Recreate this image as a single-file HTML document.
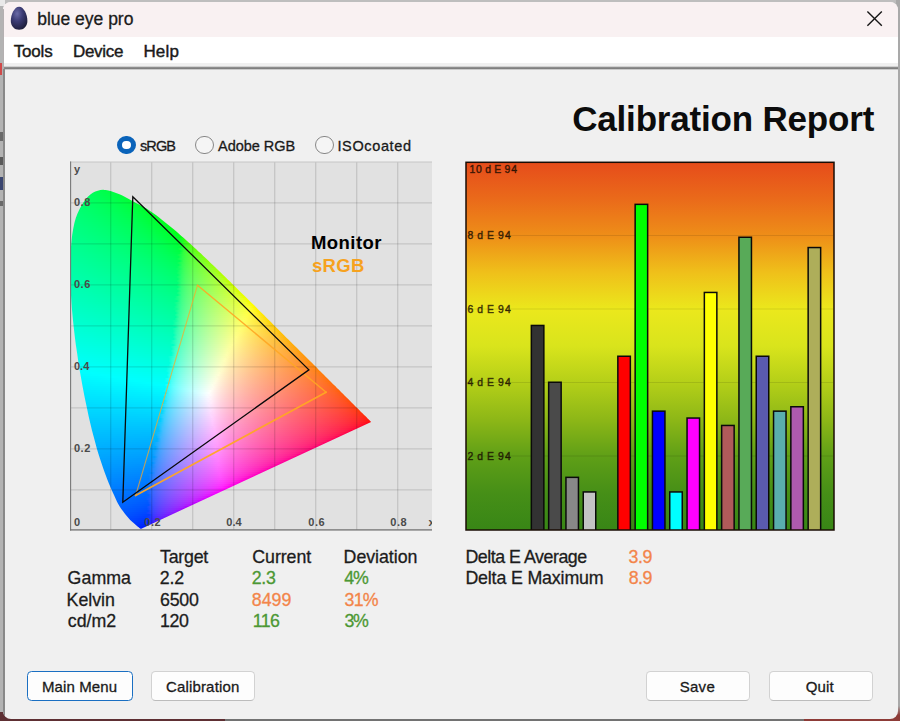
<!DOCTYPE html>
<html lang="en">
<head>
<meta charset="utf-8">
<title>blue eye pro</title>
<style>
html,body{margin:0;padding:0}
body{width:900px;height:721px;overflow:hidden;position:relative;background:#bebebe;font-family:"Liberation Sans",sans-serif}
.abs{position:absolute}
#deskl{left:0;top:0;width:4px;height:721px;background:#b3b3b3}
#deskb1{left:0;top:712px;width:225px;height:9px;background:#5e2f33}
#deskb2{left:225px;top:712px;width:579px;height:9px;background:#727272}
#deskb3{left:804px;top:706px;width:96px;height:15px;background:linear-gradient(180deg,#a8a8a8 0,#8d3b37 60%)}
#deskr{left:896px;top:0;width:4px;height:708px;background:#a9a9a9}
#win{left:2.5px;top:1.5px;width:895.5px;height:717px;border-radius:8px;background:#f0f0f0;overflow:hidden}
#titlebar{left:0;top:0;width:100%;height:35.7px;background:#f9f1f2}
#menubar{left:0;top:35.7px;width:100%;height:25.9px;background:#fff}
#sep{left:0;top:64px;width:100%;height:4.4px;background:linear-gradient(180deg,#f0f0f0 0,#c4c4c4 18%,#8c8c8c 38%,#757575 55%,#8c8c8c 72%,#d4d4d4 90%,#f2f2f2 100%)}
#lborder{left:.2px;top:66px;width:2.5px;height:660px;background:linear-gradient(90deg,#9a9a9a 0,#7e7e7e 40%,#808080 70%,#b8b8b8 100%)}
.btn{box-sizing:border-box;height:29.5px;top:671px;border:1px solid #d2d2d2;border-bottom-color:#bcbcbc;border-radius:4.5px;background:#fdfdfd}
.btn.def{border:1.6px solid #1a6fc2}
.radio{box-sizing:border-box;width:18.4px;height:18.4px;border-radius:50%;top:135.8px;border:1.5px solid #878787;background:#f5f5f5}
.radio.on{border:5.8px solid #0a63ba;background:#fff}
#cie{left:70px;top:161.5px;width:362px;height:369px;background:#e1e1e1;overflow:hidden}
#gam{left:0;top:0;width:900px;height:721px;filter:blur(.65px)}
#gamc{left:0;top:0;width:900px;height:721px;clip-path:path("M141.3 528.7 L141.2 528.7 L141.2 528.7 L141.1 528.7 L141.1 528.7 L141.0 528.7 L141.0 528.7 L140.9 528.7 L140.8 528.8 L140.7 528.8 L140.6 528.8 L140.4 528.8 L140.2 528.6 L139.8 528.3 L139.4 528.0 L138.9 527.6 L138.4 527.1 L137.8 526.7 L137.3 526.2 L136.8 525.8 L136.3 525.4 L135.8 525.0 L135.3 524.5 L134.8 524.0 L134.1 523.4 L133.4 522.8 L132.7 522.2 L131.9 521.5 L131.0 520.7 L130.0 519.7 L128.9 518.5 L127.6 517.0 L126.1 515.2 L124.5 513.2 L122.9 511.1 L121.3 509.0 L120.0 507.0 L118.8 505.1 L117.8 503.3 L116.9 501.5 L116.0 499.6 L115.1 497.5 L114.0 495.1 L112.8 492.5 L111.6 489.7 L110.3 486.7 L108.9 483.5 L107.5 480.0 L106.1 476.3 L104.6 472.3 L103.1 468.1 L101.6 463.6 L100.0 458.8 L98.4 453.8 L96.8 448.4 L95.3 442.7 L93.7 436.7 L92.0 430.4 L90.4 423.7 L88.8 416.9 L87.3 409.8 L85.7 402.3 L84.1 394.5 L82.6 386.4 L81.1 378.2 L79.6 369.8 L78.3 361.5 L77.1 353.0 L75.8 344.4 L74.7 335.7 L73.7 327.0 L72.8 318.4 L72.0 310.0 L71.4 301.7 L70.9 293.4 L70.5 285.3 L70.3 277.4 L70.2 269.6 L70.3 262.2 L70.5 255.0 L70.9 248.0 L71.5 241.2 L72.2 234.7 L73.2 228.7 L74.4 223.1 L75.8 218.1 L77.5 213.4 L79.5 209.2 L81.5 205.4 L83.7 202.0 L85.8 199.0 L88.1 196.5 L90.4 194.5 L92.8 192.8 L95.3 191.6 L97.8 190.7 L100.4 190.1 L103.0 189.8 L105.7 190.0 L108.4 190.6 L111.2 191.3 L114.0 192.2 L116.7 193.2 L119.5 194.3 L122.3 195.6 L125.1 197.0 L127.9 198.5 L130.6 200.0 L133.3 201.5 L136.0 202.9 L138.6 204.3 L141.3 205.7 L143.8 207.1 L146.4 208.6 L149.0 210.2 L151.5 212.0 L154.1 213.8 L156.6 215.6 L159.1 217.5 L161.5 219.5 L164.0 221.4 L166.5 223.4 L169.0 225.4 L171.5 227.5 L174.0 229.5 L176.4 231.6 L178.9 233.7 L181.3 235.9 L183.8 238.0 L186.2 240.2 L188.7 242.4 L191.1 244.6 L193.6 246.9 L196.0 249.1 L198.4 251.4 L200.9 253.6 L203.3 255.9 L205.8 258.2 L208.2 260.6 L210.6 262.9 L213.1 265.2 L215.5 267.6 L218.0 269.9 L220.4 272.3 L222.9 274.7 L225.3 277.0 L227.7 279.4 L230.2 281.8 L232.6 284.2 L235.0 286.6 L237.5 289.0 L239.9 291.4 L242.3 293.7 L244.7 296.1 L247.2 298.5 L249.6 300.9 L252.0 303.3 L254.4 305.6 L256.8 308.0 L259.1 310.4 L261.5 312.7 L263.9 315.1 L266.2 317.4 L268.5 319.7 L270.9 322.1 L273.2 324.4 L275.5 326.7 L277.8 328.9 L280.0 331.2 L282.3 333.4 L284.5 335.7 L286.7 337.9 L288.9 340.1 L291.1 342.2 L293.3 344.4 L295.4 346.5 L297.5 348.6 L299.6 350.7 L301.7 352.8 L303.7 354.8 L305.7 356.8 L307.7 358.7 L309.7 360.7 L311.6 362.6 L313.5 364.5 L315.3 366.3 L317.1 368.1 L318.8 369.9 L320.5 371.6 L322.2 373.2 L323.8 374.8 L325.4 376.4 L327.0 378.0 L328.5 379.5 L330.0 381.0 L331.5 382.5 L332.9 383.9 L334.3 385.3 L335.7 386.6 L336.9 387.9 L338.1 389.0 L339.2 390.1 L340.3 391.2 L341.5 392.4 L342.9 393.8 L344.5 395.4 L346.3 397.2 L348.2 399.1 L350.1 400.9 L351.8 402.7 L353.4 404.3 L354.8 405.7 L356.0 406.9 L357.2 408.0 L358.2 409.1 L359.2 410.0 L360.1 411.0 L361.0 411.9 L361.9 412.7 L362.7 413.5 L363.4 414.2 L364.1 414.9 L364.7 415.5 L365.3 416.1 L365.8 416.6 L366.3 417.1 L366.8 417.6 L367.2 418.0 L367.6 418.4 L367.9 418.7 L368.2 419.0 L368.5 419.3 L368.7 419.5 L369.0 419.8 L369.2 420.0 L369.5 420.3 L369.7 420.5 L370.0 420.8 L370.2 421.0 L370.4 421.2 L370.6 421.4 L370.7 421.5 L370.8 421.6 L370.9 421.7 L371.0 421.8 L371.0 421.8 L371.1 421.9Z")}
#gamc i{position:absolute;display:block}
svg.ov{position:absolute;left:0;top:0;width:900px;height:721px;overflow:visible}
svg.ov text{font-family:"Liberation Sans",sans-serif;white-space:pre}
</style>
</head>
<body>
<div class="abs" id="deskl"></div><div class="abs" style="left:0;top:0;width:5px;height:6px;background:#e9e9e9"></div><div class="abs" id="deskr"></div>
<div class="abs" style="left:0;top:63px;width:2px;height:12px;background:#cf4a4a"></div>
<div class="abs" style="left:0;top:132px;width:3px;height:9px;background:#6a6a6a"></div>
<div class="abs" style="left:0;top:157px;width:3px;height:8px;background:#5a5a5a"></div>
<div class="abs" style="left:0;top:177px;width:3px;height:13px;background:#3a4670"></div>
<div class="abs" style="left:0;top:201px;width:3px;height:5px;background:#6a6a6a"></div>
<div class="abs" id="deskb1"></div><div class="abs" id="deskb2"></div><div class="abs" id="deskb3"></div>
<div class="abs" id="win">
  <div class="abs" id="titlebar"></div>
  <div class="abs" id="menubar"></div>
  <div class="abs" id="sep"></div>
  <div class="abs" id="lborder"></div>
  <div class="abs" style="left:0;top:7px;width:1px;height:60px;background:#b4b0b1"></div>
</div>
<!-- radios -->
<div class="abs radio on" style="left:117.3px"></div>
<div class="abs radio" style="left:195.3px"></div>
<div class="abs radio" style="left:315.3px"></div>
<!-- buttons -->
<div class="abs btn def" style="left:27.4px;width:105.5px"></div>
<div class="abs btn" style="left:151.4px;width:104.1px"></div>
<div class="abs btn" style="left:645.9px;width:104.1px"></div>
<div class="abs btn" style="left:768.7px;width:104.1px"></div>
<!-- CIE chart background -->
<div class="abs" id="cie"></div>
<div class="abs" id="gam"><div class="abs" id="gamc"><i style="left:101px;top:188px;width:3px;height:2px;background:linear-gradient(90deg,#00ff4c 0%,#00ff49 100%)"></i><i style="left:93px;top:190px;width:21px;height:2px;background:linear-gradient(90deg,#00ff55 0%,#00ff52 20%,#00ff4e 40%,#00ff49 60%,#00ff45 80%,#00ff3f 100%)"></i><i style="left:90px;top:192px;width:30px;height:2px;background:linear-gradient(90deg,#00ff5a 0%,#00ff57 12.5%,#00ff53 25%,#00ff50 37.5%,#00ff4c 50%,#00ff48 62.5%,#00ff44 75%,#00ff3f 87.5%,#00ff3a 100%)"></i><i style="left:87px;top:194px;width:37px;height:2px;background:linear-gradient(90deg,#00ff5e 0%,#00ff5b 11.11%,#00ff58 22.22%,#00ff54 33.33%,#00ff50 44.44%,#00ff4c 55.56%,#00ff48 66.67%,#00ff43 77.78%,#00ff3e 88.89%,#00ff38 100%)"></i><i style="left:86px;top:196px;width:42px;height:2px;background:linear-gradient(90deg,#00ff61 0%,#00ff5e 10%,#00ff5a 20%,#00ff57 30%,#00ff53 40%,#00ff4f 50%,#00ff4b 60%,#00ff46 70%,#00ff41 80%,#00ff3b 90%,#00ff35 100%)"></i><i style="left:84px;top:198px;width:48px;height:2px;background:linear-gradient(90deg,#00ff64 0%,#00ff61 8.333%,#00ff5e 16.67%,#00ff5b 25%,#00ff58 33.33%,#00ff54 41.67%,#00ff50 50%,#00ff4c 58.33%,#00ff48 66.67%,#00ff43 75%,#00ff3e 83.33%,#00ff38 91.67%,#00ff31 100%)"></i><i style="left:82px;top:200px;width:53px;height:2px;background:linear-gradient(90deg,#00ff67 0%,#00ff64 7.692%,#00ff61 15.38%,#00ff5e 23.08%,#00ff5b 30.77%,#00ff58 38.46%,#00ff54 46.15%,#00ff50 53.85%,#00ff4c 61.54%,#00ff47 69.23%,#00ff43 76.92%,#00ff3d 84.62%,#00ff37 92.31%,#00ff30 100%)"></i><i style="left:81px;top:202px;width:58px;height:2px;background:linear-gradient(90deg,#00ff6a 0%,#00ff67 7.143%,#00ff64 14.29%,#00ff61 21.43%,#00ff5e 28.57%,#00ff5a 35.71%,#00ff57 42.86%,#00ff53 50%,#00ff4f 57.14%,#00ff4b 64.29%,#00ff46 71.43%,#00ff41 78.57%,#00ff3b 85.71%,#00ff34 92.86%,#00ff2c 100%)"></i><i style="left:80px;top:204px;width:63px;height:2px;background:linear-gradient(90deg,#00ff6c 0%,#00ff69 6.25%,#00ff67 12.5%,#00ff64 18.75%,#00ff61 25%,#00ff5e 31.25%,#00ff5b 37.5%,#00ff57 43.75%,#00ff54 50%,#00ff50 56.25%,#00ff4c 62.5%,#00ff47 68.75%,#00ff43 75%,#00ff3d 81.25%,#00ff37 87.5%,#00ff30 93.75%,#00ff27 100%)"></i><i style="left:79px;top:206px;width:68px;height:2px;background:linear-gradient(90deg,#00ff6e 0%,#00ff6c 5.882%,#00ff69 11.76%,#00ff66 17.65%,#00ff63 23.53%,#00ff60 29.41%,#00ff5d 35.29%,#00ff5a 41.18%,#00ff56 47.06%,#00ff53 52.94%,#00ff4f 58.82%,#00ff4a 64.71%,#00ff46 70.59%,#00ff41 76.47%,#00ff3b 82.35%,#00ff34 88.24%,#00ff2c 94.12%,#00ff22 100%)"></i><i style="left:78px;top:208px;width:72px;height:2px;background:linear-gradient(90deg,#00ff71 0%,#00ff6e 5.556%,#00ff6b 11.11%,#00ff69 16.67%,#00ff66 22.22%,#00ff63 27.78%,#00ff60 33.33%,#00ff5d 38.89%,#00ff5a 44.44%,#00ff56 50%,#00ff52 55.56%,#00ff4e 61.11%,#00ff4a 66.67%,#00ff45 72.22%,#00ff40 77.78%,#00ff3a 83.33%,#00ff33 88.89%,#00ff2a 94.44%,#00ff1f 100%)"></i><i style="left:77px;top:210px;width:76px;height:2px;background:linear-gradient(90deg,#00ff73 0%,#00ff70 5.263%,#00ff6e 10.53%,#00ff6b 15.79%,#00ff69 21.05%,#00ff66 26.32%,#00ff63 31.58%,#00ff60 36.84%,#00ff5c 42.11%,#00ff59 47.37%,#00ff55 52.63%,#00ff52 57.89%,#00ff4d 63.16%,#00ff49 68.42%,#00ff44 73.68%,#00ff3e 78.95%,#00ff38 84.21%,#00ff31 89.47%,#00ff28 94.74%,#00ff1c 100%)"></i><i style="left:76px;top:212px;width:80px;height:2px;background:linear-gradient(90deg,#00ff75 0%,#00ff73 5%,#00ff70 10%,#00ff6e 15%,#00ff6b 20%,#00ff68 25%,#00ff65 30%,#00ff62 35%,#00ff5f 40%,#00ff5c 45%,#00ff59 50%,#00ff55 55%,#00ff51 60%,#00ff4d 65%,#00ff48 70%,#00ff43 75%,#00ff3d 80%,#00ff37 85%,#00ff2f 90%,#00ff26 95%,#00ff17 100%)"></i><i style="left:75px;top:214px;width:83px;height:2px;background:linear-gradient(90deg,#00ff77 0%,#00ff75 4.762%,#00ff73 9.524%,#00ff70 14.29%,#00ff6e 19.05%,#00ff6b 23.81%,#00ff68 28.57%,#00ff65 33.33%,#00ff62 38.1%,#00ff5f 42.86%,#00ff5c 47.62%,#00ff59 52.38%,#00ff55 57.14%,#00ff51 61.9%,#00ff4d 66.67%,#00ff48 71.43%,#00ff43 76.19%,#00ff3d 80.95%,#00ff37 85.71%,#00ff2f 90.48%,#00ff26 95.24%,#00ff18 100%)"></i><i style="left:74px;top:216px;width:87px;height:2px;background:linear-gradient(90deg,#00ff79 0%,#00ff77 4.545%,#00ff75 9.091%,#00ff72 13.64%,#00ff70 18.18%,#00ff6d 22.73%,#00ff6b 27.27%,#00ff68 31.82%,#00ff65 36.36%,#00ff62 40.91%,#00ff5f 45.45%,#00ff5c 50%,#00ff58 54.55%,#00ff54 59.09%,#00ff50 63.64%,#00ff4c 68.18%,#00ff47 72.73%,#00ff42 77.27%,#00ff3c 81.82%,#00ff35 86.36%,#00ff2d 90.91%,#00ff23 95.45%,#00ff12 100%)"></i><i style="left:74px;top:218px;width:90px;height:2px;background:linear-gradient(90deg,#00ff7b 0%,#00ff79 4.545%,#00ff76 9.091%,#00ff74 13.64%,#00ff71 18.18%,#00ff6f 22.73%,#00ff6c 27.27%,#00ff69 31.82%,#00ff66 36.36%,#00ff63 40.91%,#00ff60 45.45%,#00ff5c 50%,#00ff59 54.55%,#00ff55 59.09%,#00ff51 63.64%,#00ff4c 68.18%,#00ff47 72.73%,#00ff42 77.27%,#00ff3c 81.82%,#00ff35 86.36%,#00ff2c 90.91%,#00ff21 95.45%,#00ff09 100%)"></i><i style="left:73px;top:220px;width:93px;height:2px;background:linear-gradient(90deg,#00ff7d 0%,#00ff7b 4.348%,#00ff79 8.696%,#00ff76 13.04%,#00ff74 17.39%,#00ff71 21.74%,#00ff6f 26.09%,#00ff6c 30.43%,#00ff69 34.78%,#00ff66 39.13%,#00ff63 43.48%,#00ff60 47.83%,#00ff5c 52.17%,#00ff59 56.52%,#00ff55 60.87%,#00ff51 65.22%,#00ff4c 69.57%,#00ff47 73.91%,#00ff42 78.26%,#00ff3c 82.61%,#00ff35 86.96%,#00ff2c 91.3%,#00ff21 95.65%,#00ff09 100%)"></i><i style="left:73px;top:222px;width:96px;height:2px;background:linear-gradient(90deg,#00ff7f 0%,#00ff7d 4.167%,#00ff7a 8.333%,#00ff78 12.5%,#00ff76 16.67%,#00ff73 20.83%,#00ff71 25%,#00ff6e 29.17%,#00ff6b 33.33%,#00ff68 37.5%,#00ff65 41.67%,#00ff62 45.83%,#00ff5f 50%,#00ff5b 54.17%,#00ff58 58.33%,#00ff54 62.5%,#00ff50 66.67%,#00ff4b 70.83%,#00ff46 75%,#00ff40 79.17%,#00ff3a 83.33%,#00ff33 87.5%,#00ff2a 91.67%,#00ff1d 95.83%,#00ff00 100%)"></i><i style="left:72px;top:224px;width:99px;height:2px;background:linear-gradient(90deg,#00ff81 0%,#00ff7f 4%,#00ff7d 8%,#00ff7a 12%,#00ff78 16%,#00ff76 20%,#00ff73 24%,#00ff71 28%,#00ff6e 32%,#00ff6b 36%,#00ff68 40%,#00ff65 44%,#00ff62 48%,#00ff5f 52%,#00ff5c 56%,#00ff58 60%,#00ff54 64%,#00ff50 68%,#00ff4b 72%,#00ff46 76%,#00ff40 80%,#00ff3a 84%,#00ff33 88%,#00ff2a 92%,#00ff1d 96%,#00ff00 100%)"></i><i style="left:72px;top:226px;width:101px;height:2px;background:linear-gradient(90deg,#00ff82 0%,#00ff80 4%,#00ff7e 8%,#00ff7c 12%,#00ff7a 16%,#00ff77 20%,#00ff75 24%,#00ff72 28%,#00ff70 32%,#00ff6d 36%,#00ff6a 40%,#00ff67 44%,#00ff64 48%,#00ff60 52%,#00ff5d 56%,#00ff59 60%,#00ff55 64%,#00ff51 68%,#00ff4c 72%,#00ff47 76%,#00ff41 80%,#00ff3b 84%,#00ff34 88%,#00ff2b 92%,#00ff1e 96%,#00ff00 100%)"></i><i style="left:71px;top:228px;width:105px;height:2px;background:linear-gradient(90deg,#00ff84 0%,#00ff82 3.846%,#00ff80 7.692%,#00ff7e 11.54%,#00ff7c 15.38%,#00ff79 19.23%,#00ff77 23.08%,#00ff75 26.92%,#00ff72 30.77%,#00ff6f 34.62%,#00ff6c 38.46%,#00ff6a 42.31%,#00ff66 46.15%,#00ff63 50%,#00ff60 53.85%,#00ff5c 57.69%,#00ff58 61.54%,#00ff54 65.38%,#00ff50 69.23%,#00ff4b 73.08%,#00ff46 76.92%,#00ff40 80.77%,#00ff3a 84.62%,#00ff32 88.46%,#00ff28 92.31%,#00ff1a 96.15%,#00ff00 100%)"></i><i style="left:71px;top:230px;width:107px;height:2px;background:linear-gradient(90deg,#00ff86 0%,#00ff84 3.704%,#00ff82 7.407%,#00ff80 11.11%,#00ff7e 14.81%,#00ff7b 18.52%,#00ff79 22.22%,#00ff77 25.93%,#00ff74 29.63%,#00ff72 33.33%,#00ff6f 37.04%,#00ff6c 40.74%,#00ff69 44.44%,#00ff66 48.15%,#00ff63 51.85%,#00ff60 55.56%,#00ff5c 59.26%,#00ff58 62.96%,#00ff54 66.67%,#00ff50 70.37%,#00ff4b 74.07%,#00ff46 77.78%,#00ff40 81.48%,#00ff39 85.19%,#00ff32 88.89%,#00ff28 92.59%,#00ff1a 96.3%,#00ff00 100%)"></i><i style="left:71px;top:232px;width:110px;height:2px;background:linear-gradient(90deg,#00ff87 0%,#00ff86 3.571%,#00ff84 7.143%,#00ff81 10.71%,#00ff7f 14.29%,#00ff7d 17.86%,#00ff7b 21.43%,#00ff79 25%,#00ff76 28.57%,#00ff74 32.14%,#00ff71 35.71%,#00ff6e 39.29%,#00ff6b 42.86%,#00ff69 46.43%,#00ff65 50%,#00ff62 53.57%,#00ff5f 57.14%,#00ff5b 60.71%,#00ff57 64.29%,#00ff53 67.86%,#00ff4f 71.43%,#00ff4a 75%,#00ff44 78.57%,#00ff3f 82.14%,#00ff38 85.71%,#00ff30 89.29%,#00ff25 92.86%,#00ff15 96.43%,#00ff00 100%)"></i><i style="left:70px;top:234px;width:113px;height:2px;background:linear-gradient(90deg,#00ff8a 0%,#00ff88 3.571%,#00ff86 7.143%,#00ff83 10.71%,#00ff81 14.29%,#00ff7f 17.86%,#00ff7d 21.43%,#00ff7a 25%,#00ff78 28.57%,#00ff75 32.14%,#00ff73 35.71%,#00ff70 39.29%,#00ff6d 42.86%,#00ff6a 46.43%,#00ff67 50%,#00ff64 53.57%,#00ff60 57.14%,#00ff5d 60.71%,#00ff59 64.29%,#00ff55 67.86%,#00ff50 71.43%,#00ff4b 75%,#00ff46 78.57%,#00ff40 82.14%,#00ff39 85.71%,#00ff31 89.29%,#00ff26 92.86%,#00ff16 96.43%,#17ff00 100%)"></i><i style="left:70px;top:236px;width:115px;height:2px;background:linear-gradient(90deg,#00ff8b 0%,#00ff89 3.448%,#00ff87 6.897%,#00ff85 10.34%,#00ff83 13.79%,#00ff81 17.24%,#00ff7f 20.69%,#00ff7d 24.14%,#00ff7a 27.59%,#00ff78 31.03%,#00ff75 34.48%,#00ff73 37.93%,#00ff70 41.38%,#00ff6d 44.83%,#00ff6a 48.28%,#00ff67 51.72%,#00ff64 55.17%,#00ff60 58.62%,#00ff5c 62.07%,#00ff59 65.52%,#00ff54 68.97%,#00ff50 72.41%,#00ff4b 75.86%,#00ff46 79.31%,#00ff40 82.76%,#00ff39 86.21%,#00ff31 89.66%,#00ff26 93.1%,#00ff15 96.55%,#2eff00 100%)"></i><i style="left:70px;top:238px;width:117px;height:2px;background:linear-gradient(90deg,#00ff8d 0%,#00ff8b 3.448%,#00ff89 6.897%,#00ff87 10.34%,#00ff85 13.79%,#00ff82 17.24%,#00ff80 20.69%,#00ff7e 24.14%,#00ff7c 27.59%,#00ff79 31.03%,#00ff77 34.48%,#00ff74 37.93%,#00ff71 41.38%,#00ff6e 44.83%,#00ff6b 48.28%,#00ff68 51.72%,#00ff65 55.17%,#00ff61 58.62%,#00ff5e 62.07%,#00ff5a 65.52%,#00ff55 68.97%,#00ff51 72.41%,#00ff4c 75.86%,#00ff47 79.31%,#00ff40 82.76%,#00ff3a 86.21%,#00ff31 89.66%,#00ff27 93.1%,#1fff16 96.55%,#3cff00 100%)"></i><i style="left:70px;top:240px;width:120px;height:2px;background:linear-gradient(90deg,#00ff8e 0%,#00ff8c 3.333%,#00ff8a 6.667%,#00ff88 10%,#00ff86 13.33%,#00ff84 16.67%,#00ff82 20%,#00ff80 23.33%,#00ff7d 26.67%,#00ff7b 30%,#00ff79 33.33%,#00ff76 36.67%,#00ff73 40%,#00ff71 43.33%,#00ff6e 46.67%,#00ff6b 50%,#00ff67 53.33%,#00ff64 56.67%,#00ff61 60%,#00ff5d 63.33%,#00ff59 66.67%,#00ff54 70%,#00ff50 73.33%,#00ff4b 76.67%,#00ff45 80%,#00ff3f 83.33%,#00ff38 86.67%,#00ff2f 90%,#15ff24 93.33%,#38ff0f 96.67%,#4cff00 100%)"></i><i style="left:70px;top:242px;width:122px;height:2px;background:linear-gradient(90deg,#00ff90 0%,#00ff8e 3.333%,#00ff8c 6.667%,#00ff8a 10%,#00ff88 13.33%,#00ff86 16.67%,#00ff84 20%,#00ff81 23.33%,#00ff7f 26.67%,#00ff7d 30%,#00ff7a 33.33%,#00ff77 36.67%,#00ff75 40%,#00ff72 43.33%,#00ff6f 46.67%,#00ff6c 50%,#00ff69 53.33%,#00ff65 56.67%,#00ff62 60%,#00ff5e 63.33%,#00ff5a 66.67%,#00ff56 70%,#00ff51 73.33%,#00ff4c 76.67%,#00ff46 80%,#00ff40 83.33%,#00ff39 86.67%,#00ff30 90%,#2dff24 93.33%,#44ff10 96.67%,#55ff00 100%)"></i><i style="left:70px;top:244px;width:124px;height:2px;background:linear-gradient(90deg,#00ff91 0%,#00ff8f 3.226%,#00ff8d 6.452%,#00ff8c 9.677%,#00ff8a 12.9%,#00ff88 16.13%,#00ff85 19.35%,#00ff83 22.58%,#00ff81 25.81%,#00ff7f 29.03%,#00ff7c 32.26%,#00ff7a 35.48%,#00ff77 38.71%,#00ff74 41.94%,#00ff72 45.16%,#00ff6f 48.39%,#00ff6c 51.61%,#00ff68 54.84%,#00ff65 58.06%,#00ff61 61.29%,#00ff5e 64.52%,#00ff5a 67.74%,#00ff55 70.97%,#00ff51 74.19%,#00ff4c 77.42%,#00ff46 80.65%,#00ff40 83.87%,#00ff38 87.1%,#1eff30 90.32%,#3cff24 93.55%,#4eff10 96.77%,#5dff00 100%)"></i><i style="left:69px;top:246px;width:127px;height:2px;background:linear-gradient(90deg,#00ff93 0%,#00ff91 3.125%,#00ff90 6.25%,#00ff8e 9.375%,#00ff8c 12.5%,#00ff8a 15.62%,#00ff88 18.75%,#00ff86 21.88%,#00ff83 25%,#00ff81 28.12%,#00ff7f 31.25%,#00ff7c 34.38%,#00ff7a 37.5%,#00ff77 40.62%,#00ff75 43.75%,#00ff72 46.88%,#00ff6f 50%,#00ff6c 53.12%,#00ff69 56.25%,#00ff65 59.38%,#00ff62 62.5%,#00ff5e 65.62%,#00ff5a 68.75%,#00ff55 71.88%,#00ff51 75%,#00ff4c 78.12%,#00ff46 81.25%,#00ff40 84.38%,#00ff39 87.5%,#33ff30 90.62%,#48ff24 93.75%,#57ff10 96.88%,#64ff00 100%)"></i><i style="left:69px;top:248px;width:129px;height:2px;background:linear-gradient(90deg,#00ff95 0%,#00ff93 3.125%,#00ff91 6.25%,#00ff8f 9.375%,#00ff8d 12.5%,#00ff8b 15.62%,#00ff89 18.75%,#00ff87 21.88%,#00ff85 25%,#00ff83 28.12%,#00ff80 31.25%,#00ff7e 34.38%,#00ff7b 37.5%,#00ff79 40.62%,#00ff76 43.75%,#00ff73 46.88%,#00ff70 50%,#00ff6d 53.12%,#00ff6a 56.25%,#00ff67 59.38%,#00ff63 62.5%,#00ff5f 65.62%,#00ff5b 68.75%,#00ff57 71.88%,#00ff52 75%,#00ff4d 78.12%,#00ff47 81.25%,#00ff41 84.38%,#23ff3a 87.5%,#3fff31 90.62%,#51ff25 93.75%,#5fff12 96.88%,#6bff00 100%)"></i><i style="left:69px;top:250px;width:131px;height:2px;background:linear-gradient(90deg,#00ff96 0%,#00ff95 3.03%,#00ff93 6.061%,#00ff91 9.091%,#00ff8f 12.12%,#00ff8d 15.15%,#00ff8b 18.18%,#00ff89 21.21%,#00ff87 24.24%,#00ff85 27.27%,#00ff83 30.3%,#00ff80 33.33%,#00ff7e 36.36%,#00ff7b 39.39%,#00ff79 42.42%,#00ff76 45.45%,#00ff73 48.48%,#00ff70 51.52%,#00ff6d 54.55%,#00ff6a 57.58%,#00ff67 60.61%,#00ff63 63.64%,#00ff5f 66.67%,#00ff5b 69.7%,#00ff57 72.73%,#00ff52 75.76%,#00ff4d 78.79%,#00ff47 81.82%,#00ff41 84.85%,#35ff3a 87.88%,#4aff31 90.91%,#59ff26 93.94%,#66ff13 96.97%,#72ff00 100%)"></i><i style="left:69px;top:252px;width:134px;height:2px;background:linear-gradient(90deg,#00ff98 0%,#00ff96 2.941%,#00ff95 5.882%,#00ff93 8.824%,#00ff91 11.76%,#00ff8f 14.71%,#00ff8d 17.65%,#00ff8b 20.59%,#00ff89 23.53%,#00ff87 26.47%,#00ff85 29.41%,#00ff82 32.35%,#00ff80 35.29%,#00ff7e 38.24%,#00ff7b 41.18%,#00ff78 44.12%,#00ff76 47.06%,#00ff73 50%,#00ff70 52.94%,#00ff6d 55.88%,#00ff69 58.82%,#00ff66 61.76%,#00ff62 64.71%,#00ff5f 67.65%,#00ff5a 70.59%,#00ff56 73.53%,#00ff51 76.47%,#00ff4c 79.41%,#00ff46 82.35%,#31ff40 85.29%,#47ff38 88.24%,#57ff2f 91.18%,#64ff23 94.12%,#70ff08 97.06%,#7bff00 100%)"></i><i style="left:69px;top:254px;width:136px;height:2px;background:linear-gradient(90deg,#00ff9a 0%,#00ff98 2.941%,#00ff96 5.882%,#00ff94 8.824%,#00ff92 11.76%,#00ff91 14.71%,#00ff8f 17.65%,#00ff8d 20.59%,#00ff8b 23.53%,#00ff88 26.47%,#00ff86 29.41%,#00ff84 32.35%,#00ff82 35.29%,#00ff7f 38.24%,#00ff7d 41.18%,#00ff7a 44.12%,#00ff77 47.06%,#00ff74 50%,#00ff71 52.94%,#00ff6e 55.88%,#00ff6b 58.82%,#00ff67 61.76%,#00ff64 64.71%,#00ff60 67.65%,#00ff5c 70.59%,#00ff57 73.53%,#00ff53 76.47%,#00ff4d 79.41%,#1dff48 82.35%,#3dff41 85.29%,#50ff39 88.24%,#5eff30 91.18%,#6bff24 94.12%,#76ff0c 97.06%,#80ff00 100%)"></i><i style="left:69px;top:256px;width:138px;height:2px;background:linear-gradient(90deg,#00ff9b 0%,#00ff9a 2.941%,#00ff98 5.882%,#00ff96 8.824%,#00ff94 11.76%,#00ff92 14.71%,#00ff90 17.65%,#00ff8e 20.59%,#00ff8c 23.53%,#00ff8a 26.47%,#00ff88 29.41%,#00ff85 32.35%,#00ff83 35.29%,#00ff81 38.24%,#00ff7e 41.18%,#00ff7b 44.12%,#00ff79 47.06%,#00ff76 50%,#00ff73 52.94%,#00ff70 55.88%,#00ff6c 58.82%,#00ff69 61.76%,#00ff65 64.71%,#00ff61 67.65%,#00ff5d 70.59%,#00ff59 73.53%,#00ff54 76.47%,#00ff4f 79.41%,#2eff49 82.35%,#46ff42 85.29%,#57ff3b 88.24%,#65ff31 91.18%,#71ff25 94.12%,#7cff0e 97.06%,#86ff00 100%)"></i><i style="left:69px;top:258px;width:140px;height:2px;background:linear-gradient(90deg,#00ff9d 0%,#00ff9b 2.857%,#00ff99 5.714%,#00ff98 8.571%,#00ff96 11.43%,#00ff94 14.29%,#00ff92 17.14%,#00ff90 20%,#00ff8e 22.86%,#00ff8c 25.71%,#00ff8a 28.57%,#00ff88 31.43%,#00ff85 34.29%,#00ff83 37.14%,#00ff81 40%,#00ff7e 42.86%,#00ff7b 45.71%,#00ff79 48.57%,#00ff76 51.43%,#00ff73 54.29%,#00ff70 57.14%,#00ff6c 60%,#00ff69 62.86%,#00ff65 65.71%,#00ff61 68.57%,#00ff5d 71.43%,#00ff59 74.29%,#00ff54 77.14%,#20ff4f 80%,#3eff49 82.86%,#51ff42 85.71%,#60ff3b 88.57%,#6dff32 91.43%,#78ff25 94.29%,#82ff0f 97.14%,#8cff00 100%)"></i><i style="left:69px;top:260px;width:142px;height:2px;background:linear-gradient(90deg,#00ff9e 0%,#00ff9d 2.778%,#00ff9b 5.556%,#00ff99 8.333%,#00ff98 11.11%,#00ff96 13.89%,#00ff94 16.67%,#00ff92 19.44%,#00ff90 22.22%,#00ff8e 25%,#00ff8c 27.78%,#00ff8a 30.56%,#00ff88 33.33%,#00ff85 36.11%,#00ff83 38.89%,#00ff81 41.67%,#00ff7e 44.44%,#00ff7b 47.22%,#00ff79 50%,#00ff76 52.78%,#00ff73 55.56%,#00ff70 58.33%,#00ff6c 61.11%,#00ff69 63.89%,#00ff65 66.67%,#00ff62 69.44%,#00ff5d 72.22%,#00ff59 75%,#00ff54 77.78%,#36ff4f 80.56%,#4bff49 83.33%,#5bff42 86.11%,#68ff3b 88.89%,#74ff32 91.67%,#7fff26 94.44%,#88ff0f 97.22%,#91ff00 100%)"></i><i style="left:69px;top:262px;width:144px;height:2px;background:linear-gradient(90deg,#00ffa0 0%,#00ff9e 2.778%,#00ff9d 5.556%,#00ff9b 8.333%,#00ff99 11.11%,#00ff97 13.89%,#00ff96 16.67%,#00ff94 19.44%,#00ff92 22.22%,#00ff90 25%,#00ff8e 27.78%,#00ff8b 30.56%,#00ff89 33.33%,#00ff87 36.11%,#00ff85 38.89%,#00ff82 41.67%,#00ff80 44.44%,#00ff7d 47.22%,#00ff7a 50%,#00ff77 52.78%,#00ff74 55.56%,#00ff71 58.33%,#00ff6e 61.11%,#00ff6a 63.89%,#00ff67 66.67%,#00ff63 69.44%,#00ff5f 72.22%,#00ff5a 75%,#23ff55 77.78%,#40ff50 80.56%,#53ff4a 83.33%,#62ff44 86.11%,#6fff3c 88.89%,#7aff33 91.67%,#84ff26 94.44%,#8eff11 97.22%,#97ff00 100%)"></i><i style="left:69px;top:264px;width:146px;height:2px;background:linear-gradient(90deg,#00ffa2 0%,#00ffa0 2.778%,#00ff9e 5.556%,#00ff9d 8.333%,#00ff9b 11.11%,#00ff99 13.89%,#00ff97 16.67%,#00ff95 19.44%,#00ff93 22.22%,#00ff91 25%,#00ff8f 27.78%,#00ff8d 30.56%,#00ff8b 33.33%,#00ff89 36.11%,#00ff86 38.89%,#00ff84 41.67%,#00ff81 44.44%,#00ff7e 47.22%,#00ff7c 50%,#00ff79 52.78%,#00ff76 55.56%,#00ff73 58.33%,#00ff6f 61.11%,#00ff6c 63.89%,#00ff68 66.67%,#00ff64 69.44%,#00ff60 72.22%,#00ff5c 75%,#32ff57 77.78%,#49ff51 80.56%,#5aff4b 83.33%,#68ff45 86.11%,#75ff3d 88.89%,#80ff34 91.67%,#8aff27 94.44%,#93ff12 97.22%,#9cff00 100%)"></i><i style="left:69px;top:266px;width:148px;height:2px;background:linear-gradient(90deg,#00ffa3 0%,#00ffa2 2.703%,#00ffa0 5.405%,#00ff9e 8.108%,#00ff9d 10.81%,#00ff9b 13.51%,#00ff99 16.22%,#00ff97 18.92%,#00ff95 21.62%,#00ff93 24.32%,#00ff91 27.03%,#00ff8f 29.73%,#00ff8d 32.43%,#00ff8b 35.14%,#00ff89 37.84%,#00ff86 40.54%,#00ff84 43.24%,#00ff81 45.95%,#00ff7f 48.65%,#00ff7c 51.35%,#00ff79 54.05%,#00ff76 56.76%,#00ff73 59.46%,#00ff6f 62.16%,#00ff6c 64.86%,#00ff68 67.57%,#00ff64 70.27%,#00ff60 72.97%,#26ff5c 75.68%,#42ff57 78.38%,#55ff51 81.08%,#64ff4b 83.78%,#70ff45 86.49%,#7cff3d 89.19%,#86ff34 91.89%,#90ff27 94.59%,#99ff12 97.3%,#a2ff00 100%)"></i><i style="left:69px;top:268px;width:150px;height:2px;background:linear-gradient(90deg,#00ffa5 0%,#00ffa3 2.632%,#00ffa2 5.263%,#00ffa0 7.895%,#00ff9e 10.53%,#00ff9d 13.16%,#00ff9b 15.79%,#00ff99 18.42%,#00ff97 21.05%,#00ff95 23.68%,#00ff93 26.32%,#00ff91 28.95%,#00ff8f 31.58%,#00ff8d 34.21%,#00ff8b 36.84%,#00ff89 39.47%,#00ff86 42.11%,#00ff84 44.74%,#00ff81 47.37%,#00ff7f 50%,#00ff7c 52.63%,#00ff79 55.26%,#00ff76 57.89%,#00ff73 60.53%,#00ff70 63.16%,#00ff6c 65.79%,#00ff68 68.42%,#00ff65 71.05%,#11ff60 73.68%,#3aff5c 76.32%,#4fff57 78.95%,#5fff51 81.58%,#6cff4c 84.21%,#78ff45 86.84%,#83ff3d 89.47%,#8dff34 92.11%,#96ff27 94.74%,#9fff12 97.37%,#a7ff00 100%)"></i><i style="left:69px;top:270px;width:152px;height:2px;background:linear-gradient(90deg,#00ffa7 0%,#00ffa5 2.632%,#00ffa3 5.263%,#00ffa2 7.895%,#00ffa0 10.53%,#00ff9e 13.16%,#00ff9d 15.79%,#00ff9b 18.42%,#00ff99 21.05%,#00ff97 23.68%,#00ff95 26.32%,#00ff93 28.95%,#00ff91 31.58%,#00ff8f 34.21%,#00ff8d 36.84%,#00ff8a 39.47%,#00ff88 42.11%,#00ff85 44.74%,#00ff83 47.37%,#00ff80 50%,#00ff7d 52.63%,#00ff7a 55.26%,#00ff77 57.89%,#00ff74 60.53%,#00ff71 63.16%,#00ff6e 65.79%,#00ff6a 68.42%,#00ff66 71.05%,#28ff62 73.68%,#44ff5d 76.32%,#57ff58 78.95%,#65ff53 81.58%,#72ff4d 84.21%,#7eff46 86.84%,#88ff3e 89.47%,#92ff35 92.11%,#9bff28 94.74%,#a4ff13 97.37%,#acff00 100%)"></i><i style="left:69px;top:272px;width:155px;height:2px;background:linear-gradient(90deg,#00ffa8 0%,#00ffa7 2.564%,#00ffa5 5.128%,#00ffa3 7.692%,#00ffa2 10.26%,#00ffa0 12.82%,#00ff9e 15.38%,#00ff9d 17.95%,#00ff9b 20.51%,#00ff99 23.08%,#00ff97 25.64%,#00ff95 28.21%,#00ff93 30.77%,#00ff91 33.33%,#00ff8f 35.9%,#00ff8c 38.46%,#00ff8a 41.03%,#00ff88 43.59%,#00ff85 46.15%,#00ff83 48.72%,#00ff80 51.28%,#00ff7d 53.85%,#00ff7a 56.41%,#00ff77 58.97%,#00ff74 61.54%,#00ff71 64.1%,#00ff6d 66.67%,#00ff69 69.23%,#22ff65 71.79%,#41ff61 74.36%,#54ff5c 76.92%,#64ff57 79.49%,#71ff52 82.05%,#7cff4b 84.62%,#87ff44 87.18%,#91ff3c 89.74%,#9aff32 92.31%,#a3ff24 94.87%,#abff00 97.44%,#b3ff00 100%)"></i><i style="left:69px;top:274px;width:157px;height:2px;background:linear-gradient(90deg,#00ffaa 0%,#00ffa8 2.564%,#00ffa7 5.128%,#00ffa5 7.692%,#00ffa3 10.26%,#00ffa2 12.82%,#00ffa0 15.38%,#00ff9e 17.95%,#00ff9c 20.51%,#00ff9b 23.08%,#00ff99 25.64%,#00ff97 28.21%,#00ff95 30.77%,#00ff92 33.33%,#00ff90 35.9%,#00ff8e 38.46%,#00ff8c 41.03%,#00ff89 43.59%,#00ff87 46.15%,#00ff84 48.72%,#00ff81 51.28%,#00ff7f 53.85%,#00ff7c 56.41%,#00ff79 58.97%,#00ff75 61.54%,#00ff72 64.1%,#00ff6f 66.67%,#00ff6b 69.23%,#31ff67 71.79%,#4aff62 74.36%,#5bff5d 76.92%,#6aff58 79.49%,#77ff53 82.05%,#82ff4c 84.62%,#8cff45 87.18%,#96ff3d 89.74%,#9fff33 92.31%,#a8ff25 94.87%,#b1ff00 97.44%,#b9ff00 100%)"></i><i style="left:69px;top:276px;width:159px;height:2px;background:linear-gradient(90deg,#00ffab 0%,#00ffaa 2.5%,#00ffa8 5%,#00ffa7 7.5%,#00ffa5 10%,#00ffa4 12.5%,#00ffa2 15%,#00ffa0 17.5%,#00ff9e 20%,#00ff9d 22.5%,#00ff9b 25%,#00ff99 27.5%,#00ff97 30%,#00ff95 32.5%,#00ff93 35%,#00ff90 37.5%,#00ff8e 40%,#00ff8c 42.5%,#00ff89 45%,#00ff87 47.5%,#00ff84 50%,#00ff82 52.5%,#00ff7f 55%,#00ff7c 57.5%,#00ff79 60%,#00ff76 62.5%,#00ff72 65%,#00ff6f 67.5%,#25ff6b 70%,#43ff67 72.5%,#56ff62 75%,#65ff5e 77.5%,#73ff58 80%,#7eff53 82.5%,#89ff4c 85%,#93ff45 87.5%,#9cff3d 90%,#a5ff33 92.5%,#aeff25 95%,#b6ff00 97.5%,#beff00 100%)"></i><i style="left:69px;top:278px;width:161px;height:2px;background:linear-gradient(90deg,#00ffad 0%,#00ffac 2.5%,#00ffaa 5%,#00ffa8 7.5%,#00ffa7 10%,#00ffa5 12.5%,#00ffa4 15%,#00ffa2 17.5%,#00ffa0 20%,#00ff9e 22.5%,#00ff9c 25%,#00ff9a 27.5%,#00ff98 30%,#00ff96 32.5%,#00ff94 35%,#00ff92 37.5%,#00ff90 40%,#00ff8d 42.5%,#00ff8b 45%,#00ff89 47.5%,#00ff86 50%,#00ff83 52.5%,#00ff80 55%,#00ff7d 57.5%,#00ff7a 60%,#00ff77 62.5%,#00ff74 65%,#00ff70 67.5%,#33ff6c 70%,#4cff68 72.5%,#5dff64 75%,#6cff5f 77.5%,#78ff5a 80%,#84ff54 82.5%,#8eff4d 85%,#98ff46 87.5%,#a2ff3e 90%,#aaff33 92.5%,#b3ff25 95%,#bbff00 97.5%,#c3ff00 100%)"></i><i style="left:69px;top:280px;width:163px;height:2px;background:linear-gradient(90deg,#00ffaf 0%,#00ffad 2.439%,#00ffac 4.878%,#00ffaa 7.317%,#00ffa9 9.756%,#00ffa7 12.2%,#00ffa5 14.63%,#00ffa4 17.07%,#00ffa2 19.51%,#00ffa0 21.95%,#00ff9e 24.39%,#00ff9d 26.83%,#00ff9b 29.27%,#00ff99 31.71%,#00ff97 34.15%,#00ff94 36.59%,#00ff92 39.02%,#00ff90 41.46%,#00ff8e 43.9%,#00ff8b 46.34%,#00ff89 48.78%,#00ff86 51.22%,#00ff83 53.66%,#00ff81 56.1%,#00ff7e 58.54%,#00ff7b 60.98%,#00ff77 63.41%,#00ff74 65.85%,#28ff70 68.29%,#45ff6c 70.73%,#58ff68 73.17%,#67ff64 75.61%,#75ff5f 78.05%,#80ff5a 80.49%,#8bff54 82.93%,#95ff4d 85.37%,#9fff46 87.8%,#a8ff3e 90.24%,#b0ff33 92.68%,#b8ff25 95.12%,#c0ff00 97.56%,#c8ff00 100%)"></i><i style="left:69px;top:282px;width:165px;height:2px;background:linear-gradient(90deg,#00ffb0 0%,#00ffaf 2.439%,#00ffad 4.878%,#00ffac 7.317%,#00ffaa 9.756%,#00ffa9 12.2%,#00ffa7 14.63%,#00ffa5 17.07%,#00ffa4 19.51%,#00ffa2 21.95%,#00ffa0 24.39%,#00ff9e 26.83%,#00ff9c 29.27%,#00ff9a 31.71%,#00ff98 34.15%,#00ff96 36.59%,#00ff94 39.02%,#00ff92 41.46%,#00ff8f 43.9%,#00ff8d 46.34%,#00ff8a 48.78%,#00ff88 51.22%,#00ff85 53.66%,#00ff82 56.1%,#00ff7f 58.54%,#00ff7c 60.98%,#00ff79 63.41%,#00ff76 65.85%,#35ff72 68.29%,#4dff6e 70.73%,#5fff6a 73.17%,#6eff65 75.61%,#7aff60 78.05%,#86ff5b 80.49%,#91ff55 82.93%,#9aff4e 85.37%,#a4ff47 87.8%,#adff3e 90.24%,#b5ff34 92.68%,#beff26 95.12%,#c6ff00 97.56%,#cdff00 100%)"></i><i style="left:69px;top:284px;width:167px;height:2px;background:linear-gradient(90deg,#00ffb2 0%,#00ffb1 2.381%,#00ffaf 4.762%,#00ffae 7.143%,#00ffac 9.524%,#00ffab 11.9%,#00ffa9 14.29%,#00ffa7 16.67%,#00ffa6 19.05%,#00ffa4 21.43%,#00ffa2 23.81%,#00ffa0 26.19%,#00ff9e 28.57%,#00ff9c 30.95%,#00ff9a 33.33%,#00ff98 35.71%,#00ff96 38.1%,#00ff94 40.48%,#00ff92 42.86%,#00ff8f 45.24%,#00ff8d 47.62%,#00ff8b 50%,#00ff88 52.38%,#00ff85 54.76%,#00ff82 57.14%,#00ff7f 59.52%,#00ff7c 61.9%,#00ff79 64.29%,#2bff76 66.67%,#47ff72 69.05%,#5aff6e 71.43%,#69ff6a 73.81%,#77ff65 76.19%,#82ff60 78.57%,#8dff5b 80.95%,#97ff55 83.33%,#a1ff4e 85.71%,#aaff47 88.1%,#b3ff3e 90.48%,#bbff34 92.86%,#c3ff25 95.24%,#cbff00 97.62%,#d2ff00 100%)"></i><i style="left:69px;top:286px;width:169px;height:2px;background:linear-gradient(90deg,#00ffb4 0%,#00ffb2 2.381%,#00ffb1 4.762%,#00ffaf 7.143%,#00ffae 9.524%,#00ffac 11.9%,#00ffab 14.29%,#00ffa9 16.67%,#00ffa7 19.05%,#00ffa6 21.43%,#00ffa4 23.81%,#00ffa2 26.19%,#00ffa0 28.57%,#00ff9e 30.95%,#00ff9c 33.33%,#00ff9a 35.71%,#00ff98 38.1%,#00ff96 40.48%,#00ff93 42.86%,#00ff91 45.24%,#00ff8f 47.62%,#00ff8c 50%,#00ff8a 52.38%,#00ff87 54.76%,#00ff84 57.14%,#00ff81 59.52%,#00ff7e 61.9%,#00ff7b 64.29%,#37ff77 66.67%,#4fff73 69.05%,#61ff6f 71.43%,#6fff6b 73.81%,#7cff66 76.19%,#88ff61 78.57%,#93ff5c 80.95%,#9dff56 83.33%,#a6ff4f 85.71%,#afff48 88.1%,#b8ff3f 90.48%,#c0ff34 92.86%,#c8ff25 95.24%,#d0ff00 97.62%,#d7ff00 100%)"></i><i style="left:69px;top:288px;width:171px;height:2px;background:linear-gradient(90deg,#00ffb5 0%,#00ffb4 2.326%,#00ffb2 4.651%,#00ffb1 6.977%,#00ffb0 9.302%,#00ffae 11.63%,#00ffac 13.95%,#00ffab 16.28%,#00ffa9 18.6%,#00ffa8 20.93%,#00ffa6 23.26%,#00ffa4 25.58%,#00ffa2 27.91%,#00ffa0 30.23%,#00ff9e 32.56%,#00ff9c 34.88%,#00ff9a 37.21%,#00ff98 39.53%,#00ff96 41.86%,#00ff94 44.19%,#00ff91 46.51%,#00ff8f 48.84%,#00ff8c 51.16%,#00ff8a 53.49%,#00ff87 55.81%,#00ff84 58.14%,#00ff81 60.47%,#00ff7e 62.79%,#2eff7b 65.12%,#49ff77 67.44%,#5cff73 69.77%,#6bff6f 72.09%,#79ff6b 74.42%,#85ff66 76.74%,#90ff61 79.07%,#9aff5c 81.4%,#a3ff56 83.72%,#adff4f 86.05%,#b5ff48 88.37%,#beff3f 90.7%,#c6ff34 93.02%,#ceff25 95.35%,#d5ff00 97.67%,#dcff00 100%)"></i><i style="left:69px;top:290px;width:173px;height:2px;background:linear-gradient(90deg,#00ffb7 0%,#00ffb6 2.326%,#00ffb4 4.651%,#00ffb3 6.977%,#00ffb1 9.302%,#00ffb0 11.63%,#00ffae 13.95%,#00ffad 16.28%,#00ffab 18.6%,#00ffa9 20.93%,#00ffa7 23.26%,#00ffa6 25.58%,#00ffa4 27.91%,#00ffa2 30.23%,#00ffa0 32.56%,#00ff9e 34.88%,#00ff9c 37.21%,#00ff9a 39.53%,#00ff98 41.86%,#00ff95 44.19%,#00ff93 46.51%,#00ff91 48.84%,#00ff8e 51.16%,#00ff8b 53.49%,#00ff89 55.81%,#00ff86 58.14%,#00ff83 60.47%,#00ff80 62.79%,#39ff7c 65.12%,#51ff79 67.44%,#63ff75 69.77%,#71ff71 72.09%,#7eff6c 74.42%,#8aff68 76.74%,#95ff63 79.07%,#9fff5d 81.4%,#a9ff57 83.72%,#b2ff50 86.05%,#baff49 88.37%,#c3ff40 90.7%,#cbff34 93.02%,#d3ff25 95.35%,#daff00 97.67%,#e1ff00 100%)"></i><i style="left:69px;top:292px;width:175px;height:2px;background:linear-gradient(90deg,#00ffb9 0%,#00ffb7 2.273%,#00ffb6 4.545%,#00ffb4 6.818%,#00ffb3 9.091%,#00ffb2 11.36%,#00ffb0 13.64%,#00ffae 15.91%,#00ffad 18.18%,#00ffab 20.45%,#00ffa9 22.73%,#00ffa8 25%,#00ffa6 27.27%,#00ffa4 29.55%,#00ffa2 31.82%,#00ffa0 34.09%,#00ff9e 36.36%,#00ff9c 38.64%,#00ff9a 40.91%,#00ff98 43.18%,#00ff96 45.45%,#00ff93 47.73%,#00ff91 50%,#00ff8e 52.27%,#00ff8c 54.55%,#00ff89 56.82%,#00ff86 59.09%,#00ff83 61.36%,#30ff80 63.64%,#4bff7d 65.91%,#5eff79 68.18%,#6dff75 70.45%,#7bff71 72.73%,#87ff6c 75%,#92ff68 77.27%,#9cff63 79.55%,#a6ff5d 81.82%,#afff57 84.09%,#b8ff50 86.36%,#c0ff48 88.64%,#c9ff3f 90.91%,#d1ff34 93.18%,#d8ff25 95.45%,#dfff00 97.73%,#e6ff00 100%)"></i><i style="left:69px;top:294px;width:177px;height:2px;background:linear-gradient(90deg,#00ffba 0%,#00ffb9 2.273%,#00ffb8 4.545%,#00ffb6 6.818%,#00ffb5 9.091%,#00ffb3 11.36%,#00ffb2 13.64%,#00ffb0 15.91%,#00ffaf 18.18%,#00ffad 20.45%,#00ffab 22.73%,#00ffa9 25%,#00ffa8 27.27%,#00ffa6 29.55%,#00ffa4 31.82%,#00ffa2 34.09%,#00ffa0 36.36%,#00ff9e 38.64%,#00ff9c 40.91%,#00ff9a 43.18%,#00ff97 45.45%,#00ff95 47.73%,#00ff93 50%,#00ff90 52.27%,#00ff8d 54.55%,#00ff8b 56.82%,#00ff88 59.09%,#00ff85 61.36%,#3cff81 63.64%,#53ff7e 65.91%,#65ff7a 68.18%,#73ff76 70.45%,#80ff72 72.73%,#8cff6e 75%,#97ff69 77.27%,#a1ff64 79.55%,#abff5e 81.82%,#b4ff58 84.09%,#bdff51 86.36%,#c6ff49 88.64%,#ceff40 90.91%,#d6ff35 93.18%,#ddff26 95.45%,#e4ff00 97.73%,#ecff00 100%)"></i><i style="left:70px;top:296px;width:178px;height:2px;background:linear-gradient(90deg,#00ffbc 0%,#00ffba 2.273%,#00ffb9 4.545%,#00ffb7 6.818%,#00ffb6 9.091%,#00ffb5 11.36%,#00ffb3 13.64%,#00ffb1 15.91%,#00ffb0 18.18%,#00ffae 20.45%,#00ffad 22.73%,#00ffab 25%,#00ffa9 27.27%,#00ffa7 29.55%,#00ffa5 31.82%,#00ffa3 34.09%,#00ffa1 36.36%,#00ff9f 38.64%,#00ff9d 40.91%,#00ff9b 43.18%,#00ff99 45.45%,#00ff96 47.73%,#00ff94 50%,#00ff91 52.27%,#00ff8f 54.55%,#00ff8c 56.82%,#00ff89 59.09%,#28ff86 61.36%,#47ff83 63.64%,#5cff7f 65.91%,#6cff7b 68.18%,#7aff77 70.45%,#87ff73 72.73%,#92ff6f 75%,#9dff6a 77.27%,#a7ff65 79.55%,#b0ff5f 81.82%,#baff59 84.09%,#c2ff52 86.36%,#cbff4a 88.64%,#d3ff40 90.91%,#dbff35 93.18%,#e2ff27 95.45%,#eaff00 97.73%,#f1ff00 100%)"></i><i style="left:70px;top:298px;width:180px;height:2px;background:linear-gradient(90deg,#00ffbd 0%,#00ffbc 2.222%,#00ffbb 4.444%,#00ffb9 6.667%,#00ffb8 8.889%,#00ffb6 11.11%,#00ffb5 13.33%,#00ffb3 15.56%,#00ffb2 17.78%,#00ffb0 20%,#00ffaf 22.22%,#00ffad 24.44%,#00ffab 26.67%,#00ffa9 28.89%,#00ffa8 31.11%,#00ffa6 33.33%,#00ffa4 35.56%,#00ffa2 37.78%,#00ffa0 40%,#00ff9d 42.22%,#00ff9b 44.44%,#00ff99 46.67%,#00ff97 48.89%,#00ff94 51.11%,#00ff92 53.33%,#00ff8f 55.56%,#00ff8c 57.78%,#18ff89 60%,#41ff86 62.22%,#57ff83 64.44%,#68ff7f 66.67%,#77ff7b 68.89%,#83ff77 71.11%,#8fff73 73.33%,#9aff6f 75.56%,#a4ff6a 77.78%,#aeff65 80%,#b7ff5f 82.22%,#c0ff59 84.44%,#c9ff52 86.67%,#d1ff4a 88.89%,#d9ff40 91.11%,#e1ff35 93.33%,#e8ff27 95.56%,#efff00 97.78%,#f6ff00 100%)"></i><i style="left:70px;top:300px;width:182px;height:2px;background:linear-gradient(90deg,#00ffbf 0%,#00ffbe 2.174%,#00ffbc 4.348%,#00ffbb 6.522%,#00ffba 8.696%,#00ffb8 10.87%,#00ffb7 13.04%,#00ffb5 15.22%,#00ffb4 17.39%,#00ffb2 19.57%,#00ffb1 21.74%,#00ffaf 23.91%,#00ffad 26.09%,#00ffac 28.26%,#00ffaa 30.43%,#00ffa8 32.61%,#00ffa6 34.78%,#00ffa4 36.96%,#00ffa2 39.13%,#00ffa0 41.3%,#00ff9e 43.48%,#00ff9c 45.65%,#00ff99 47.83%,#00ff97 50%,#00ff95 52.17%,#00ff92 54.35%,#00ff8f 56.52%,#00ff8d 58.7%,#3aff8a 60.87%,#52ff86 63.04%,#64ff83 65.22%,#73ff7f 67.39%,#80ff7c 69.57%,#8cff78 71.74%,#97ff73 73.91%,#a2ff6f 76.09%,#acff6a 78.26%,#b5ff65 80.43%,#beff5f 82.61%,#c7ff59 84.78%,#cfff51 86.96%,#d7ff49 89.13%,#dfff40 91.3%,#e6ff35 93.48%,#edff27 95.65%,#f4ff00 97.83%,#fbff00 100%)"></i><i style="left:70px;top:302px;width:184px;height:2px;background:linear-gradient(90deg,#00ffc1 0%,#00ffbf 2.174%,#00ffbe 4.348%,#00ffbd 6.522%,#00ffbb 8.696%,#00ffba 10.87%,#00ffb8 13.04%,#00ffb7 15.22%,#00ffb5 17.39%,#00ffb4 19.57%,#00ffb2 21.74%,#00ffb1 23.91%,#00ffaf 26.09%,#00ffad 28.26%,#00ffab 30.43%,#00ffaa 32.61%,#00ffa8 34.78%,#00ffa6 36.96%,#00ffa4 39.13%,#00ffa2 41.3%,#00ffa0 43.48%,#00ff9d 45.65%,#00ff9b 47.83%,#00ff99 50%,#00ff96 52.17%,#00ff94 54.35%,#00ff91 56.52%,#1fff8e 58.7%,#44ff8b 60.87%,#59ff88 63.04%,#6aff84 65.22%,#79ff81 67.39%,#86ff7d 69.57%,#92ff79 71.74%,#9dff75 73.91%,#a7ff70 76.09%,#b1ff6b 78.26%,#baff66 80.43%,#c3ff60 82.61%,#ccff59 84.78%,#d4ff52 86.96%,#dcff4a 89.13%,#e4ff41 91.3%,#ebff36 93.48%,#f2ff28 95.65%,#f9ff00 97.83%,#fffe00 100%)"></i><i style="left:70px;top:304px;width:186px;height:2px;background:linear-gradient(90deg,#00ffc2 0%,#00ffc1 2.174%,#00ffc0 4.348%,#00ffbe 6.522%,#00ffbd 8.696%,#00ffbc 10.87%,#00ffba 13.04%,#00ffb9 15.22%,#00ffb7 17.39%,#00ffb6 19.57%,#00ffb4 21.74%,#00ffb2 23.91%,#00ffb1 26.09%,#00ffaf 28.26%,#00ffad 30.43%,#00ffab 32.61%,#00ffa9 34.78%,#00ffa7 36.96%,#00ffa5 39.13%,#00ffa3 41.3%,#00ffa1 43.48%,#00ff9f 45.65%,#00ff9d 47.83%,#00ff9a 50%,#00ff98 52.17%,#00ff95 54.35%,#00ff93 56.52%,#2fff90 58.7%,#4cff8d 60.87%,#60ff89 63.04%,#71ff86 65.22%,#7fff82 67.39%,#8bff7e 69.57%,#97ff7a 71.74%,#a2ff76 73.91%,#acff71 76.09%,#b6ff6c 78.26%,#bfff67 80.43%,#c8ff61 82.61%,#d1ff5a 84.78%,#d9ff53 86.96%,#e1ff4b 89.13%,#e9ff42 91.3%,#f0ff37 93.48%,#f7ff28 95.65%,#feff00 97.83%,#fff900 100%)"></i><i style="left:70px;top:306px;width:188px;height:2px;background:linear-gradient(90deg,#00ffc4 0%,#00ffc3 2.128%,#00ffc2 4.255%,#00ffc0 6.383%,#00ffbf 8.511%,#00ffbd 10.64%,#00ffbc 12.77%,#00ffbb 14.89%,#00ffb9 17.02%,#00ffb8 19.15%,#00ffb6 21.28%,#00ffb4 23.4%,#00ffb3 25.53%,#00ffb1 27.66%,#00ffaf 29.79%,#00ffae 31.91%,#00ffac 34.04%,#00ffaa 36.17%,#00ffa8 38.3%,#00ffa6 40.43%,#00ffa4 42.55%,#00ffa2 44.68%,#00ff9f 46.81%,#00ff9d 48.94%,#00ff9b 51.06%,#00ff98 53.19%,#00ff96 55.32%,#24ff93 57.45%,#47ff90 59.57%,#5cff8d 61.7%,#6dff8a 63.83%,#7bff86 65.96%,#88ff82 68.09%,#94ff7f 70.21%,#9fff7a 72.34%,#aaff76 74.47%,#b3ff71 76.6%,#bdff6c 78.72%,#c6ff67 80.85%,#cfff61 82.98%,#d7ff5a 85.11%,#e0ff53 87.23%,#e7ff4b 89.36%,#eeff42 91.49%,#f6ff37 93.62%,#fdff29 95.74%,#fffa00 97.87%,#fff400 100%)"></i><i style="left:70px;top:308px;width:190px;height:2px;background:linear-gradient(90deg,#00ffc6 0%,#00ffc5 2.083%,#00ffc3 4.167%,#00ffc2 6.25%,#00ffc1 8.333%,#00ffbf 10.42%,#00ffbe 12.5%,#00ffbd 14.58%,#00ffbb 16.67%,#00ffba 18.75%,#00ffb8 20.83%,#00ffb7 22.92%,#00ffb5 25%,#00ffb3 27.08%,#00ffb2 29.17%,#00ffb0 31.25%,#00ffae 33.33%,#00ffac 35.42%,#00ffaa 37.5%,#00ffa8 39.58%,#00ffa6 41.67%,#00ffa4 43.75%,#00ffa2 45.83%,#00ffa0 47.92%,#00ff9e 50%,#00ff9b 52.08%,#00ff99 54.17%,#11ff96 56.25%,#40ff93 58.33%,#57ff90 60.42%,#69ff8d 62.5%,#78ff8a 64.58%,#85ff86 66.67%,#91ff83 68.75%,#9dff7f 70.83%,#a7ff7b 72.92%,#b1ff76 75%,#bbff72 77.08%,#c4ff6c 79.17%,#cdff67 81.25%,#d5ff61 83.33%,#deff5a 85.42%,#e5ff53 87.5%,#edff4c 89.58%,#f4ff43 91.67%,#fbff38 93.75%,#fffc28 95.83%,#fff500 97.92%,#ffef00 100%)"></i><i style="left:71px;top:310px;width:191px;height:2px;background:linear-gradient(90deg,#00ffc7 0%,#00ffc6 2.083%,#00ffc5 4.167%,#00ffc3 6.25%,#00ffc2 8.333%,#00ffc1 10.42%,#00ffbf 12.5%,#00ffbe 14.58%,#00ffbd 16.67%,#00ffbb 18.75%,#00ffba 20.83%,#00ffb8 22.92%,#00ffb6 25%,#00ffb5 27.08%,#00ffb3 29.17%,#00ffb1 31.25%,#00ffb0 33.33%,#00ffae 35.42%,#00ffac 37.5%,#00ffaa 39.58%,#00ffa8 41.67%,#00ffa6 43.75%,#00ffa4 45.83%,#00ffa1 47.92%,#00ff9f 50%,#00ff9d 52.08%,#00ff9a 54.17%,#2eff98 56.25%,#4cff95 58.33%,#60ff92 60.42%,#71ff8e 62.5%,#7fff8b 64.58%,#8cff88 66.67%,#98ff84 68.75%,#a3ff80 70.83%,#adff7c 72.92%,#b7ff77 75%,#c0ff73 77.08%,#c9ff6d 79.17%,#d2ff68 81.25%,#dbff62 83.33%,#e3ff5b 85.42%,#ebff54 87.5%,#f2ff4c 89.58%,#f9ff43 91.67%,#fffe38 93.75%,#fff728 95.83%,#fff003 97.92%,#ffea00 100%)"></i><i style="left:71px;top:312px;width:193px;height:2px;background:linear-gradient(90deg,#00ffc9 0%,#00ffc8 2.083%,#00ffc6 4.167%,#00ffc5 6.25%,#00ffc4 8.333%,#00ffc3 10.42%,#00ffc1 12.5%,#00ffc0 14.58%,#00ffbe 16.67%,#00ffbd 18.75%,#00ffbb 20.83%,#00ffba 22.92%,#00ffb8 25%,#00ffb6 27.08%,#00ffb5 29.17%,#00ffb3 31.25%,#00ffb1 33.33%,#00ffaf 35.42%,#00ffae 37.5%,#00ffac 39.58%,#00ffaa 41.67%,#00ffa7 43.75%,#00ffa5 45.83%,#00ffa3 47.92%,#00ffa1 50%,#00ff9e 52.08%,#00ff9c 54.17%,#3aff99 56.25%,#54ff96 58.33%,#67ff93 60.42%,#77ff90 62.5%,#85ff8d 64.58%,#91ff89 66.67%,#9dff85 68.75%,#a8ff81 70.83%,#b2ff7d 72.92%,#bcff79 75%,#c5ff74 77.08%,#ceff6f 79.17%,#d7ff69 81.25%,#e0ff63 83.33%,#e8ff5c 85.42%,#f0ff55 87.5%,#f7ff4e 89.58%,#feff44 91.67%,#fff838 93.75%,#fff228 95.83%,#ffec07 97.92%,#ffe600 100%)"></i><i style="left:71px;top:314px;width:195px;height:2px;background:linear-gradient(90deg,#00ffcb 0%,#00ffc9 2.041%,#00ffc8 4.082%,#00ffc7 6.122%,#00ffc6 8.163%,#00ffc4 10.2%,#00ffc3 12.24%,#00ffc2 14.29%,#00ffc0 16.33%,#00ffbf 18.37%,#00ffbd 20.41%,#00ffbc 22.45%,#00ffba 24.49%,#00ffb9 26.53%,#00ffb7 28.57%,#00ffb5 30.61%,#00ffb4 32.65%,#00ffb2 34.69%,#00ffb0 36.73%,#00ffae 38.78%,#00ffac 40.82%,#00ffaa 42.86%,#00ffa8 44.9%,#00ffa6 46.94%,#00ffa4 48.98%,#00ffa1 51.02%,#00ff9f 53.06%,#32ff9c 55.1%,#4fff9a 57.14%,#63ff97 59.18%,#73ff94 61.22%,#82ff90 63.27%,#8eff8d 65.31%,#9aff89 67.35%,#a5ff86 69.39%,#b0ff82 71.43%,#baff7d 73.47%,#c3ff79 75.51%,#cdff74 77.55%,#d5ff6f 79.59%,#deff69 81.63%,#e7ff63 83.67%,#eeff5d 85.71%,#f6ff56 87.76%,#fdff4e 89.8%,#fffa43 91.84%,#fff337 93.88%,#ffed27 95.92%,#ffe707 97.96%,#ffe100 100%)"></i><i style="left:71px;top:316px;width:197px;height:2px;background:linear-gradient(90deg,#00ffcc 0%,#00ffcb 2.041%,#00ffca 4.082%,#00ffc9 6.122%,#00ffc7 8.163%,#00ffc6 10.2%,#00ffc5 12.24%,#00ffc3 14.29%,#00ffc2 16.33%,#00ffc1 18.37%,#00ffbf 20.41%,#00ffbe 22.45%,#00ffbc 24.49%,#00ffba 26.53%,#00ffb9 28.57%,#00ffb7 30.61%,#00ffb5 32.65%,#00ffb4 34.69%,#00ffb2 36.73%,#00ffb0 38.78%,#00ffae 40.82%,#00ffac 42.86%,#00ffaa 44.9%,#00ffa8 46.94%,#00ffa5 48.98%,#00ffa3 51.02%,#00ffa1 53.06%,#3dff9e 55.1%,#56ff9b 57.14%,#69ff98 59.18%,#79ff95 61.22%,#87ff92 63.27%,#94ff8e 65.31%,#9fff8b 67.35%,#aaff87 69.39%,#b5ff83 71.43%,#bfff7f 73.47%,#c8ff7a 75.51%,#d2ff75 77.55%,#dbff70 79.59%,#e3ff6a 81.63%,#ecff64 83.67%,#f3ff5e 85.71%,#fbff57 87.76%,#fffc4e 89.8%,#fff543 91.84%,#ffee37 93.88%,#ffe827 95.92%,#ffe209 97.96%,#ffdd00 100%)"></i><i style="left:71px;top:318px;width:199px;height:2px;background:linear-gradient(90deg,#00ffce 0%,#00ffcd 2%,#00ffcc 4%,#00ffcb 6%,#00ffc9 8%,#00ffc8 10%,#00ffc7 12%,#00ffc5 14%,#00ffc4 16%,#00ffc3 18%,#00ffc1 20%,#00ffc0 22%,#00ffbe 24%,#00ffbd 26%,#00ffbb 28%,#00ffb9 30%,#00ffb8 32%,#00ffb6 34%,#00ffb4 36%,#00ffb2 38%,#00ffb1 40%,#00ffaf 42%,#00ffad 44%,#00ffaa 46%,#00ffa8 48%,#00ffa6 50%,#00ffa4 52%,#35ffa1 54%,#51ff9f 56%,#65ff9c 58%,#76ff99 60%,#84ff96 62%,#91ff92 64%,#9dff8f 66%,#a8ff8b 68%,#b3ff87 70%,#bdff83 72%,#c6ff7f 74%,#d0ff7a 76%,#d9ff75 78%,#e2ff70 80%,#eaff6a 82%,#f2ff65 84%,#f9ff5e 86%,#fffd57 88%,#fff64d 90%,#fff042 92%,#ffe936 94%,#ffe327 96%,#ffde09 98%,#ffd900 100%)"></i><i style="left:72px;top:320px;width:200px;height:2px;background:linear-gradient(90deg,#00ffd0 0%,#00ffcf 2%,#00ffcd 4%,#00ffcc 6%,#00ffcb 8%,#00ffca 10%,#00ffc8 12%,#00ffc7 14%,#00ffc6 16%,#00ffc4 18%,#00ffc3 20%,#00ffc1 22%,#00ffc0 24%,#00ffbe 26%,#00ffbd 28%,#00ffbb 30%,#00ffb9 32%,#00ffb8 34%,#00ffb6 36%,#00ffb4 38%,#00ffb2 40%,#00ffb0 42%,#00ffae 44%,#00ffac 46%,#00ffaa 48%,#00ffa8 50%,#15ffa5 52%,#43ffa3 54%,#5bffa0 56%,#6eff9d 58%,#7dff9a 60%,#8bff97 62%,#97ff94 64%,#a3ff90 66%,#aeff8c 68%,#b8ff89 70%,#c2ff84 72%,#ccff80 74%,#d5ff7b 76%,#deff76 78%,#e7ff71 80%,#f0ff6b 82%,#f7ff66 84%,#ffff5f 86%,#fff856 88%,#fff14c 90%,#ffeb41 92%,#ffe535 94%,#ffdf27 96%,#ffda0a 98%,#ffd500 100%)"></i><i style="left:72px;top:322px;width:202px;height:2px;background:linear-gradient(90deg,#00ffd1 0%,#00ffd0 2%,#00ffcf 4%,#00ffce 6%,#00ffcd 8%,#00ffcb 10%,#00ffca 12%,#00ffc9 14%,#00ffc7 16%,#00ffc6 18%,#00ffc5 20%,#00ffc3 22%,#00ffc2 24%,#00ffc0 26%,#00ffbe 28%,#00ffbd 30%,#00ffbb 32%,#00ffb9 34%,#00ffb8 36%,#00ffb6 38%,#00ffb4 40%,#00ffb2 42%,#00ffb0 44%,#00ffae 46%,#00ffac 48%,#00ffa9 50%,#2affa7 52%,#4cffa4 54%,#62ffa2 56%,#74ff9f 58%,#83ff9c 60%,#90ff99 62%,#9dff95 64%,#a8ff92 66%,#b3ff8e 68%,#beff8a 70%,#c8ff86 72%,#d1ff82 74%,#dbff7d 76%,#e4ff78 78%,#edff72 80%,#f5ff6d 82%,#fcff67 84%,#fffa5f 86%,#fff355 88%,#ffec4c 90%,#ffe641 92%,#ffe035 94%,#ffdb27 96%,#ffd60b 98%,#ffd100 100%)"></i><i style="left:72px;top:324px;width:204px;height:2px;background:linear-gradient(90deg,#00ffd3 0%,#00ffd2 1.961%,#00ffd1 3.922%,#00ffd0 5.882%,#00ffcf 7.843%,#00ffcd 9.804%,#00ffcc 11.76%,#00ffcb 13.73%,#00ffc9 15.69%,#00ffc8 17.65%,#00ffc7 19.61%,#00ffc5 21.57%,#00ffc4 23.53%,#00ffc2 25.49%,#00ffc1 27.45%,#00ffbf 29.41%,#00ffbe 31.37%,#00ffbc 33.33%,#00ffba 35.29%,#00ffb8 37.25%,#00ffb7 39.22%,#00ffb5 41.18%,#00ffb3 43.14%,#00ffb1 45.1%,#00ffaf 47.06%,#00ffac 49.02%,#1dffaa 50.98%,#47ffa8 52.94%,#5effa5 54.9%,#70ffa2 56.86%,#80ff9f 58.82%,#8dff9c 60.78%,#9aff99 62.75%,#a6ff96 64.71%,#b1ff92 66.67%,#bcff8e 68.63%,#c6ff8a 70.59%,#cfff86 72.55%,#d9ff82 74.51%,#e2ff7d 76.47%,#ebff78 78.43%,#f3ff73 80.39%,#fbff6d 82.35%,#fffb66 84.31%,#fff45d 86.27%,#ffed54 88.24%,#ffe74a 90.2%,#ffe140 92.16%,#ffdc35 94.12%,#ffd626 96.08%,#ffd10b 98.04%,#ffcd00 100%)"></i><i style="left:72px;top:326px;width:206px;height:2px;background:linear-gradient(90deg,#00ffd5 0%,#00ffd4 1.923%,#00ffd3 3.846%,#00ffd2 5.769%,#00ffd1 7.692%,#00ffcf 9.615%,#00ffce 11.54%,#00ffcd 13.46%,#00ffcc 15.38%,#00ffca 17.31%,#00ffc9 19.23%,#00ffc7 21.15%,#00ffc6 23.08%,#00ffc5 25%,#00ffc3 26.92%,#00ffc1 28.85%,#00ffc0 30.77%,#00ffbe 32.69%,#00ffbd 34.62%,#00ffbb 36.54%,#00ffb9 38.46%,#00ffb7 40.38%,#00ffb5 42.31%,#00ffb3 44.23%,#00ffb1 46.15%,#00ffaf 48.08%,#00ffad 50%,#40ffab 51.92%,#5affa8 53.85%,#6dffa5 55.77%,#7dffa3 57.69%,#8bffa0 59.62%,#98ff9d 61.54%,#a4ff99 63.46%,#afff96 65.38%,#baff93 67.31%,#c4ff8f 69.23%,#ceff8b 71.15%,#d7ff87 73.08%,#e0ff82 75%,#e9ff7d 76.92%,#f2ff78 78.85%,#faff73 80.77%,#fffc6d 82.69%,#fff564 84.62%,#ffee5b 86.54%,#ffe852 88.46%,#ffe249 90.38%,#ffdd3f 92.31%,#ffd734 94.23%,#ffd226 96.15%,#ffcd0b 98.08%,#ffc900 100%)"></i><i style="left:72px;top:328px;width:208px;height:2px;background:linear-gradient(90deg,#00ffd7 0%,#00ffd6 1.923%,#00ffd5 3.846%,#00ffd4 5.769%,#00ffd2 7.692%,#00ffd1 9.615%,#00ffd0 11.54%,#00ffcf 13.46%,#00ffcd 15.38%,#00ffcc 17.31%,#00ffcb 19.23%,#00ffc9 21.15%,#00ffc8 23.08%,#00ffc6 25%,#00ffc5 26.92%,#00ffc3 28.85%,#00ffc2 30.77%,#00ffc0 32.69%,#00ffbe 34.62%,#00ffbd 36.54%,#00ffbb 38.46%,#00ffb9 40.38%,#00ffb7 42.31%,#00ffb5 44.23%,#00ffb3 46.15%,#00ffb1 48.08%,#23ffaf 50%,#4affad 51.92%,#61ffaa 53.85%,#73ffa7 55.77%,#82ffa4 57.69%,#90ffa1 59.62%,#9dff9e 61.54%,#a9ff9b 63.46%,#b4ff98 65.38%,#bfff94 67.31%,#c9ff90 69.23%,#d3ff8c 71.15%,#dcff88 73.08%,#e6ff84 75%,#efff7f 76.92%,#f7ff7a 78.85%,#ffff75 80.77%,#fff76c 82.69%,#fff063 84.62%,#ffea5b 86.54%,#ffe452 88.46%,#ffde49 90.38%,#ffd83f 92.31%,#ffd334 94.23%,#ffce26 96.15%,#ffc90c 98.08%,#ffc500 100%)"></i><i style="left:72px;top:330px;width:210px;height:2px;background:linear-gradient(90deg,#00ffd9 0%,#00ffd8 1.923%,#00ffd7 3.846%,#00ffd5 5.769%,#00ffd4 7.692%,#00ffd3 9.615%,#00ffd2 11.54%,#00ffd1 13.46%,#00ffcf 15.38%,#00ffce 17.31%,#00ffcd 19.23%,#00ffcb 21.15%,#00ffca 23.08%,#00ffc8 25%,#00ffc7 26.92%,#00ffc5 28.85%,#00ffc4 30.77%,#00ffc2 32.69%,#00ffc0 34.62%,#00ffbf 36.54%,#00ffbd 38.46%,#00ffbb 40.38%,#00ffb9 42.31%,#00ffb7 44.23%,#00ffb5 46.15%,#00ffb3 48.08%,#32ffb1 50%,#52ffae 51.92%,#67ffac 53.85%,#79ffa9 55.77%,#88ffa6 57.69%,#95ffa3 59.62%,#a2ffa0 61.54%,#aeff9d 63.46%,#b9ff99 65.38%,#c4ff96 67.31%,#ceff92 69.23%,#d8ff8e 71.15%,#e1ff8a 73.08%,#ebff85 75%,#f4ff80 76.92%,#fcff7b 78.85%,#fffa74 80.77%,#fff36b 82.69%,#ffec63 84.62%,#ffe55a 86.54%,#ffdf52 88.46%,#ffda48 90.38%,#ffd43f 92.31%,#ffcf34 94.23%,#ffca26 96.15%,#ffc60d 98.08%,#ffc100 100%)"></i><i style="left:73px;top:332px;width:211px;height:2px;background:linear-gradient(90deg,#00ffda 0%,#00ffd9 1.887%,#00ffd8 3.774%,#00ffd7 5.66%,#00ffd6 7.547%,#00ffd5 9.434%,#00ffd4 11.32%,#00ffd2 13.21%,#00ffd1 15.09%,#00ffd0 16.98%,#00ffce 18.87%,#00ffcd 20.75%,#00ffcc 22.64%,#00ffca 24.53%,#00ffc9 26.42%,#00ffc7 28.3%,#00ffc6 30.19%,#00ffc4 32.08%,#00ffc3 33.96%,#00ffc1 35.85%,#00ffbf 37.74%,#00ffbd 39.62%,#00ffbc 41.51%,#00ffba 43.4%,#00ffb8 45.28%,#00ffb6 47.17%,#2fffb4 49.06%,#50ffb1 50.94%,#66ffaf 52.83%,#77ffac 54.72%,#87ffa9 56.6%,#94ffa6 58.49%,#a1ffa4 60.38%,#adffa0 62.26%,#b8ff9d 64.15%,#c3ff9a 66.04%,#cdff96 67.92%,#d7ff92 69.81%,#e1ff8e 71.7%,#eaff8a 73.58%,#f3ff85 75.47%,#fcff81 77.36%,#fffb7a 79.25%,#fff371 81.13%,#ffec69 83.02%,#ffe661 84.91%,#ffe058 86.79%,#ffda50 88.68%,#ffd547 90.57%,#ffd03d 92.45%,#ffcb33 94.34%,#ffc625 96.23%,#ffc20d 98.11%,#ffbd00 100%)"></i><i style="left:73px;top:334px;width:213px;height:2px;background:linear-gradient(90deg,#00ffdc 0%,#00ffdb 1.887%,#00ffda 3.774%,#00ffd9 5.66%,#00ffd8 7.547%,#00ffd7 9.434%,#00ffd5 11.32%,#00ffd4 13.21%,#00ffd3 15.09%,#00ffd2 16.98%,#00ffd0 18.87%,#00ffcf 20.75%,#00ffce 22.64%,#00ffcc 24.53%,#00ffcb 26.42%,#00ffc9 28.3%,#00ffc8 30.19%,#00ffc6 32.08%,#00ffc5 33.96%,#00ffc3 35.85%,#00ffc1 37.74%,#00ffbf 39.62%,#00ffbe 41.51%,#00ffbc 43.4%,#00ffba 45.28%,#00ffb8 47.17%,#3bffb6 49.06%,#57ffb3 50.94%,#6cffb1 52.83%,#7dffae 54.72%,#8cffab 56.6%,#9affa8 58.49%,#a6ffa5 60.38%,#b2ffa2 62.26%,#bdff9f 64.15%,#c8ff9b 66.04%,#d2ff98 67.92%,#dcff94 69.81%,#e6ff90 71.7%,#efff8b 73.58%,#f9ff87 75.47%,#fffd81 77.36%,#fff679 79.25%,#ffee71 81.13%,#ffe868 83.02%,#ffe160 84.91%,#ffdc58 86.79%,#ffd650 88.68%,#ffd147 90.57%,#ffcc3d 92.45%,#ffc733 94.34%,#ffc225 96.23%,#ffbe0e 98.11%,#ffba00 100%)"></i><i style="left:73px;top:336px;width:215px;height:2px;background:linear-gradient(90deg,#00ffde 0%,#00ffdd 1.852%,#00ffdc 3.704%,#00ffdb 5.556%,#00ffda 7.407%,#00ffd9 9.259%,#00ffd7 11.11%,#00ffd6 12.96%,#00ffd5 14.81%,#00ffd4 16.67%,#00ffd3 18.52%,#00ffd1 20.37%,#00ffd0 22.22%,#00ffcf 24.07%,#00ffcd 25.93%,#00ffcc 27.78%,#00ffca 29.63%,#00ffc9 31.48%,#00ffc7 33.33%,#00ffc5 35.19%,#00ffc4 37.04%,#00ffc2 38.89%,#00ffc0 40.74%,#00ffbf 42.59%,#00ffbd 44.44%,#00ffbb 46.3%,#34ffb9 48.15%,#53ffb6 50%,#69ffb4 51.85%,#7affb1 53.7%,#89ffaf 55.56%,#97ffac 57.41%,#a4ffa9 59.26%,#b0ffa6 61.11%,#bbffa3 62.96%,#c6ff9f 64.81%,#d0ff9c 66.67%,#dbff98 68.52%,#e4ff94 70.37%,#eeff90 72.22%,#f7ff8c 74.07%,#fffe87 75.93%,#fff67f 77.78%,#ffef76 79.63%,#ffe96e 81.48%,#ffe267 83.33%,#ffdc5f 85.19%,#ffd757 87.04%,#ffd14e 88.89%,#ffcc46 90.74%,#ffc73c 92.59%,#ffc332 94.44%,#ffbe25 96.3%,#ffba0e 98.15%,#ffb600 100%)"></i><i style="left:73px;top:338px;width:217px;height:2px;background:linear-gradient(90deg,#00ffe0 0%,#00ffdf 1.852%,#00ffde 3.704%,#00ffdd 5.556%,#00ffdc 7.407%,#00ffdb 9.259%,#00ffd9 11.11%,#00ffd8 12.96%,#00ffd7 14.81%,#00ffd6 16.67%,#00ffd4 18.52%,#00ffd3 20.37%,#00ffd2 22.22%,#00ffd0 24.07%,#00ffcf 25.93%,#00ffce 27.78%,#00ffcc 29.63%,#00ffcb 31.48%,#00ffc9 33.33%,#00ffc7 35.19%,#00ffc6 37.04%,#00ffc4 38.89%,#00ffc2 40.74%,#00ffc0 42.59%,#00ffbf 44.44%,#00ffbd 46.3%,#40ffba 48.15%,#5bffb8 50%,#6fffb6 51.85%,#80ffb3 53.7%,#8fffb0 55.56%,#9dffae 57.41%,#a9ffab 59.26%,#b5ffa8 61.11%,#c1ffa5 62.96%,#cbffa1 64.81%,#d6ff9e 66.67%,#e0ff9a 68.52%,#eaff96 70.37%,#f3ff92 72.22%,#fdff8e 74.07%,#fff986 75.93%,#fff27e 77.78%,#ffeb76 79.63%,#ffe46e 81.48%,#ffde66 83.33%,#ffd85e 85.19%,#ffd256 87.04%,#ffcd4e 88.89%,#ffc845 90.74%,#ffc43c 92.59%,#ffbf32 94.44%,#ffbb25 96.3%,#ffb70e 98.15%,#ffb300 100%)"></i><i style="left:74px;top:340px;width:218px;height:2px;background:linear-gradient(90deg,#00ffe2 0%,#00ffe0 1.852%,#00ffdf 3.704%,#00ffde 5.556%,#00ffdd 7.407%,#00ffdc 9.259%,#00ffdb 11.11%,#00ffda 12.96%,#00ffd9 14.81%,#00ffd7 16.67%,#00ffd6 18.52%,#00ffd5 20.37%,#00ffd4 22.22%,#00ffd2 24.07%,#00ffd1 25.93%,#00ffcf 27.78%,#00ffce 29.63%,#00ffcc 31.48%,#00ffcb 33.33%,#00ffc9 35.19%,#00ffc8 37.04%,#00ffc6 38.89%,#00ffc4 40.74%,#00ffc2 42.59%,#00ffc0 44.44%,#28ffbe 46.3%,#4effbc 48.15%,#65ffba 50%,#78ffb7 51.85%,#88ffb5 53.7%,#96ffb2 55.56%,#a4ffaf 57.41%,#b0ffac 59.26%,#bcffa9 61.11%,#c7ffa6 62.96%,#d2ffa3 64.81%,#dcff9f 66.67%,#e6ff9c 68.52%,#f0ff98 70.37%,#f9ff93 72.22%,#fffc8d 74.07%,#fff485 75.93%,#ffec7d 77.78%,#ffe675 79.63%,#ffdf6d 81.48%,#ffd965 83.33%,#ffd45d 85.19%,#ffce56 87.04%,#ffc94e 88.89%,#ffc445 90.74%,#ffc03c 92.59%,#ffbb32 94.44%,#ffb725 96.3%,#ffb30f 98.15%,#ffaf00 100%)"></i><i style="left:74px;top:342px;width:220px;height:2px;background:linear-gradient(90deg,#00ffe3 0%,#00ffe2 1.818%,#00ffe1 3.636%,#00ffe0 5.455%,#00ffdf 7.273%,#00ffde 9.091%,#00ffdd 10.91%,#00ffdc 12.73%,#00ffdb 14.55%,#00ffda 16.36%,#00ffd8 18.18%,#00ffd7 20%,#00ffd6 21.82%,#00ffd4 23.64%,#00ffd3 25.45%,#00ffd2 27.27%,#00ffd0 29.09%,#00ffcf 30.91%,#00ffcd 32.73%,#00ffcc 34.55%,#00ffca 36.36%,#00ffc8 38.18%,#00ffc7 40%,#00ffc5 41.82%,#00ffc3 43.64%,#1cffc1 45.45%,#49ffbf 47.27%,#62ffbd 49.09%,#75ffba 50.91%,#86ffb8 52.73%,#94ffb5 54.55%,#a2ffb3 56.36%,#aeffb0 58.18%,#baffad 60%,#c5ffaa 61.82%,#d0ffa7 63.64%,#daffa3 65.45%,#e5ffa0 67.27%,#eeff9c 69.09%,#f8ff98 70.91%,#fffc93 72.73%,#fff58a 74.55%,#ffed82 76.36%,#ffe67a 78.18%,#ffe072 80%,#ffda6b 81.82%,#ffd463 83.64%,#ffcf5c 85.45%,#ffca54 87.27%,#ffc54c 89.09%,#ffc044 90.91%,#ffbc3b 92.73%,#ffb831 94.55%,#ffb424 96.36%,#ffb00f 98.18%,#ffac00 100%)"></i><i style="left:74px;top:344px;width:222px;height:2px;background:linear-gradient(90deg,#00ffe5 0%,#00ffe4 1.786%,#00ffe3 3.571%,#00ffe2 5.357%,#00ffe1 7.143%,#00ffe0 8.929%,#00ffdf 10.71%,#00ffde 12.5%,#00ffdd 14.29%,#00ffdc 16.07%,#00ffdb 17.86%,#00ffd9 19.64%,#00ffd8 21.43%,#00ffd7 23.21%,#00ffd5 25%,#00ffd4 26.79%,#00ffd3 28.57%,#00ffd1 30.36%,#00ffd0 32.14%,#00ffce 33.93%,#00ffcd 35.71%,#00ffcb 37.5%,#00ffc9 39.29%,#00ffc8 41.07%,#00ffc6 42.86%,#00ffc4 44.64%,#45ffc2 46.43%,#5fffc0 48.21%,#73ffbe 50%,#83ffbb 51.79%,#92ffb9 53.57%,#a0ffb6 55.36%,#adffb4 57.14%,#b8ffb1 58.93%,#c4ffae 60.71%,#cfffab 62.5%,#d9ffa8 64.29%,#e3ffa4 66.07%,#edffa1 67.86%,#f7ff9d 69.64%,#fffe98 71.43%,#fff58f 73.21%,#ffee87 75%,#ffe77f 76.79%,#ffe078 78.57%,#ffda70 80.36%,#ffd569 82.14%,#ffcf62 83.93%,#ffca5a 85.71%,#ffc553 87.5%,#ffc14b 89.29%,#ffbc43 91.07%,#ffb83a 92.86%,#ffb430 94.64%,#ffb024 96.43%,#ffac0f 98.21%,#ffa800 100%)"></i><i style="left:75px;top:346px;width:223px;height:2px;background:linear-gradient(90deg,#00ffe7 0%,#00ffe6 1.786%,#00ffe5 3.571%,#00ffe4 5.357%,#00ffe3 7.143%,#00ffe2 8.929%,#00ffe1 10.71%,#00ffe0 12.5%,#00ffdf 14.29%,#00ffdd 16.07%,#00ffdc 17.86%,#00ffdb 19.64%,#00ffda 21.43%,#00ffd9 23.21%,#00ffd7 25%,#00ffd6 26.79%,#00ffd5 28.57%,#00ffd3 30.36%,#00ffd2 32.14%,#00ffd0 33.93%,#00ffcf 35.71%,#00ffcd 37.5%,#00ffcb 39.29%,#00ffca 41.07%,#00ffc8 42.86%,#2fffc6 44.64%,#52ffc4 46.43%,#69ffc2 48.21%,#7bffbf 50%,#8bffbd 51.79%,#9affbb 53.57%,#a7ffb8 55.36%,#b3ffb5 57.14%,#bfffb3 58.93%,#caffb0 60.71%,#d5ffac 62.5%,#dfffa9 64.29%,#e9ffa6 66.07%,#f3ffa2 67.86%,#fdff9e 69.64%,#fff896 71.43%,#fff08e 73.21%,#ffe986 75%,#ffe27e 76.79%,#ffdc77 78.57%,#ffd66f 80.36%,#ffd068 82.14%,#ffcb61 83.93%,#ffc65a 85.71%,#ffc152 87.5%,#ffbd4b 89.29%,#ffb843 91.07%,#ffb43a 92.86%,#ffb030 94.64%,#ffac24 96.43%,#ffa90f 98.21%,#ffa500 100%)"></i><i style="left:75px;top:348px;width:225px;height:2px;background:linear-gradient(90deg,#00ffe9 0%,#00ffe8 1.786%,#00ffe7 3.571%,#00ffe6 5.357%,#00ffe5 7.143%,#00ffe4 8.929%,#00ffe3 10.71%,#00ffe2 12.5%,#00ffe1 14.29%,#00ffe0 16.07%,#00ffde 17.86%,#00ffdd 19.64%,#00ffdc 21.43%,#00ffdb 23.21%,#00ffd9 25%,#00ffd8 26.79%,#00ffd7 28.57%,#00ffd5 30.36%,#00ffd4 32.14%,#00ffd2 33.93%,#00ffd1 35.71%,#00ffcf 37.5%,#00ffcd 39.29%,#00ffcc 41.07%,#00ffca 42.86%,#3dffc8 44.64%,#5affc6 46.43%,#70ffc4 48.21%,#81ffc1 50%,#91ffbf 51.79%,#9fffbd 53.57%,#acffba 55.36%,#b8ffb7 57.14%,#c4ffb5 58.93%,#cfffb2 60.71%,#daffaf 62.5%,#e5ffab 64.29%,#efffa8 66.07%,#f9ffa4 67.86%,#fffb9e 69.64%,#fff395 71.43%,#ffeb8d 73.21%,#ffe485 75%,#ffde7e 76.79%,#ffd876 78.57%,#ffd26f 80.36%,#ffcc68 82.14%,#ffc761 83.93%,#ffc259 85.71%,#ffbe52 87.5%,#ffb94b 89.29%,#ffb543 91.07%,#ffb13a 92.86%,#ffad30 94.64%,#ffa924 96.43%,#ffa510 98.21%,#ffa200 100%)"></i><i style="left:75px;top:350px;width:227px;height:2px;background:linear-gradient(90deg,#00ffeb 0%,#00ffea 1.754%,#00ffe9 3.509%,#00ffe8 5.263%,#00ffe7 7.018%,#00ffe6 8.772%,#00ffe5 10.53%,#00ffe4 12.28%,#00ffe3 14.04%,#00ffe2 15.79%,#00ffe1 17.54%,#00ffdf 19.3%,#00ffde 21.05%,#00ffdd 22.81%,#00ffdc 24.56%,#00ffda 26.32%,#00ffd9 28.07%,#00ffd8 29.82%,#00ffd6 31.58%,#00ffd5 33.33%,#00ffd3 35.09%,#00ffd2 36.84%,#00ffd0 38.6%,#00ffcf 40.35%,#00ffcd 42.11%,#37ffcb 43.86%,#57ffc9 45.61%,#6dffc7 47.37%,#7fffc5 49.12%,#8fffc2 50.88%,#9dffc0 52.63%,#abffbe 54.39%,#b7ffbb 56.14%,#c3ffb8 57.89%,#ceffb5 59.65%,#d9ffb3 61.4%,#e3ffaf 63.16%,#eeffac 64.91%,#f8ffa9 66.67%,#fffca3 68.42%,#fff39a 70.18%,#ffec92 71.93%,#ffe58a 73.68%,#ffde82 75.44%,#ffd87b 77.19%,#ffd274 78.95%,#ffcd6d 80.7%,#ffc766 82.46%,#ffc35f 84.21%,#ffbe58 85.96%,#ffb951 87.72%,#ffb54a 89.47%,#ffb142 91.23%,#ffad39 92.98%,#ffa930 94.74%,#ffa624 96.49%,#ffa210 98.25%,#ff9f00 100%)"></i><i style="left:75px;top:352px;width:229px;height:2px;background:linear-gradient(90deg,#00ffed 0%,#00ffec 1.754%,#00ffeb 3.509%,#00ffea 5.263%,#00ffe9 7.018%,#00ffe8 8.772%,#00ffe7 10.53%,#00ffe6 12.28%,#00ffe5 14.04%,#00ffe4 15.79%,#00ffe3 17.54%,#00ffe1 19.3%,#00ffe0 21.05%,#00ffdf 22.81%,#00ffde 24.56%,#00ffdd 26.32%,#00ffdb 28.07%,#00ffda 29.82%,#00ffd8 31.58%,#00ffd7 33.33%,#00ffd5 35.09%,#00ffd4 36.84%,#00ffd2 38.6%,#00ffd1 40.35%,#00ffcf 42.11%,#43ffcd 43.86%,#5fffcb 45.61%,#74ffc9 47.37%,#85ffc7 49.12%,#95ffc5 50.88%,#a3ffc2 52.63%,#b0ffc0 54.39%,#bcffbd 56.14%,#c8ffba 57.89%,#d3ffb8 59.65%,#deffb5 61.4%,#e9ffb2 63.16%,#f3ffae 64.91%,#fdffab 66.67%,#fff7a2 68.42%,#ffee99 70.18%,#ffe791 71.93%,#ffe089 73.68%,#ffda82 75.44%,#ffd47b 77.19%,#ffce73 78.95%,#ffc96d 80.7%,#ffc466 82.46%,#ffbf5f 84.21%,#ffba58 85.96%,#ffb651 87.72%,#ffb249 89.47%,#ffad42 91.23%,#ffaa39 92.98%,#ffa62f 94.74%,#ffa224 96.49%,#ff9f10 98.25%,#ff9b00 100%)"></i><i style="left:76px;top:354px;width:230px;height:2px;background:linear-gradient(90deg,#00ffef 0%,#00ffee 1.724%,#00ffed 3.448%,#00ffec 5.172%,#00ffeb 6.897%,#00ffea 8.621%,#00ffe9 10.34%,#00ffe8 12.07%,#00ffe7 13.79%,#00ffe6 15.52%,#00ffe5 17.24%,#00ffe4 18.97%,#00ffe2 20.69%,#00ffe1 22.41%,#00ffe0 24.14%,#00ffdf 25.86%,#00ffdd 27.59%,#00ffdc 29.31%,#00ffdb 31.03%,#00ffd9 32.76%,#00ffd8 34.48%,#00ffd6 36.21%,#00ffd5 37.93%,#00ffd3 39.66%,#00ffd2 41.38%,#43ffd0 43.1%,#5fffce 44.83%,#74ffcc 46.55%,#85ffca 48.28%,#95ffc8 50%,#a3ffc5 51.72%,#b0ffc3 53.45%,#bcffc0 55.17%,#c8ffbe 56.9%,#d3ffbb 58.62%,#deffb8 60.34%,#e9ffb5 62.07%,#f3ffb2 63.79%,#fdffaf 65.52%,#fff7a6 67.24%,#ffee9d 68.97%,#ffe795 70.69%,#ffe08d 72.41%,#ffda86 74.14%,#ffd47f 75.86%,#ffce78 77.59%,#ffc971 79.31%,#ffc46a 81.03%,#ffbf64 82.76%,#ffba5d 84.48%,#ffb656 86.21%,#ffb24f 87.93%,#ffad48 89.66%,#ffaa41 91.38%,#ffa638 93.1%,#ffa22f 94.83%,#ff9f23 96.55%,#ff9b10 98.28%,#ff9800 100%)"></i><i style="left:76px;top:356px;width:232px;height:2px;background:linear-gradient(90deg,#00fff1 0%,#00fff0 1.724%,#00ffef 3.448%,#00ffee 5.172%,#00ffed 6.897%,#00ffec 8.621%,#00ffeb 10.34%,#00ffea 12.07%,#00ffe9 13.79%,#00ffe8 15.52%,#00ffe7 17.24%,#00ffe6 18.97%,#00ffe5 20.69%,#00ffe3 22.41%,#00ffe2 24.14%,#00ffe1 25.86%,#00ffe0 27.59%,#00ffde 29.31%,#00ffdd 31.03%,#00ffdc 32.76%,#00ffda 34.48%,#00ffd9 36.21%,#00ffd7 37.93%,#00ffd6 39.66%,#20ffd4 41.38%,#4dffd2 43.1%,#66ffd0 44.83%,#7affce 46.55%,#8bffcc 48.28%,#9affca 50%,#a8ffc8 51.72%,#b5ffc5 53.45%,#c2ffc3 55.17%,#cdffc0 56.9%,#d9ffbd 58.62%,#e4ffbb 60.34%,#eeffb8 62.07%,#f9ffb4 63.79%,#fffbaf 65.52%,#fff2a5 67.24%,#ffea9c 68.97%,#ffe294 70.69%,#ffdc8d 72.41%,#ffd685 74.14%,#ffd07e 75.86%,#ffca77 77.59%,#ffc571 79.31%,#ffc06a 81.03%,#ffbb63 82.76%,#ffb75d 84.48%,#ffb256 86.21%,#ffae4f 87.93%,#ffaa48 89.66%,#ffa640 91.38%,#ffa238 93.1%,#ff9f2f 94.83%,#ff9b23 96.55%,#ff9810 98.28%,#ff9500 100%)"></i><i style="left:76px;top:358px;width:234px;height:2px;background:linear-gradient(90deg,#00fff3 0%,#00fff2 1.724%,#00fff1 3.448%,#00fff0 5.172%,#00ffef 6.897%,#00ffee 8.621%,#00ffed 10.34%,#00ffec 12.07%,#00ffeb 13.79%,#00ffea 15.52%,#00ffe9 17.24%,#00ffe8 18.97%,#00ffe7 20.69%,#00ffe6 22.41%,#00ffe4 24.14%,#00ffe3 25.86%,#00ffe2 27.59%,#00ffe1 29.31%,#00ffdf 31.03%,#00ffde 32.76%,#00ffdc 34.48%,#00ffdb 36.21%,#00ffd9 37.93%,#00ffd8 39.66%,#32ffd6 41.38%,#55ffd4 43.1%,#6dffd2 44.83%,#80ffd0 46.55%,#91ffce 48.28%,#a0ffcc 50%,#aeffca 51.72%,#bbffc7 53.45%,#c7ffc5 55.17%,#d3ffc2 56.9%,#deffc0 58.62%,#e9ffbd 60.34%,#f4ffba 62.07%,#feffb7 63.79%,#fff6ad 65.52%,#ffeda3 67.24%,#ffe59b 68.97%,#ffde93 70.69%,#ffd78c 72.41%,#ffd185 74.14%,#ffcc7e 75.86%,#ffc677 77.59%,#ffc170 79.31%,#ffbc6a 81.03%,#ffb763 82.76%,#ffb35c 84.48%,#ffaf56 86.21%,#ffab4f 87.93%,#ffa748 89.66%,#ffa340 91.38%,#ff9f38 93.1%,#ff9c2f 94.83%,#ff9823 96.55%,#ff9511 98.28%,#ff9200 100%)"></i><i style="left:77px;top:360px;width:235px;height:2px;background:linear-gradient(90deg,#00fff5 0%,#00fff4 1.695%,#00fff3 3.39%,#00fff2 5.085%,#00fff1 6.78%,#00fff0 8.475%,#00ffef 10.17%,#00ffee 11.86%,#00ffed 13.56%,#00ffec 15.25%,#00ffeb 16.95%,#00ffea 18.64%,#00ffe9 20.34%,#00ffe8 22.03%,#00ffe7 23.73%,#00ffe5 25.42%,#00ffe4 27.12%,#00ffe3 28.81%,#00ffe2 30.51%,#00ffe0 32.2%,#00ffdf 33.9%,#00ffde 35.59%,#00ffdc 37.29%,#00ffdb 38.98%,#33ffd9 40.68%,#56ffd7 42.37%,#6effd5 44.07%,#81ffd3 45.76%,#91ffd1 47.46%,#a0ffcf 49.15%,#aeffcd 50.85%,#bbffcb 52.54%,#c7ffc8 54.24%,#d3ffc6 55.93%,#deffc3 57.63%,#e9ffc1 59.32%,#f4ffbe 61.02%,#feffbb 62.71%,#fff6b1 64.41%,#ffeda7 66.1%,#ffe59f 67.8%,#ffde97 69.49%,#ffd790 71.19%,#ffd189 72.88%,#ffcb82 74.58%,#ffc67b 76.27%,#ffc175 77.97%,#ffbc6e 79.66%,#ffb768 81.36%,#ffb361 83.05%,#ffaf5b 84.75%,#ffaa54 86.44%,#ffa74e 88.14%,#ffa347 89.83%,#ff9f3f 91.53%,#ff9c37 93.22%,#ff982e 94.92%,#ff9523 96.61%,#ff9211 98.31%,#ff8f00 100%)"></i><i style="left:77px;top:362px;width:237px;height:2px;background:linear-gradient(90deg,#00fff7 0%,#00fff6 1.695%,#00fff5 3.39%,#00fff4 5.085%,#00fff3 6.78%,#00fff2 8.475%,#00fff1 10.17%,#00fff0 11.86%,#00ffef 13.56%,#00ffee 15.25%,#00ffed 16.95%,#00ffec 18.64%,#00ffeb 20.34%,#00ffea 22.03%,#00ffe9 23.73%,#00ffe8 25.42%,#00ffe7 27.12%,#00ffe5 28.81%,#00ffe4 30.51%,#00ffe3 32.2%,#00ffe1 33.9%,#00ffe0 35.59%,#00ffde 37.29%,#00ffdd 38.98%,#40ffdb 40.68%,#5effd9 42.37%,#74ffd8 44.07%,#87ffd6 45.76%,#97ffd4 47.46%,#a6ffd2 49.15%,#b3ffcf 50.85%,#c0ffcd 52.54%,#ccffcb 54.24%,#d8ffc8 55.93%,#e4ffc6 57.63%,#efffc3 59.32%,#f9ffc0 61.02%,#fffaba 62.71%,#fff0af 64.41%,#ffe8a6 66.1%,#ffe09e 67.8%,#ffd996 69.49%,#ffd38f 71.19%,#ffcd88 72.88%,#ffc781 74.58%,#ffc27b 76.27%,#ffbd74 77.97%,#ffb86e 79.66%,#ffb467 81.36%,#ffaf61 83.05%,#ffab5b 84.75%,#ffa754 86.44%,#ffa34d 88.14%,#ff9f46 89.83%,#ff9c3f 91.53%,#ff9837 93.22%,#ff952e 94.92%,#ff9223 96.61%,#ff8f11 98.31%,#ff8b00 100%)"></i><i style="left:77px;top:364px;width:239px;height:2px;background:linear-gradient(90deg,#00fff9 0%,#00fff8 1.667%,#00fff7 3.333%,#00fff6 5%,#00fff5 6.667%,#00fff5 8.333%,#00fff4 10%,#00fff3 11.67%,#00fff2 13.33%,#00fff1 15%,#00fff0 16.67%,#00ffef 18.33%,#00ffee 20%,#00ffed 21.67%,#00ffeb 23.33%,#00ffea 25%,#00ffe9 26.67%,#00ffe8 28.33%,#00ffe7 30%,#00ffe5 31.67%,#00ffe4 33.33%,#00ffe3 35%,#00ffe1 36.67%,#00ffe0 38.33%,#3bffde 40%,#5bffdd 41.67%,#72ffdb 43.33%,#85ffd9 45%,#95ffd7 46.67%,#a4ffd5 48.33%,#b2ffd3 50%,#bfffd1 51.67%,#cbffcf 53.33%,#d7ffcc 55%,#e3ffca 56.67%,#eeffc7 58.33%,#f9ffc4 60%,#fffbbe 61.67%,#fff1b4 63.33%,#ffe8ab 65%,#ffe0a2 66.67%,#ffda9b 68.33%,#ffd393 70%,#ffcd8c 71.67%,#ffc885 73.33%,#ffc27f 75%,#ffbd78 76.67%,#ffb872 78.33%,#ffb46c 80%,#ffaf66 81.67%,#ffab60 83.33%,#ffa759 85%,#ffa353 86.67%,#ff9f4c 88.33%,#ff9c46 90%,#ff983e 91.67%,#ff9537 93.33%,#ff922e 95%,#ff8e23 96.67%,#ff8b11 98.33%,#ff8800 100%)"></i><i style="left:78px;top:366px;width:240px;height:2px;background:linear-gradient(90deg,#00fffb 0%,#00fffa 1.667%,#00fff9 3.333%,#00fff8 5%,#00fff7 6.667%,#00fff7 8.333%,#00fff6 10%,#00fff5 11.67%,#00fff4 13.33%,#00fff3 15%,#00fff2 16.67%,#00fff1 18.33%,#00fff0 20%,#00ffef 21.67%,#00ffee 23.33%,#00ffec 25%,#00ffeb 26.67%,#00ffea 28.33%,#00ffe9 30%,#00ffe8 31.67%,#00ffe6 33.33%,#00ffe5 35%,#00ffe4 36.67%,#13ffe2 38.33%,#4bffe1 40%,#66ffdf 41.67%,#7bffdd 43.33%,#8dffdb 45%,#9dffd9 46.67%,#abffd7 48.33%,#b9ffd5 50%,#c6ffd3 51.67%,#d2ffd1 53.33%,#deffce 55%,#e9ffcc 56.67%,#f5ffc9 58.33%,#ffffc6 60%,#fff4bc 61.67%,#ffebb2 63.33%,#ffe3a8 65%,#ffdba1 66.67%,#ffd599 68.33%,#ffcf92 70%,#ffc98b 71.67%,#ffc384 73.33%,#ffbe7e 75%,#ffb978 76.67%,#ffb471 78.33%,#ffb06b 80%,#ffac65 81.67%,#ffa75f 83.33%,#ffa359 85%,#ffa053 86.67%,#ff9c4c 88.33%,#ff9845 90%,#ff953e 91.67%,#ff9236 93.33%,#ff8e2d 95%,#ff8b23 96.67%,#ff8811 98.33%,#ff8500 100%)"></i><i style="left:78px;top:368px;width:242px;height:2px;background:linear-gradient(90deg,#00fffd 0%,#00fffc 1.667%,#00fffb 3.333%,#00fffa 5%,#00fffa 6.667%,#00fff9 8.333%,#00fff8 10%,#00fff7 11.67%,#00fff6 13.33%,#00fff5 15%,#00fff4 16.67%,#00fff3 18.33%,#00fff2 20%,#00fff1 21.67%,#00fff0 23.33%,#00ffef 25%,#00ffee 26.67%,#00ffed 28.33%,#00ffeb 30%,#00ffea 31.67%,#00ffe9 33.33%,#00ffe7 35%,#00ffe6 36.67%,#2cffe5 38.33%,#54ffe3 40%,#6dffe1 41.67%,#81ffe0 43.33%,#93ffde 45%,#a2ffdc 46.67%,#b1ffda 48.33%,#beffd8 50%,#cbffd6 51.67%,#d8ffd3 53.33%,#e3ffd1 55%,#efffcf 56.67%,#faffcc 58.33%,#fff9c4 60%,#ffefba 61.67%,#ffe6b0 63.33%,#ffdea7 65%,#ffd7a0 66.67%,#ffd198 68.33%,#ffca91 70%,#ffc58a 71.67%,#ffbf84 73.33%,#ffba7d 75%,#ffb577 76.67%,#ffb171 78.33%,#ffac6b 80%,#ffa865 81.67%,#ffa45f 83.33%,#ffa059 85%,#ff9c52 86.67%,#ff994c 88.33%,#ff9545 90%,#ff923e 91.67%,#ff8e36 93.33%,#ff8b2d 95%,#ff8823 96.67%,#ff8512 98.33%,#ff8200 100%)"></i><i style="left:78px;top:370px;width:244px;height:2px;background:linear-gradient(90deg,#00ffff 0%,#00fffe 1.639%,#00fffd 3.279%,#00fffd 4.918%,#00fffc 6.557%,#00fffb 8.197%,#00fffa 9.836%,#00fff9 11.48%,#00fff8 13.11%,#00fff8 14.75%,#00fff7 16.39%,#00fff6 18.03%,#00fff5 19.67%,#00fff4 21.31%,#00fff3 22.95%,#00fff2 24.59%,#00fff0 26.23%,#00ffef 27.87%,#00ffee 29.51%,#00ffed 31.15%,#00ffec 32.79%,#00ffea 34.43%,#00ffe9 36.07%,#24ffe8 37.7%,#51ffe6 39.34%,#6bffe5 40.98%,#7fffe3 42.62%,#91ffe1 44.26%,#a1ffdf 45.9%,#b0ffdd 47.54%,#bdffdb 49.18%,#caffd9 50.82%,#d7ffd7 52.46%,#e3ffd5 54.1%,#eeffd3 55.74%,#f9ffd0 57.38%,#fffac9 59.02%,#fff0bf 60.66%,#ffe6b5 62.3%,#ffdeac 63.93%,#ffd7a4 65.57%,#ffd19c 67.21%,#ffcb95 68.85%,#ffc58f 70.49%,#ffbf88 72.13%,#ffba82 73.77%,#ffb57b 75.41%,#ffb175 77.05%,#ffac6f 78.69%,#ffa869 80.33%,#ffa463 81.97%,#ffa05d 83.61%,#ff9c57 85.25%,#ff9851 86.89%,#ff954b 88.52%,#ff9144 90.16%,#ff8e3d 91.8%,#ff8b36 93.44%,#ff882d 95.08%,#ff8522 96.72%,#ff8211 98.36%,#ff7f00 100%)"></i><i style="left:79px;top:372px;width:245px;height:2px;background:linear-gradient(90deg,#00fdff 0%,#00feff 1.639%,#00feff 3.279%,#00ffff 4.918%,#00fffe 6.557%,#00fffd 8.197%,#00fffc 9.836%,#00fffb 11.48%,#00fffb 13.11%,#00fffa 14.75%,#00fff9 16.39%,#00fff8 18.03%,#00fff7 19.67%,#00fff6 21.31%,#00fff5 22.95%,#00fff4 24.59%,#00fff3 26.23%,#00fff2 27.87%,#00fff0 29.51%,#00ffef 31.15%,#00ffee 32.79%,#00ffed 34.43%,#00ffeb 36.07%,#3cffea 37.7%,#5dffe8 39.34%,#75ffe7 40.98%,#88ffe5 42.62%,#99ffe3 44.26%,#a9ffe2 45.9%,#b7ffe0 47.54%,#c4ffde 49.18%,#d1ffdc 50.82%,#deffda 52.46%,#eaffd7 54.1%,#f5ffd5 55.74%,#fffed1 57.38%,#fff3c6 59.02%,#ffe9bc 60.66%,#ffe1b2 62.3%,#ffd9aa 63.93%,#ffd2a2 65.57%,#ffcc9b 67.21%,#ffc694 68.85%,#ffc08d 70.49%,#ffbb87 72.13%,#ffb681 73.77%,#ffb17b 75.41%,#ffad74 77.05%,#ffa86f 78.69%,#ffa469 80.33%,#ffa063 81.97%,#ff9c5d 83.61%,#ff9957 85.25%,#ff9551 86.89%,#ff924b 88.52%,#ff8e44 90.16%,#ff8b3d 91.8%,#ff8836 93.44%,#ff852d 95.08%,#ff8222 96.72%,#ff7f12 98.36%,#ff7c00 100%)"></i><i style="left:79px;top:374px;width:247px;height:2px;background:linear-gradient(90deg,#00fbff 0%,#00fbff 1.613%,#00fcff 3.226%,#00fdff 4.839%,#00feff 6.452%,#00feff 8.065%,#00ffff 9.677%,#00fffe 11.29%,#00fffd 12.9%,#00fffc 14.52%,#00fffb 16.13%,#00fffa 17.74%,#00fff9 19.35%,#00fff9 20.97%,#00fff8 22.58%,#00fff7 24.19%,#00fff5 25.81%,#00fff4 27.42%,#00fff3 29.03%,#00fff2 30.65%,#00fff1 32.26%,#00fff0 33.87%,#00ffef 35.48%,#37ffed 37.1%,#5bffec 38.71%,#73ffea 40.32%,#87ffe9 41.94%,#98ffe7 43.55%,#a7ffe5 45.16%,#b6ffe3 46.77%,#c3ffe2 48.39%,#d0ffe0 50%,#ddffde 51.61%,#e9ffdb 53.23%,#f4ffd9 54.84%,#fffed6 56.45%,#fff3cb 58.06%,#ffeac0 59.68%,#ffe1b7 61.29%,#ffd9ae 62.9%,#ffd2a6 64.52%,#ffcc9f 66.13%,#ffc698 67.74%,#ffc091 69.35%,#ffbb8b 70.97%,#ffb685 72.58%,#ffb17f 74.19%,#ffad79 75.81%,#ffa873 77.42%,#ffa46d 79.03%,#ffa067 80.65%,#ff9c61 82.26%,#ff985c 83.87%,#ff9556 85.48%,#ff9150 87.1%,#ff8e4a 88.71%,#ff8b43 90.32%,#ff873c 91.94%,#ff8435 93.55%,#ff812c 95.16%,#ff7e22 96.77%,#ff7b12 98.39%,#ff7900 100%)"></i><i style="left:79px;top:376px;width:249px;height:2px;background:linear-gradient(90deg,#00f9ff 0%,#00f9ff 1.613%,#00faff 3.226%,#00fbff 4.839%,#00fbff 6.452%,#00fcff 8.065%,#00fdff 9.677%,#00feff 11.29%,#00ffff 12.9%,#00ffff 14.52%,#00fffe 16.13%,#00fffd 17.74%,#00fffc 19.35%,#00fffb 20.97%,#00fffa 22.58%,#00fff9 24.19%,#00fff8 25.81%,#00fff7 27.42%,#00fff6 29.03%,#00fff5 30.65%,#00fff4 32.26%,#00fff2 33.87%,#00fff1 35.48%,#43fff0 37.1%,#62ffee 38.71%,#79ffed 40.32%,#8dffeb 41.94%,#9effea 43.55%,#adffe8 45.16%,#bbffe6 46.77%,#c9ffe4 48.39%,#d6ffe2 50%,#e2ffe0 51.61%,#eeffde 53.23%,#faffdc 54.84%,#fff8d4 56.45%,#ffeec9 58.06%,#ffe5bf 59.68%,#ffdcb5 61.29%,#ffd5ad 62.9%,#ffcea5 64.52%,#ffc89e 66.13%,#ffc297 67.74%,#ffbc91 69.35%,#ffb78a 70.97%,#ffb284 72.58%,#ffae7e 74.19%,#ffa978 75.81%,#ffa572 77.42%,#ffa16d 79.03%,#ff9d67 80.65%,#ff9961 82.26%,#ff955b 83.87%,#ff9156 85.48%,#ff8e50 87.1%,#ff8b4a 88.71%,#ff8743 90.32%,#ff843c 91.94%,#ff8135 93.55%,#ff7e2c 95.16%,#ff7b22 96.77%,#ff7812 98.39%,#ff7600 100%)"></i><i style="left:80px;top:378px;width:250px;height:2px;background:linear-gradient(90deg,#00f7ff 0%,#00f7ff 1.613%,#00f8ff 3.226%,#00f9ff 4.839%,#00f9ff 6.452%,#00faff 8.065%,#00fbff 9.677%,#00fcff 11.29%,#00fcff 12.9%,#00fdff 14.52%,#00feff 16.13%,#00ffff 17.74%,#00fffe 19.35%,#00fffd 20.97%,#00fffc 22.58%,#00fffb 24.19%,#00fffa 25.81%,#00fff9 27.42%,#00fff8 29.03%,#00fff7 30.65%,#00fff6 32.26%,#00fff5 33.87%,#23fff4 35.48%,#52fff2 37.1%,#6dfff1 38.71%,#83ffef 40.32%,#95ffee 41.94%,#a5ffec 43.55%,#b5ffeb 45.16%,#c3ffe9 46.77%,#d0ffe7 48.39%,#ddffe5 50%,#eaffe3 51.61%,#f6ffe1 53.23%,#fffddd 54.84%,#fff2d1 56.45%,#ffe8c6 58.06%,#ffdfbc 59.68%,#ffd7b3 61.29%,#ffd0ab 62.9%,#ffc9a4 64.52%,#ffc39d 66.13%,#ffbe96 67.74%,#ffb890 69.35%,#ffb389 70.97%,#ffae83 72.58%,#ffaa7d 74.19%,#ffa577 75.81%,#ffa172 77.42%,#ff9d6c 79.03%,#ff9966 80.65%,#ff9561 82.26%,#ff925b 83.87%,#ff8e55 85.48%,#ff8b4f 87.1%,#ff8749 88.71%,#ff8443 90.32%,#ff813c 91.94%,#ff7e35 93.55%,#ff7b2c 95.16%,#ff7822 96.77%,#ff7512 98.39%,#ff7200 100%)"></i><i style="left:80px;top:380px;width:252px;height:2px;background:linear-gradient(90deg,#00f4ff 0%,#00f5ff 1.587%,#00f6ff 3.175%,#00f6ff 4.762%,#00f7ff 6.349%,#00f8ff 7.937%,#00f8ff 9.524%,#00f9ff 11.11%,#00faff 12.7%,#00fbff 14.29%,#00fbff 15.87%,#00fcff 17.46%,#00fdff 19.05%,#00feff 20.63%,#00ffff 22.22%,#00fffe 23.81%,#00fffd 25.4%,#00fffc 26.98%,#00fffb 28.57%,#00fffa 30.16%,#00fff9 31.75%,#00fff8 33.33%,#18fff7 34.92%,#4ffff6 36.51%,#6bfff4 38.1%,#81fff3 39.68%,#94fff1 41.27%,#a4fff0 42.86%,#b4ffee 44.44%,#c2ffed 46.03%,#cfffeb 47.62%,#dcffe9 49.21%,#e9ffe7 50.79%,#f5ffe5 52.38%,#fffde1 53.97%,#fff2d5 55.56%,#ffe8cb 57.14%,#ffdfc1 58.73%,#ffd7b7 60.32%,#ffd0af 61.9%,#ffc9a8 63.49%,#ffc3a1 65.08%,#ffbd9a 66.67%,#ffb893 68.25%,#ffb38d 69.84%,#ffae87 71.43%,#ffa981 73.02%,#ffa57b 74.6%,#ffa176 76.19%,#ff9d70 77.78%,#ff996a 79.37%,#ff9565 80.95%,#ff915f 82.54%,#ff8e5a 84.13%,#ff8a54 85.71%,#ff874e 87.3%,#ff8448 88.89%,#ff8142 90.48%,#ff7e3b 92.06%,#ff7b34 93.65%,#ff782c 95.24%,#ff7522 96.83%,#ff7212 98.41%,#ff6f00 100%)"></i><i style="left:80px;top:382px;width:254px;height:2px;background:linear-gradient(90deg,#00f2ff 0%,#00f3ff 1.562%,#00f3ff 3.125%,#00f4ff 4.688%,#00f5ff 6.25%,#00f5ff 7.812%,#00f6ff 9.375%,#00f7ff 10.94%,#00f7ff 12.5%,#00f8ff 14.06%,#00f9ff 15.62%,#00faff 17.19%,#00faff 18.75%,#00fbff 20.31%,#00fcff 21.88%,#00fdff 23.44%,#00feff 25%,#00ffff 26.56%,#00fffe 28.12%,#00fffd 29.69%,#00fffc 31.25%,#00fffb 32.81%,#00fffa 34.38%,#4cfff9 35.94%,#69fff8 37.5%,#7ffff6 39.06%,#92fff5 40.62%,#a3fff3 42.19%,#b3fff2 43.75%,#c1fff0 45.31%,#cfffef 46.88%,#dcffed 48.44%,#e8ffeb 50%,#f5ffe9 51.56%,#fffde6 53.12%,#fff2da 54.69%,#ffe8cf 56.25%,#ffdfc5 57.81%,#ffd7bb 59.38%,#ffcfb3 60.94%,#ffc9ab 62.5%,#ffc3a4 64.06%,#ffbd9e 65.62%,#ffb897 67.19%,#ffb391 68.75%,#ffae8b 70.31%,#ffa985 71.88%,#ffa57f 73.44%,#ffa079 75%,#ff9c74 76.56%,#ff986e 78.12%,#ff9569 79.69%,#ff9164 81.25%,#ff8d5e 82.81%,#ff8a59 84.38%,#ff8753 85.94%,#ff834d 87.5%,#ff8048 89.06%,#ff7d41 90.62%,#ff7a3b 92.19%,#ff7734 93.75%,#ff742c 95.31%,#ff7221 96.88%,#ff6f12 98.44%,#ff6c00 100%)"></i><i style="left:81px;top:384px;width:255px;height:2px;background:linear-gradient(90deg,#00f0ff 0%,#00f1ff 1.562%,#00f1ff 3.125%,#00f2ff 4.688%,#00f3ff 6.25%,#00f3ff 7.812%,#00f4ff 9.375%,#00f4ff 10.94%,#00f5ff 12.5%,#00f6ff 14.06%,#00f6ff 15.62%,#00f7ff 17.19%,#00f8ff 18.75%,#00f9ff 20.31%,#00faff 21.88%,#00faff 23.44%,#00fbff 25%,#00fcff 26.56%,#00fdff 28.12%,#00feff 29.69%,#00ffff 31.25%,#00fffe 32.81%,#33fffd 34.38%,#5afffc 35.94%,#74fffa 37.5%,#89fff9 39.06%,#9bfff8 40.62%,#abfff6 42.19%,#bafff5 43.75%,#c9fff3 45.31%,#d6fff2 46.88%,#e3fff0 48.44%,#f0ffee 50%,#fcffec 51.56%,#fff6e2 53.12%,#ffecd7 54.69%,#ffe2cc 56.25%,#ffd9c2 57.81%,#ffd1b9 59.38%,#ffcab1 60.94%,#ffc4aa 62.5%,#ffbea3 64.06%,#ffb99c 65.62%,#ffb396 67.19%,#ffae90 68.75%,#ffaa8a 70.31%,#ffa584 71.88%,#ffa17e 73.44%,#ff9d79 75%,#ff9973 76.56%,#ff956e 78.12%,#ff9168 79.69%,#ff8d63 81.25%,#ff8a5e 82.81%,#ff8758 84.38%,#ff8353 85.94%,#ff804d 87.5%,#ff7d47 89.06%,#ff7a41 90.62%,#ff773b 92.19%,#ff7434 93.75%,#ff712b 95.31%,#ff6e21 96.88%,#ff6c12 98.44%,#ff6900 100%)"></i><i style="left:81px;top:386px;width:257px;height:2px;background:linear-gradient(90deg,#00eeff 0%,#00efff 1.562%,#00efff 3.125%,#00f0ff 4.688%,#00f0ff 6.25%,#00f1ff 7.812%,#00f1ff 9.375%,#00f2ff 10.94%,#00f3ff 12.5%,#00f3ff 14.06%,#00f4ff 15.62%,#00f5ff 17.19%,#00f5ff 18.75%,#00f6ff 20.31%,#00f7ff 21.88%,#00f8ff 23.44%,#00f9ff 25%,#00f9ff 26.56%,#00faff 28.12%,#00fbff 29.69%,#00fcff 31.25%,#00fdff 32.81%,#3ffeff 34.38%,#62ffff 35.94%,#7afffd 37.5%,#8ffffc 39.06%,#a1fffb 40.62%,#b1fff9 42.19%,#c0fff8 43.75%,#cefff6 45.31%,#dcfff5 46.88%,#e9fff3 48.44%,#f6fff1 50%,#fffced 51.56%,#fff1e0 53.12%,#ffe6d5 54.69%,#ffddca 56.25%,#ffd5c1 57.81%,#ffcdb8 59.38%,#ffc6b0 60.94%,#ffc0a9 62.5%,#ffbaa2 64.06%,#ffb59c 65.62%,#ffb095 67.19%,#ffab8f 68.75%,#ffa689 70.31%,#ffa283 71.88%,#ff9d7e 73.44%,#ff9978 75%,#ff9573 76.56%,#ff916d 78.12%,#ff8e68 79.69%,#ff8a63 81.25%,#ff875d 82.81%,#ff8358 84.38%,#ff8053 85.94%,#ff7d4d 87.5%,#ff7a47 89.06%,#ff7741 90.62%,#ff743b 92.19%,#ff7134 93.75%,#ff6e2b 95.31%,#ff6b22 96.88%,#ff6813 98.44%,#ff6600 100%)"></i><i style="left:81px;top:388px;width:259px;height:2px;background:linear-gradient(90deg,#00ecff 0%,#00edff 1.538%,#00edff 3.077%,#00eeff 4.615%,#00eeff 6.154%,#00efff 7.692%,#00efff 9.231%,#00f0ff 10.77%,#00f0ff 12.31%,#00f1ff 13.85%,#00f2ff 15.38%,#00f2ff 16.92%,#00f3ff 18.46%,#00f3ff 20%,#00f4ff 21.54%,#00f5ff 23.08%,#00f6ff 24.62%,#00f6ff 26.15%,#00f7ff 27.69%,#00f8ff 29.23%,#00f9ff 30.77%,#00faff 32.31%,#3bfbff 33.85%,#5ffcff 35.38%,#78fdff 36.92%,#8dfeff 38.46%,#a0fffe 40%,#b0fffd 41.54%,#bffffc 43.08%,#cefffa 44.62%,#dbfff9 46.15%,#e9fff7 47.69%,#f5fff5 49.23%,#fffcf1 50.77%,#fff1e4 52.31%,#ffe6d9 53.85%,#ffddcf 55.38%,#ffd5c5 56.92%,#ffcdbc 58.46%,#ffc6b4 60%,#ffc0ad 61.54%,#ffbaa6 63.08%,#ffb49f 64.62%,#ffaf99 66.15%,#ffaa93 67.69%,#ffa68d 69.23%,#ffa187 70.77%,#ff9d81 72.31%,#ff997c 73.85%,#ff9577 75.38%,#ff9171 76.92%,#ff8d6c 78.46%,#ff8a67 80%,#ff8662 81.54%,#ff835c 83.08%,#ff7f57 84.62%,#ff7c52 86.15%,#ff794c 87.69%,#ff7646 89.23%,#ff7340 90.77%,#ff703a 92.31%,#ff6d33 93.85%,#ff6a2b 95.38%,#ff6821 96.92%,#ff6512 98.46%,#ff6200 100%)"></i><i style="left:82px;top:390px;width:261px;height:2px;background:linear-gradient(90deg,#00eaff 0%,#00ebff 1.538%,#00ebff 3.077%,#00ebff 4.615%,#00ecff 6.154%,#00ecff 7.692%,#00edff 9.231%,#00eeff 10.77%,#00eeff 12.31%,#00efff 13.85%,#00efff 15.38%,#00f0ff 16.92%,#00f0ff 18.46%,#00f1ff 20%,#00f2ff 21.54%,#00f3ff 23.08%,#00f3ff 24.62%,#00f4ff 26.15%,#00f5ff 27.69%,#00f6ff 29.23%,#00f6ff 30.77%,#16f7ff 32.31%,#4ff8ff 33.85%,#6cf9ff 35.38%,#83faff 36.92%,#96fcff 38.46%,#a8fdff 40%,#b9feff 41.54%,#c9ffff 43.08%,#d7fffd 44.62%,#e5fffc 46.15%,#f2fffa 47.69%,#fffff8 49.23%,#fff3ec 50.77%,#ffe9e0 52.31%,#ffdfd5 53.85%,#ffd6cb 55.38%,#ffcec1 56.92%,#ffc7b9 58.46%,#ffc0b1 60%,#ffbaaa 61.54%,#ffb5a3 63.08%,#ffaf9d 64.62%,#ffaa97 66.15%,#ffa591 67.69%,#ffa18b 69.23%,#ff9c85 70.77%,#ff9880 72.31%,#ff947a 73.85%,#ff9075 75.38%,#ff8d70 76.92%,#ff896a 78.46%,#ff8565 80%,#ff8260 81.54%,#ff7f5b 83.08%,#ff7b56 84.62%,#ff7850 86.15%,#ff754b 87.69%,#ff7245 89.23%,#ff6f3f 90.77%,#ff6c38 92.31%,#ff6931 93.85%,#ff6629 95.38%,#ff641e 96.92%,#ff610c 98.46%,#ff5e00 100%)"></i><i style="left:82px;top:392px;width:262px;height:2px;background:linear-gradient(90deg,#00e8ff 0%,#00e8ff 1.515%,#00e9ff 3.03%,#00e9ff 4.545%,#00eaff 6.061%,#00eaff 7.576%,#00ebff 9.091%,#00ebff 10.61%,#00ecff 12.12%,#00ecff 13.64%,#00edff 15.15%,#00edff 16.67%,#00eeff 18.18%,#00eeff 19.7%,#00efff 21.21%,#00f0ff 22.73%,#00f0ff 24.24%,#00f1ff 25.76%,#00f2ff 27.27%,#00f3ff 28.79%,#00f3ff 30.3%,#00f4ff 31.82%,#49f5ff 33.33%,#67f6ff 34.85%,#7ef7ff 36.36%,#92f8ff 37.88%,#a4f9ff 39.39%,#b4faff 40.91%,#c4fbff 42.42%,#d3fdff 43.94%,#e2feff 45.45%,#f0fffe 46.97%,#fdfffd 48.48%,#fff5f1 50%,#ffeae5 51.52%,#ffe0da 53.03%,#ffd7d0 54.55%,#ffcfc6 56.06%,#ffc7bd 57.58%,#ffc1b6 59.09%,#ffbbaf 60.61%,#ffb5a8 62.12%,#ffb0a1 63.64%,#ffab9b 65.15%,#ffa695 66.67%,#ffa18f 68.18%,#ff9d8a 69.7%,#ff9884 71.21%,#ff947f 72.73%,#ff9079 74.24%,#ff8d74 75.76%,#ff896f 77.27%,#ff856a 78.79%,#ff8265 80.3%,#ff7f60 81.82%,#ff7b5b 83.33%,#ff7856 84.85%,#ff7550 86.36%,#ff724b 87.88%,#ff6f45 89.39%,#ff6c40 90.91%,#ff6939 92.42%,#ff6632 93.94%,#ff642b 95.45%,#ff6121 96.97%,#ff5e13 98.48%,#ff5b00 100%)"></i><i style="left:83px;top:394px;width:263px;height:2px;background:linear-gradient(90deg,#00e6ff 0%,#00e6ff 1.515%,#00e7ff 3.03%,#00e7ff 4.545%,#00e8ff 6.061%,#00e8ff 7.576%,#00e9ff 9.091%,#00e9ff 10.61%,#00e9ff 12.12%,#00eaff 13.64%,#00eaff 15.15%,#00ebff 16.67%,#00ecff 18.18%,#00ecff 19.7%,#00edff 21.21%,#00edff 22.73%,#00eeff 24.24%,#00efff 25.76%,#00efff 27.27%,#00f0ff 28.79%,#00f1ff 30.3%,#2ef1ff 31.82%,#56f2ff 33.33%,#71f3ff 34.85%,#86f4ff 36.36%,#99f5ff 37.88%,#aaf6ff 39.39%,#baf7ff 40.91%,#c9f8ff 42.42%,#d8faff 43.94%,#e7fbff 45.45%,#f5fcff 46.97%,#fff9fb 48.48%,#ffeeee 50%,#ffe3e2 51.52%,#ffdad7 53.03%,#ffd1cd 54.55%,#ffc9c4 56.06%,#ffc2bb 57.58%,#ffbcb4 59.09%,#ffb6ad 60.61%,#ffb1a6 62.12%,#ffaba0 63.64%,#ffa69a 65.15%,#ffa294 66.67%,#ff9d8e 68.18%,#ff9989 69.7%,#ff9583 71.21%,#ff917e 72.73%,#ff8d79 74.24%,#ff8974 75.76%,#ff856f 77.27%,#ff826a 78.79%,#ff7f65 80.3%,#ff7b5f 81.82%,#ff785a 83.33%,#ff7555 84.85%,#ff7250 86.36%,#ff6f4b 87.88%,#ff6c45 89.39%,#ff693f 90.91%,#ff6639 92.42%,#ff6332 93.94%,#ff602b 95.45%,#ff5d21 96.97%,#ff5b13 98.48%,#ff5800 100%)"></i><i style="left:83px;top:396px;width:266px;height:2px;background:linear-gradient(90deg,#00e4ff 0%,#00e4ff 1.515%,#00e5ff 3.03%,#00e5ff 4.545%,#00e5ff 6.061%,#00e6ff 7.576%,#00e6ff 9.091%,#00e7ff 10.61%,#00e7ff 12.12%,#00e8ff 13.64%,#00e8ff 15.15%,#00e9ff 16.67%,#00e9ff 18.18%,#00eaff 19.7%,#00eaff 21.21%,#00ebff 22.73%,#00ebff 24.24%,#00ecff 25.76%,#00ecff 27.27%,#00edff 28.79%,#00eeff 30.3%,#3eefff 31.82%,#5fefff 33.33%,#78f0ff 34.85%,#8cf1ff 36.36%,#9ef2ff 37.88%,#aff3ff 39.39%,#bff4ff 40.91%,#cef5ff 42.42%,#ddf6ff 43.94%,#ebf7ff 45.45%,#f9f9ff 46.97%,#fff2f7 48.48%,#ffe7ea 50%,#ffdddf 51.52%,#ffd4d4 53.03%,#ffccca 54.55%,#ffc4c1 56.06%,#ffbdb9 57.58%,#ffb7b2 59.09%,#ffb1ab 60.61%,#ffaca5 62.12%,#ffa79e 63.64%,#ffa298 65.15%,#ff9d92 66.67%,#ff998d 68.18%,#ff9587 69.7%,#ff9082 71.21%,#ff8c7d 72.73%,#ff8977 74.24%,#ff8572 75.76%,#ff816d 77.27%,#ff7e68 78.79%,#ff7b63 80.3%,#ff775e 81.82%,#ff7459 83.33%,#ff7154 84.85%,#ff6e4f 86.36%,#ff6b49 87.88%,#ff6844 89.39%,#ff653e 90.91%,#ff6238 92.42%,#ff5f31 93.94%,#ff5c28 95.45%,#ff591e 96.97%,#ff560d 98.48%,#ff5400 100%)"></i><i style="left:83px;top:398px;width:267px;height:2px;background:linear-gradient(90deg,#00e2ff 0%,#00e2ff 1.493%,#00e3ff 2.985%,#00e3ff 4.478%,#00e3ff 5.97%,#00e4ff 7.463%,#00e4ff 8.955%,#00e4ff 10.45%,#00e5ff 11.94%,#00e5ff 13.43%,#00e6ff 14.93%,#00e6ff 16.42%,#00e6ff 17.91%,#00e7ff 19.4%,#00e7ff 20.9%,#00e8ff 22.39%,#00e8ff 23.88%,#00e9ff 25.37%,#00eaff 26.87%,#00eaff 28.36%,#00ebff 29.85%,#37ebff 31.34%,#5aecff 32.84%,#73edff 34.33%,#88eeff 35.82%,#9aefff 37.31%,#aaefff 38.81%,#baf0ff 40.3%,#c9f1ff 41.79%,#d7f2ff 43.28%,#e6f3ff 44.78%,#f4f4ff 46.27%,#fff3fc 47.76%,#ffe8f0 49.25%,#ffdee4 50.75%,#ffd5d9 52.24%,#ffcccf 53.73%,#ffc5c6 55.22%,#ffbdbe 56.72%,#ffb7b7 58.21%,#ffb2b0 59.7%,#ffaca9 61.19%,#ffa7a3 62.69%,#ffa29d 64.18%,#ff9d97 65.67%,#ff9991 67.16%,#ff958c 68.66%,#ff9186 70.15%,#ff8d81 71.64%,#ff897c 73.13%,#ff8577 74.63%,#ff8172 76.12%,#ff7e6d 77.61%,#ff7a68 79.1%,#ff7763 80.6%,#ff745e 82.09%,#ff7159 83.58%,#ff6e54 85.07%,#ff6b4f 86.57%,#ff684a 88.06%,#ff6544 89.55%,#ff623f 91.04%,#ff5f39 92.54%,#ff5c32 94.03%,#ff592a 95.52%,#ff5621 97.01%,#ff5413 98.51%,#ff5100 100%)"></i><i style="left:84px;top:400px;width:269px;height:2px;background:linear-gradient(90deg,#00e0ff 0%,#00e0ff 1.493%,#00e0ff 2.985%,#00e1ff 4.478%,#00e1ff 5.97%,#00e1ff 7.463%,#00e2ff 8.955%,#00e2ff 10.45%,#00e3ff 11.94%,#00e3ff 13.43%,#00e3ff 14.93%,#00e4ff 16.42%,#00e4ff 17.91%,#00e5ff 19.4%,#00e5ff 20.9%,#00e5ff 22.39%,#00e6ff 23.88%,#00e6ff 25.37%,#00e7ff 26.87%,#00e8ff 28.36%,#07e8ff 29.85%,#4ae9ff 31.34%,#67e9ff 32.84%,#7deaff 34.33%,#90ebff 35.82%,#a2ecff 37.31%,#b2ecff 38.81%,#c1edff 40.3%,#cfeeff 41.79%,#deefff 43.28%,#ecf0ff 44.78%,#faf1ff 46.27%,#ffebf7 47.76%,#ffe0eb 49.25%,#ffd6df 50.75%,#ffced5 52.24%,#ffc6cc 53.73%,#ffbec3 55.22%,#ffb8bb 56.72%,#ffb2b4 58.21%,#ffacad 59.7%,#ffa7a7 61.19%,#ffa2a1 62.69%,#ff9d9b 64.18%,#ff9995 65.67%,#ff948f 67.16%,#ff908a 68.66%,#ff8c84 70.15%,#ff887f 71.64%,#ff847a 73.13%,#ff8175 74.63%,#ff7d70 76.12%,#ff7a6b 77.61%,#ff7667 79.1%,#ff7362 80.6%,#ff705d 82.09%,#ff6d58 83.58%,#ff6953 85.07%,#ff664e 86.57%,#ff6348 88.06%,#ff6043 89.55%,#ff5d3d 91.04%,#ff5b37 92.54%,#ff5830 94.03%,#ff5528 95.52%,#ff521e 97.01%,#ff4f0d 98.51%,#ff4c00 100%)"></i><i style="left:84px;top:402px;width:270px;height:2px;background:linear-gradient(90deg,#00deff 0%,#00deff 1.471%,#00deff 2.941%,#00dfff 4.412%,#00dfff 5.882%,#00dfff 7.353%,#00dfff 8.824%,#00e0ff 10.29%,#00e0ff 11.76%,#00e0ff 13.24%,#00e1ff 14.71%,#00e1ff 16.18%,#00e2ff 17.65%,#00e2ff 19.12%,#00e2ff 20.59%,#00e3ff 22.06%,#00e3ff 23.53%,#00e4ff 25%,#00e4ff 26.47%,#00e5ff 27.94%,#00e5ff 29.41%,#45e6ff 30.88%,#63e6ff 32.35%,#79e7ff 33.82%,#8ce7ff 35.29%,#9de8ff 36.76%,#ade9ff 38.24%,#bceaff 39.71%,#cbeaff 41.18%,#d9ebff 42.65%,#e7ecff 44.12%,#f4edff 45.59%,#ffecfc 47.06%,#ffe1f0 48.53%,#ffd7e5 50%,#ffceda 51.47%,#ffc6d1 52.94%,#ffbfc8 54.41%,#ffb8bf 55.88%,#ffb2b8 57.35%,#ffacb1 58.82%,#ffa7ab 60.29%,#ffa2a5 61.76%,#ff9d9f 63.24%,#ff9999 64.71%,#ff9493 66.18%,#ff908e 67.65%,#ff8c89 69.12%,#ff8883 70.59%,#ff847e 72.06%,#ff8179 73.53%,#ff7d75 75%,#ff7970 76.47%,#ff766b 77.94%,#ff7366 79.41%,#ff7061 80.88%,#ff6c5d 82.35%,#ff6958 83.82%,#ff6653 85.29%,#ff634e 86.76%,#ff6049 88.24%,#ff5d43 89.71%,#ff5a3e 91.18%,#ff5738 92.65%,#ff5531 94.12%,#ff522a 95.59%,#ff4f21 97.06%,#ff4c13 98.53%,#ff4900 100%)"></i><i style="left:85px;top:404px;width:272px;height:2px;background:linear-gradient(90deg,#00dcff 0%,#00dcff 1.471%,#00dcff 2.941%,#00dcff 4.412%,#00ddff 5.882%,#00ddff 7.353%,#00ddff 8.824%,#00deff 10.29%,#00deff 11.76%,#00deff 13.24%,#00dfff 14.71%,#00dfff 16.18%,#00dfff 17.65%,#00e0ff 19.12%,#00e0ff 20.59%,#00e0ff 22.06%,#00e1ff 23.53%,#00e1ff 25%,#00e1ff 26.47%,#00e2ff 27.94%,#2ee2ff 29.41%,#55e3ff 30.88%,#6ee3ff 32.35%,#82e4ff 33.82%,#94e5ff 35.29%,#a5e5ff 36.76%,#b4e6ff 38.24%,#c3e7ff 39.71%,#d1e7ff 41.18%,#dfe8ff 42.65%,#ece9ff 44.12%,#faeaff 45.59%,#ffe3f7 47.06%,#ffd9eb 48.53%,#ffd0e0 50%,#ffc8d6 51.47%,#ffc0cd 52.94%,#ffb9c4 54.41%,#ffb2bd 55.88%,#ffadb6 57.35%,#ffa7af 58.82%,#ffa2a9 60.29%,#ff9da3 61.76%,#ff989d 63.24%,#ff9497 64.71%,#ff9091 66.18%,#ff8b8c 67.65%,#ff8787 69.12%,#ff8482 70.59%,#ff807d 72.06%,#ff7c78 73.53%,#ff7973 75%,#ff756e 76.47%,#ff726a 77.94%,#ff6f65 79.41%,#ff6b60 80.88%,#ff685b 82.35%,#ff6556 83.82%,#ff6252 85.29%,#ff5f4d 86.76%,#ff5c47 88.24%,#ff5942 89.71%,#ff563c 91.18%,#ff5336 92.65%,#ff502f 94.12%,#ff4d28 95.59%,#ff4a1e 97.06%,#ff470e 98.53%,#ff4400 100%)"></i><i style="left:85px;top:406px;width:273px;height:2px;background:linear-gradient(90deg,#00daff 0%,#00daff 1.471%,#00daff 2.941%,#00daff 4.412%,#00dbff 5.882%,#00dbff 7.353%,#00dbff 8.824%,#00dbff 10.29%,#00dcff 11.76%,#00dcff 13.24%,#00dcff 14.71%,#00dcff 16.18%,#00ddff 17.65%,#00ddff 19.12%,#00ddff 20.59%,#00deff 22.06%,#00deff 23.53%,#00deff 25%,#00dfff 26.47%,#00dfff 27.94%,#36e0ff 29.41%,#59e0ff 30.88%,#71e0ff 32.35%,#85e1ff 33.82%,#96e2ff 35.29%,#a6e2ff 36.76%,#b6e3ff 38.24%,#c4e3ff 39.71%,#d2e4ff 41.18%,#e0e5ff 42.65%,#ede5ff 44.12%,#fbe6ff 45.59%,#ffdff7 47.06%,#ffd5eb 48.53%,#ffcce0 50%,#ffc4d6 51.47%,#ffbccd 52.94%,#ffb5c4 54.41%,#ffafbd 55.88%,#ffa9b6 57.35%,#ffa4af 58.82%,#ff9fa9 60.29%,#ff9aa3 61.76%,#ff959d 63.24%,#ff9197 64.71%,#ff8d92 66.18%,#ff898d 67.65%,#ff8587 69.12%,#ff8182 70.59%,#ff7d7d 72.06%,#ff7979 73.53%,#ff7674 75%,#ff726f 76.47%,#ff6f6a 77.94%,#ff6c66 79.41%,#ff6861 80.88%,#ff655c 82.35%,#ff6257 83.82%,#ff5f53 85.29%,#ff5c4e 86.76%,#ff5948 88.24%,#ff5643 89.71%,#ff533e 91.18%,#ff5038 92.65%,#ff4d31 94.12%,#ff4a2a 95.59%,#ff4721 97.06%,#ff4413 98.53%,#ff4100 100%)"></i><i style="left:85px;top:408px;width:275px;height:2px;background:linear-gradient(90deg,#00d8ff 0%,#00d8ff 1.449%,#00d8ff 2.899%,#00d8ff 4.348%,#00d8ff 5.797%,#00d9ff 7.246%,#00d9ff 8.696%,#00d9ff 10.14%,#00d9ff 11.59%,#00d9ff 13.04%,#00daff 14.49%,#00daff 15.94%,#00daff 17.39%,#00daff 18.84%,#00dbff 20.29%,#00dbff 21.74%,#00dbff 23.19%,#00dcff 24.64%,#00dcff 26.09%,#00dcff 27.54%,#33ddff 28.99%,#56ddff 30.43%,#6fddff 31.88%,#82deff 33.33%,#94deff 34.78%,#a4dfff 36.23%,#b3dfff 37.68%,#c1e0ff 39.13%,#cfe0ff 40.58%,#dde1ff 42.03%,#eae1ff 43.48%,#f7e2ff 44.93%,#ffdffa 46.38%,#ffd5ee 47.83%,#ffcce4 49.28%,#ffc3da 50.72%,#ffbcd0 52.17%,#ffb5c8 53.62%,#ffaec0 55.07%,#ffa9b9 56.52%,#ffa3b2 57.97%,#ff9eac 59.42%,#ff99a6 60.87%,#ff95a0 62.32%,#ff909a 63.77%,#ff8c95 65.22%,#ff8890 66.67%,#ff848a 68.12%,#ff8085 69.57%,#ff7c81 71.01%,#ff787c 72.46%,#ff7577 73.91%,#ff7172 75.36%,#ff6e6e 76.81%,#ff6b69 78.26%,#ff6764 79.71%,#ff6460 81.16%,#ff615b 82.61%,#ff5e56 84.06%,#ff5b52 85.51%,#ff584d 86.96%,#ff5548 88.41%,#ff5243 89.86%,#ff4f3d 91.3%,#ff4c37 92.75%,#ff4931 94.2%,#ff4629 95.65%,#ff4220 97.1%,#ff3f13 98.55%,#ff3c00 100%)"></i><i style="left:86px;top:410px;width:277px;height:2px;background:linear-gradient(90deg,#00d6ff 0%,#00d6ff 1.449%,#00d6ff 2.899%,#00d6ff 4.348%,#00d6ff 5.797%,#00d6ff 7.246%,#00d7ff 8.696%,#00d7ff 10.14%,#00d7ff 11.59%,#00d7ff 13.04%,#00d7ff 14.49%,#00d8ff 15.94%,#00d8ff 17.39%,#00d8ff 18.84%,#00d8ff 20.29%,#00d9ff 21.74%,#00d9ff 23.19%,#00d9ff 24.64%,#00d9ff 26.09%,#00daff 27.54%,#46daff 28.99%,#62daff 30.43%,#78dbff 31.88%,#8bdbff 33.33%,#9bdbff 34.78%,#abdcff 36.23%,#b9dcff 37.68%,#c7ddff 39.13%,#d5ddff 40.58%,#e2deff 42.03%,#efdeff 43.48%,#fcdfff 44.93%,#ffd7f5 46.38%,#ffcdea 47.83%,#ffc5df 49.28%,#ffbdd6 50.72%,#ffb5cd 52.17%,#ffafc5 53.62%,#ffa9bd 55.07%,#ffa3b7 56.52%,#ff9eb0 57.97%,#ff99aa 59.42%,#ff94a4 60.87%,#ff909e 62.32%,#ff8b99 63.77%,#ff8793 65.22%,#ff838e 66.67%,#ff7f89 68.12%,#ff7b84 69.57%,#ff787f 71.01%,#ff747a 72.46%,#ff7076 73.91%,#ff6d71 75.36%,#ff6a6c 76.81%,#ff6668 78.26%,#ff6363 79.71%,#ff605e 81.16%,#ff5d5a 82.61%,#ff5a55 84.06%,#ff5650 85.51%,#ff534b 86.96%,#ff5046 88.41%,#ff4d41 89.86%,#ff4a3c 91.3%,#ff4736 92.75%,#ff442f 94.2%,#ff4027 95.65%,#ff3d1e 97.1%,#ff3a0e 98.55%,#ff3600 100%)"></i><i style="left:86px;top:412px;width:279px;height:2px;background:linear-gradient(90deg,#00d4ff 0%,#00d4ff 1.429%,#00d4ff 2.857%,#00d4ff 4.286%,#00d4ff 5.714%,#00d4ff 7.143%,#00d4ff 8.571%,#00d5ff 10%,#00d5ff 11.43%,#00d5ff 12.86%,#00d5ff 14.29%,#00d5ff 15.71%,#00d5ff 17.14%,#00d6ff 18.57%,#00d6ff 20%,#00d6ff 21.43%,#00d6ff 22.86%,#00d6ff 24.29%,#00d7ff 25.71%,#00d7ff 27.14%,#44d7ff 28.57%,#60d7ff 30%,#76d8ff 31.43%,#88d8ff 32.86%,#99d8ff 34.29%,#a8d8ff 35.71%,#b7d9ff 37.14%,#c5d9ff 38.57%,#d2daff 40%,#dfdaff 41.43%,#ecdaff 42.86%,#f9dbff 44.29%,#ffd6f9 45.71%,#ffcded 47.14%,#ffc4e3 48.57%,#ffbcd9 50%,#ffb5d0 51.43%,#ffaec8 52.86%,#ffa8c0 54.29%,#ffa2ba 55.71%,#ff9db3 57.14%,#ff98ad 58.57%,#ff93a7 60%,#ff8fa1 61.43%,#ff8a9c 62.86%,#ff8696 64.29%,#ff8291 65.71%,#ff7e8c 67.14%,#ff7a87 68.57%,#ff7782 70%,#ff737d 71.43%,#ff6f79 72.86%,#ff6c74 74.29%,#ff696f 75.71%,#ff656b 77.14%,#ff6266 78.57%,#ff5f62 80%,#ff5c5d 81.43%,#ff5859 82.86%,#ff5554 84.29%,#ff5250 85.71%,#ff4f4b 87.14%,#ff4c46 88.57%,#ff4941 90%,#ff453b 91.43%,#ff4235 92.86%,#ff3f2f 94.29%,#ff3c27 95.71%,#ff381e 97.14%,#ff350e 98.57%,#ff3100 100%)"></i><i style="left:87px;top:414px;width:279px;height:2px;background:linear-gradient(90deg,#00d1ff 0%,#00d2ff 1.429%,#00d2ff 2.857%,#00d2ff 4.286%,#00d2ff 5.714%,#00d2ff 7.143%,#00d2ff 8.571%,#00d2ff 10%,#00d2ff 11.43%,#00d3ff 12.86%,#00d3ff 14.29%,#00d3ff 15.71%,#00d3ff 17.14%,#00d3ff 18.57%,#00d3ff 20%,#00d3ff 21.43%,#00d4ff 22.86%,#00d4ff 24.29%,#00d4ff 25.71%,#25d4ff 27.14%,#4ed4ff 28.57%,#68d4ff 30%,#7cd5ff 31.43%,#8dd5ff 32.86%,#9dd5ff 34.29%,#acd5ff 35.71%,#bad6ff 37.14%,#c8d6ff 38.57%,#d5d6ff 40%,#e2d6ff 41.43%,#eed7ff 42.86%,#fbd7ff 44.29%,#ffd1f7 45.71%,#ffc7ec 47.14%,#ffbfe1 48.57%,#ffb7d8 50%,#ffb0cf 51.43%,#ffaac7 52.86%,#ffa4c0 54.29%,#ff9fb9 55.71%,#ff99b3 57.14%,#ff95ac 58.57%,#ff90a7 60%,#ff8ba1 61.43%,#ff879b 62.86%,#ff8396 64.29%,#ff7f91 65.71%,#ff7b8c 67.14%,#ff7787 68.57%,#ff7382 70%,#ff707e 71.43%,#ff6c79 72.86%,#ff6974 74.29%,#ff6570 75.71%,#ff626b 77.14%,#ff5f67 78.57%,#ff5b62 80%,#ff585e 81.43%,#ff5559 82.86%,#ff5255 84.29%,#ff4f50 85.71%,#ff4b4c 87.14%,#ff4847 88.57%,#ff4542 90%,#ff423c 91.43%,#ff3e36 92.86%,#ff3b30 94.29%,#ff3729 95.71%,#ff3420 97.14%,#ff3014 98.57%,#ff2c00 100%)"></i><i style="left:87px;top:416px;width:282px;height:2px;background:linear-gradient(90deg,#00cfff 0%,#00d0ff 1.429%,#00d0ff 2.857%,#00d0ff 4.286%,#00d0ff 5.714%,#00d0ff 7.143%,#00d0ff 8.571%,#00d0ff 10%,#00d0ff 11.43%,#00d0ff 12.86%,#00d0ff 14.29%,#00d0ff 15.71%,#00d0ff 17.14%,#00d1ff 18.57%,#00d1ff 20%,#00d1ff 21.43%,#00d1ff 22.86%,#00d1ff 24.29%,#00d1ff 25.71%,#35d1ff 27.14%,#56d1ff 28.57%,#6ed2ff 30%,#81d2ff 31.43%,#92d2ff 32.86%,#a2d2ff 34.29%,#b0d2ff 35.71%,#bed2ff 37.14%,#cbd3ff 38.57%,#d8d3ff 40%,#e5d3ff 41.43%,#f2d3ff 42.86%,#fed4ff 44.29%,#ffcaf4 45.71%,#ffc2e9 47.14%,#ffbadf 48.57%,#ffb2d6 50%,#ffabcd 51.43%,#ffa5c5 52.86%,#ff9fbe 54.29%,#ff9ab7 55.71%,#ff95b1 57.14%,#ff90ab 58.57%,#ff8ba5 60%,#ff879f 61.43%,#ff839a 62.86%,#ff7e95 64.29%,#ff7a90 65.71%,#ff778b 67.14%,#ff7386 68.57%,#ff6f81 70%,#ff6b7c 71.43%,#ff6878 72.86%,#ff6473 74.29%,#ff616f 75.71%,#ff5e6a 77.14%,#ff5a66 78.57%,#ff5761 80%,#ff545d 81.43%,#ff5058 82.86%,#ff4d54 84.29%,#ff4a4f 85.71%,#ff464a 87.14%,#ff4345 88.57%,#ff4040 90%,#ff3c3b 91.43%,#ff3935 92.86%,#ff352f 94.29%,#ff3127 95.71%,#ff2d1e 97.14%,#ff280f 98.57%,#ff2300 100%)"></i><i style="left:88px;top:418px;width:282px;height:2px;background:linear-gradient(90deg,#00cdff 0%,#00cdff 1.429%,#00cdff 2.857%,#00ceff 4.286%,#00ceff 5.714%,#00ceff 7.143%,#00ceff 8.571%,#00ceff 10%,#00ceff 11.43%,#00ceff 12.86%,#00ceff 14.29%,#00ceff 15.71%,#00ceff 17.14%,#00ceff 18.57%,#00ceff 20%,#00ceff 21.43%,#00ceff 22.86%,#00ceff 24.29%,#00ceff 25.71%,#42ceff 27.14%,#5ecfff 28.57%,#74cfff 30%,#86cfff 31.43%,#96cfff 32.86%,#a6cfff 34.29%,#b4cfff 35.71%,#c1cfff 37.14%,#cecfff 38.57%,#dbcfff 40%,#e8d0ff 41.43%,#f4d0ff 42.86%,#ffcffd 44.29%,#ffc5f2 45.71%,#ffbde7 47.14%,#ffb5dd 48.57%,#ffaed4 50%,#ffa7cc 51.43%,#ffa1c4 52.86%,#ff9bbd 54.29%,#ff96b7 55.71%,#ff91b1 57.14%,#ff8cab 58.57%,#ff88a5 60%,#ff839f 61.43%,#ff7f9a 62.86%,#ff7b95 64.29%,#ff7790 65.71%,#ff738b 67.14%,#ff6f86 68.57%,#ff6c81 70%,#ff687d 71.43%,#ff6578 72.86%,#ff6174 74.29%,#ff5e6f 75.71%,#ff5a6b 77.14%,#ff5766 78.57%,#ff5362 80%,#ff505d 81.43%,#ff4d59 82.86%,#ff4954 84.29%,#ff4650 85.71%,#ff434b 87.14%,#ff3f46 88.57%,#ff3c41 90%,#ff383c 91.43%,#ff3436 92.86%,#ff3030 94.29%,#ff2c29 95.71%,#ff2720 97.14%,#ff2214 98.57%,#ff1c00 100%)"></i><i style="left:88px;top:420px;width:285px;height:2px;background:linear-gradient(90deg,#00cbff 0%,#00cbff 1.408%,#00cbff 2.817%,#00cbff 4.225%,#00cbff 5.634%,#00cbff 7.042%,#00cbff 8.451%,#00cbff 9.859%,#00cbff 11.27%,#00cbff 12.68%,#00cbff 14.08%,#00ccff 15.49%,#00ccff 16.9%,#00ccff 18.31%,#00ccff 19.72%,#00ccff 21.13%,#00ccff 22.54%,#00ccff 23.94%,#00ccff 25.35%,#42ccff 26.76%,#5eccff 28.17%,#73ccff 29.58%,#85ccff 30.99%,#96ccff 32.39%,#a5ccff 33.8%,#b3ccff 35.21%,#c0ccff 36.62%,#cdccff 38.03%,#daccff 39.44%,#e6ccff 40.85%,#f2ccff 42.25%,#feccff 43.66%,#ffc3f4 45.07%,#ffbbe9 46.48%,#ffb3e0 47.89%,#ffacd6 49.3%,#ffa5ce 50.7%,#ff9fc6 52.11%,#ff9abf 53.52%,#ff94b9 54.93%,#ff8fb3 56.34%,#ff8bad 57.75%,#ff86a7 59.15%,#ff82a1 60.56%,#ff7d9c 61.97%,#ff7997 63.38%,#ff7592 64.79%,#ff718d 66.2%,#ff6e88 67.61%,#ff6a83 69.01%,#ff667f 70.42%,#ff637a 71.83%,#ff5f76 73.24%,#ff5c71 74.65%,#ff586d 76.06%,#ff5569 77.46%,#ff5164 78.87%,#ff4e60 80.28%,#ff4b5c 81.69%,#ff4757 83.1%,#ff4453 84.51%,#ff404e 85.92%,#ff3d49 87.32%,#ff3945 88.73%,#ff3540 90.14%,#ff313a 91.55%,#ff2d34 92.96%,#ff282e 94.37%,#ff2327 95.77%,#ff1d1e 97.18%,#ff150f 98.59%,#ff0400 100%)"></i><i style="left:89px;top:422px;width:283px;height:2px;background:linear-gradient(90deg,#00c9ff 0%,#00c9ff 1.408%,#00c9ff 2.817%,#00c9ff 4.225%,#00c9ff 5.634%,#00c9ff 7.042%,#00c9ff 8.451%,#00c9ff 9.859%,#00c9ff 11.27%,#00c9ff 12.68%,#00c9ff 14.08%,#00c9ff 15.49%,#00c9ff 16.9%,#00c9ff 18.31%,#00c9ff 19.72%,#00c9ff 21.13%,#00c9ff 22.54%,#00c9ff 23.94%,#18c9ff 25.35%,#48c9ff 26.76%,#62c9ff 28.17%,#76c9ff 29.58%,#88c9ff 30.99%,#97c9ff 32.39%,#a6c9ff 33.8%,#b4c9ff 35.21%,#c1c9ff 36.62%,#cdc9ff 38.03%,#dac9ff 39.44%,#e6c8ff 40.85%,#f2c8ff 42.25%,#fec8ff 43.66%,#ffc0f5 45.07%,#ffb8ea 46.48%,#ffb0e0 47.89%,#ffa9d7 49.3%,#ffa2cf 50.7%,#ff9cc8 52.11%,#ff97c1 53.52%,#ff92ba 54.93%,#ff8db4 56.34%,#ff88ae 57.75%,#ff84a8 59.15%,#ff7fa3 60.56%,#ff7b9d 61.97%,#ff7798 63.38%,#ff7393 64.79%,#ff6f8e 66.2%,#ff6b8a 67.61%,#ff6885 69.01%,#ff6481 70.42%,#ff607c 71.83%,#ff5d78 73.24%,#ff5973 74.65%,#ff566f 76.06%,#ff536b 77.46%,#ff4f66 78.87%,#ff4c62 80.28%,#ff485e 81.69%,#ff455a 83.1%,#ff4155 84.51%,#ff3d51 85.92%,#ff3a4c 87.32%,#ff3648 88.73%,#ff3243 90.14%,#ff2e3e 91.55%,#ff2938 92.96%,#ff2432 94.37%,#ff1e2c 95.77%,#ff1624 97.18%,#ff091b 98.59%,#ff0007 100%)"></i><i style="left:89px;top:424px;width:279px;height:2px;background:linear-gradient(90deg,#00c7ff 0%,#00c7ff 1.429%,#00c7ff 2.857%,#00c7ff 4.286%,#00c7ff 5.714%,#00c7ff 7.143%,#00c7ff 8.571%,#00c7ff 10%,#00c7ff 11.43%,#00c7ff 12.86%,#00c7ff 14.29%,#00c7ff 15.71%,#00c7ff 17.14%,#00c7ff 18.57%,#00c6ff 20%,#00c6ff 21.43%,#00c6ff 22.86%,#00c6ff 24.29%,#20c6ff 25.71%,#4bc6ff 27.14%,#64c6ff 28.57%,#77c6ff 30%,#88c6ff 31.43%,#98c6ff 32.86%,#a6c6ff 34.29%,#b4c5ff 35.71%,#c1c5ff 37.14%,#cdc5ff 38.57%,#d9c5ff 40%,#e6c5ff 41.43%,#f1c5ff 42.86%,#fdc5ff 44.29%,#ffbdf5 45.71%,#ffb5eb 47.14%,#ffade1 48.57%,#ffa6d8 50%,#ffa0d0 51.43%,#ff9ac9 52.86%,#ff94c2 54.29%,#ff8fbb 55.71%,#ff8ab5 57.14%,#ff86af 58.57%,#ff81a9 60%,#ff7da4 61.43%,#ff799f 62.86%,#ff7499 64.29%,#ff7094 65.71%,#ff6d90 67.14%,#ff698b 68.57%,#ff6586 70%,#ff6182 71.43%,#ff5e7d 72.86%,#ff5a79 74.29%,#ff5775 75.71%,#ff5370 77.14%,#ff506c 78.57%,#ff4c68 80%,#ff4964 81.43%,#ff455f 82.86%,#ff415b 84.29%,#ff3e57 85.71%,#ff3a53 87.14%,#ff364e 88.57%,#ff324a 90%,#ff2e45 91.43%,#ff2940 92.86%,#ff243b 94.29%,#ff1d35 95.71%,#ff162f 97.14%,#ff0628 98.57%,#ff0020 100%)"></i><i style="left:90px;top:426px;width:273px;height:2px;background:linear-gradient(90deg,#00c5ff 0%,#00c5ff 1.471%,#00c5ff 2.941%,#00c5ff 4.412%,#00c5ff 5.882%,#00c5ff 7.353%,#00c5ff 8.824%,#00c5ff 10.29%,#00c4ff 11.76%,#00c4ff 13.24%,#00c4ff 14.71%,#00c4ff 16.18%,#00c4ff 17.65%,#00c4ff 19.12%,#00c4ff 20.59%,#00c4ff 22.06%,#00c4ff 23.53%,#00c4ff 25%,#39c3ff 26.47%,#57c3ff 27.94%,#6dc3ff 29.41%,#7fc3ff 30.88%,#8fc3ff 32.35%,#9ec3ff 33.82%,#acc2ff 35.29%,#b9c2ff 36.76%,#c6c2ff 38.24%,#d2c2ff 39.71%,#dfc2ff 41.18%,#eac1ff 42.65%,#f6c1ff 44.12%,#ffbffc 45.59%,#ffb6f1 47.06%,#ffaee7 48.53%,#ffa7de 50%,#ffa0d5 51.47%,#ff9acd 52.94%,#ff94c6 54.41%,#ff8fbf 55.88%,#ff8ab9 57.35%,#ff85b3 58.82%,#ff81ad 60.29%,#ff7ca7 61.76%,#ff78a2 63.24%,#ff749d 64.71%,#ff7098 66.18%,#ff6c93 67.65%,#ff688e 69.12%,#ff6489 70.59%,#ff6085 72.06%,#ff5c80 73.53%,#ff597c 75%,#ff5578 76.47%,#ff5273 77.94%,#ff4e6f 79.41%,#ff4a6b 80.88%,#ff4767 82.35%,#ff4362 83.82%,#ff3f5e 85.29%,#ff3b5a 86.76%,#ff3756 88.24%,#ff3351 89.71%,#ff2f4d 91.18%,#ff2a48 92.65%,#ff2544 94.12%,#ff1f3f 95.59%,#ff1739 97.06%,#ff0a34 98.53%,#ff002d 100%)"></i><i style="left:90px;top:428px;width:269px;height:2px;background:linear-gradient(90deg,#00c3ff 0%,#00c3ff 1.493%,#00c3ff 2.985%,#00c3ff 4.478%,#00c3ff 5.97%,#00c3ff 7.463%,#00c2ff 8.955%,#00c2ff 10.45%,#00c2ff 11.94%,#00c2ff 13.43%,#00c2ff 14.93%,#00c2ff 16.42%,#00c2ff 17.91%,#00c1ff 19.4%,#00c1ff 20.9%,#00c1ff 22.39%,#00c1ff 23.88%,#00c1ff 25.37%,#3cc1ff 26.87%,#59c0ff 28.36%,#6ec0ff 29.85%,#80c0ff 31.34%,#90c0ff 32.84%,#9fc0ff 34.33%,#acbfff 35.82%,#b9bfff 37.31%,#c6bfff 38.81%,#d2beff 40.3%,#debeff 41.79%,#eabeff 43.28%,#f6bdff 44.78%,#ffbbfd 46.27%,#ffb3f2 47.76%,#ffabe8 49.25%,#ffa4df 50.75%,#ff9dd6 52.24%,#ff97ce 53.73%,#ff92c7 55.22%,#ff8cc0 56.72%,#ff87ba 58.21%,#ff83b4 59.7%,#ff7eae 61.19%,#ff79a8 62.69%,#ff75a3 64.18%,#ff719e 65.67%,#ff6d99 67.16%,#ff6994 68.66%,#ff658f 70.15%,#ff618b 71.64%,#ff5d86 73.13%,#ff5a82 74.63%,#ff567d 76.12%,#ff5279 77.61%,#ff4f75 79.1%,#ff4b70 80.6%,#ff476c 82.09%,#ff4368 83.58%,#ff4064 85.07%,#ff3c60 86.57%,#ff385c 88.06%,#ff3357 89.55%,#ff2f53 91.04%,#ff2a4f 92.54%,#ff254a 94.03%,#ff1e46 95.52%,#ff1641 97.01%,#ff083c 98.51%,#ff0036 100%)"></i><i style="left:91px;top:430px;width:264px;height:2px;background:linear-gradient(90deg,#00c1ff 0%,#00c1ff 1.515%,#00c1ff 3.03%,#00c1ff 4.545%,#00c0ff 6.061%,#00c0ff 7.576%,#00c0ff 9.091%,#00c0ff 10.61%,#00c0ff 12.12%,#00c0ff 13.64%,#00bfff 15.15%,#00bfff 16.67%,#00bfff 18.18%,#00bfff 19.7%,#00bfff 21.21%,#00bfff 22.73%,#00beff 24.24%,#0abeff 25.76%,#45beff 27.27%,#5ebeff 28.79%,#72bdff 30.3%,#84bdff 31.82%,#93bdff 33.33%,#a1bcff 34.85%,#afbcff 36.36%,#bbbcff 37.88%,#c8bbff 39.39%,#d4bbff 40.91%,#dfbbff 42.42%,#ebbaff 43.94%,#f7baff 45.45%,#ffb7fc 46.97%,#ffaff1 48.48%,#ffa7e8 50%,#ffa0de 51.52%,#ff9ad6 53.03%,#ff94ce 54.55%,#ff8ec7 56.06%,#ff89c1 57.58%,#ff84ba 59.09%,#ff7fb4 60.61%,#ff7baf 62.12%,#ff76a9 63.64%,#ff72a4 65.15%,#ff6e9f 66.67%,#ff6a9a 68.18%,#ff6695 69.7%,#ff6290 71.21%,#ff5e8b 72.73%,#ff5a87 74.24%,#ff5683 75.76%,#ff537e 77.27%,#ff4f7a 78.79%,#ff4b76 80.3%,#ff4772 81.82%,#ff446d 83.33%,#ff4069 84.85%,#ff3c65 86.36%,#ff3861 87.88%,#ff335d 89.39%,#ff2f59 90.91%,#ff2a55 92.42%,#ff2450 93.94%,#ff1e4c 95.45%,#ff1647 96.97%,#ff0043 98.48%,#ff003e 100%)"></i><i style="left:91px;top:432px;width:260px;height:2px;background:linear-gradient(90deg,#00bfff 0%,#00bfff 1.538%,#00bfff 3.077%,#00beff 4.615%,#00beff 6.154%,#00beff 7.692%,#00beff 9.231%,#00beff 10.77%,#00bdff 12.31%,#00bdff 13.85%,#00bdff 15.38%,#00bdff 16.92%,#00bdff 18.46%,#00bcff 20%,#00bcff 21.54%,#00bcff 23.08%,#00bcff 24.62%,#18bbff 26.15%,#47bbff 27.69%,#60bbff 29.23%,#73baff 30.77%,#84baff 32.31%,#93baff 33.85%,#a1b9ff 35.38%,#afb9ff 36.92%,#bbb9ff 38.46%,#c8b8ff 40%,#d3b8ff 41.54%,#dfb7ff 43.08%,#ebb7ff 44.62%,#f6b6ff 46.15%,#ffb4fd 47.69%,#ffacf2 49.23%,#ffa4e8 50.77%,#ff9ddf 52.31%,#ff97d7 53.85%,#ff91cf 55.38%,#ff8bc8 56.92%,#ff86c2 58.46%,#ff81bb 60%,#ff7db5 61.54%,#ff78b0 63.08%,#ff74aa 64.62%,#ff6fa5 66.15%,#ff6ba0 67.69%,#ff679b 69.23%,#ff6396 70.77%,#ff5f91 72.31%,#ff5b8d 73.85%,#ff5788 75.38%,#ff5384 76.92%,#ff507f 78.46%,#ff4c7b 80%,#ff4877 81.54%,#ff4473 83.08%,#ff406f 84.62%,#ff3c6b 86.15%,#ff3867 87.69%,#ff3363 89.23%,#ff2f5e 90.77%,#ff2a5a 92.31%,#ff2456 93.85%,#ff1d52 95.38%,#ff154e 96.92%,#ff0049 98.46%,#ff0045 100%)"></i><i style="left:92px;top:434px;width:254px;height:2px;background:linear-gradient(90deg,#00bdff 0%,#00bdff 1.562%,#00bcff 3.125%,#00bcff 4.688%,#00bcff 6.25%,#00bcff 7.812%,#00bcff 9.375%,#00bbff 10.94%,#00bbff 12.5%,#00bbff 14.06%,#00bbff 15.62%,#00baff 17.19%,#00baff 18.75%,#00baff 20.31%,#00baff 21.88%,#00b9ff 23.44%,#00b9ff 25%,#27b9ff 26.56%,#4cb8ff 28.12%,#63b8ff 29.69%,#76b7ff 31.25%,#86b7ff 32.81%,#95b7ff 34.38%,#a3b6ff 35.94%,#b0b6ff 37.5%,#bcb5ff 39.06%,#c8b5ff 40.62%,#d4b4ff 42.19%,#dfb4ff 43.75%,#eab3ff 45.31%,#f5b2ff 46.88%,#ffb1fd 48.44%,#ffa9f3 50%,#ffa1e9 51.56%,#ff9be0 53.12%,#ff94d8 54.69%,#ff8ed0 56.25%,#ff89c9 57.81%,#ff84c3 59.38%,#ff7fbd 60.94%,#ff7ab7 62.5%,#ff75b1 64.06%,#ff71ac 65.62%,#ff6da6 67.19%,#ff69a1 68.75%,#ff649c 70.31%,#ff6098 71.88%,#ff5c93 73.44%,#ff598e 75%,#ff558a 76.56%,#ff5186 78.12%,#ff4d81 79.69%,#ff497d 81.25%,#ff4579 82.81%,#ff4175 84.38%,#ff3d71 85.94%,#ff396d 87.5%,#ff3469 89.06%,#ff3065 90.62%,#ff2b61 92.19%,#ff255d 93.75%,#ff1f59 95.31%,#ff1655 96.88%,#ff0451 98.44%,#ff004c 100%)"></i><i style="left:92px;top:436px;width:250px;height:2px;background:linear-gradient(90deg,#00bbff 0%,#00bbff 1.613%,#00baff 3.226%,#00baff 4.839%,#00baff 6.452%,#00baff 8.065%,#00b9ff 9.677%,#00b9ff 11.29%,#00b9ff 12.9%,#00b8ff 14.52%,#00b8ff 16.13%,#00b8ff 17.74%,#00b8ff 19.35%,#00b7ff 20.97%,#00b7ff 22.58%,#00b7ff 24.19%,#00b6ff 25.81%,#38b6ff 27.42%,#55b5ff 29.03%,#6bb5ff 30.65%,#7cb4ff 32.26%,#8cb4ff 33.87%,#9ab3ff 35.48%,#a8b3ff 37.1%,#b5b2ff 38.71%,#c1b2ff 40.32%,#cdb1ff 41.94%,#d8b1ff 43.55%,#e4b0ff 45.16%,#efafff 46.77%,#faaeff 48.39%,#ffaaf9 50%,#ffa2ef 51.61%,#ff9be5 53.23%,#ff94dd 54.84%,#ff8ed4 56.45%,#ff88cd 58.06%,#ff83c6 59.68%,#ff7ec0 61.29%,#ff79ba 62.9%,#ff74b4 64.52%,#ff70ae 66.13%,#ff6ba9 67.74%,#ff67a4 69.35%,#ff639f 70.97%,#ff5f9a 72.58%,#ff5a95 74.19%,#ff5691 75.81%,#ff528c 77.42%,#ff4e88 79.03%,#ff4a83 80.65%,#ff467f 82.26%,#ff427b 83.87%,#ff3e77 85.48%,#ff3a73 87.1%,#ff356f 88.71%,#ff306b 90.32%,#ff2b67 91.94%,#ff2563 93.55%,#ff1e5f 95.16%,#ff165a 96.77%,#ff0056 98.39%,#ff0052 100%)"></i><i style="left:93px;top:438px;width:245px;height:2px;background:linear-gradient(90deg,#00b9ff 0%,#00b8ff 1.639%,#00b8ff 3.279%,#00b8ff 4.918%,#00b8ff 6.557%,#00b7ff 8.197%,#00b7ff 9.836%,#00b7ff 11.48%,#00b6ff 13.11%,#00b6ff 14.75%,#00b6ff 16.39%,#00b5ff 18.03%,#00b5ff 19.67%,#00b5ff 21.31%,#00b4ff 22.95%,#00b4ff 24.59%,#00b3ff 26.23%,#41b3ff 27.87%,#5bb2ff 29.51%,#6fb2ff 31.15%,#80b1ff 32.79%,#8fb1ff 34.43%,#9db0ff 36.07%,#aab0ff 37.7%,#b6afff 39.34%,#c2aeff 40.98%,#ceaeff 42.62%,#daadff 44.26%,#e5acff 45.9%,#f0acff 47.54%,#fbabff 49.18%,#ffa5f8 50.82%,#ff9eee 52.46%,#ff97e5 54.1%,#ff90dd 55.74%,#ff8ad5 57.38%,#ff85cd 59.02%,#ff7fc7 60.66%,#ff7ac0 62.3%,#ff75ba 63.93%,#ff71b5 65.57%,#ff6caf 67.21%,#ff68aa 68.85%,#ff64a5 70.49%,#ff5fa0 72.13%,#ff5b9b 73.77%,#ff5796 75.41%,#ff5391 77.05%,#ff4f8d 78.69%,#ff4b89 80.33%,#ff4784 81.97%,#ff4280 83.61%,#ff3e7c 85.25%,#ff3a78 86.89%,#ff3574 88.52%,#ff3070 90.16%,#ff2b6c 91.8%,#ff2568 93.44%,#ff1e64 95.08%,#ff1560 96.72%,#ff005c 98.36%,#ff0058 100%)"></i><i style="left:93px;top:440px;width:240px;height:2px;background:linear-gradient(90deg,#00b7ff 0%,#00b6ff 1.667%,#00b6ff 3.333%,#00b6ff 5%,#00b5ff 6.667%,#00b5ff 8.333%,#00b5ff 10%,#00b4ff 11.67%,#00b4ff 13.33%,#00b4ff 15%,#00b3ff 16.67%,#00b3ff 18.33%,#00b2ff 20%,#00b2ff 21.67%,#00b2ff 23.33%,#00b1ff 25%,#00b1ff 26.67%,#41b0ff 28.33%,#5bb0ff 30%,#6eafff 31.67%,#7fafff 33.33%,#8eaeff 35%,#9cadff 36.67%,#a9adff 38.33%,#b5acff 40%,#c1abff 41.67%,#cdabff 43.33%,#d8aaff 45%,#e3a9ff 46.67%,#eea8ff 48.33%,#f9a7ff 50%,#ffa3fa 51.67%,#ff9cf0 53.33%,#ff95e7 55%,#ff8edf 56.67%,#ff88d7 58.33%,#ff82cf 60%,#ff7dc9 61.67%,#ff78c2 63.33%,#ff73bc 65%,#ff6fb7 66.67%,#ff6ab1 68.33%,#ff65ac 70%,#ff61a6 71.67%,#ff5da1 73.33%,#ff599d 75%,#ff5498 76.67%,#ff5093 78.33%,#ff4c8f 80%,#ff488b 81.67%,#ff4486 83.33%,#ff3f82 85%,#ff3b7e 86.67%,#ff367a 88.33%,#ff3176 90%,#ff2c72 91.67%,#ff266e 93.33%,#ff1f6a 95%,#ff1666 96.67%,#ff0062 98.33%,#ff005e 100%)"></i><i style="left:94px;top:442px;width:235px;height:2px;background:linear-gradient(90deg,#00b4ff 0%,#00b4ff 1.695%,#00b4ff 3.39%,#00b3ff 5.085%,#00b3ff 6.78%,#00b3ff 8.475%,#00b2ff 10.17%,#00b2ff 11.86%,#00b2ff 13.56%,#00b1ff 15.25%,#00b1ff 16.95%,#00b0ff 18.64%,#00b0ff 20.34%,#00afff 22.03%,#00afff 23.73%,#00aeff 25.42%,#22aeff 27.12%,#49adff 28.81%,#60adff 30.51%,#72acff 32.2%,#82acff 33.9%,#91abff 35.59%,#9eaaff 37.29%,#aba9ff 38.98%,#b7a9ff 40.68%,#c3a8ff 42.37%,#cea7ff 44.07%,#d9a6ff 45.76%,#e4a5ff 47.46%,#efa4ff 49.15%,#f9a3ff 50.85%,#ff9ffa 52.54%,#ff98f0 54.24%,#ff91e7 55.93%,#ff8adf 57.63%,#ff84d7 59.32%,#ff7fd0 61.02%,#ff79c9 62.71%,#ff75c3 64.41%,#ff70bd 66.1%,#ff6bb7 67.8%,#ff66b2 69.49%,#ff62ac 71.19%,#ff5ea7 72.88%,#ff59a2 74.58%,#ff559d 76.27%,#ff5199 77.97%,#ff4c94 79.66%,#ff4890 81.36%,#ff448b 83.05%,#ff3f87 84.75%,#ff3b83 86.44%,#ff367f 88.14%,#ff317b 89.83%,#ff2c77 91.53%,#ff2673 93.22%,#ff1f6f 94.92%,#ff156b 96.61%,#ff0068 98.31%,#ff0064 100%)"></i><i style="left:94px;top:444px;width:231px;height:2px;background:linear-gradient(90deg,#00b2ff 0%,#00b2ff 1.724%,#00b2ff 3.448%,#00b1ff 5.172%,#00b1ff 6.897%,#00b0ff 8.621%,#00b0ff 10.34%,#00b0ff 12.07%,#00afff 13.79%,#00afff 15.52%,#00aeff 17.24%,#00aeff 18.97%,#00adff 20.69%,#00adff 22.41%,#00acff 24.14%,#00acff 25.86%,#27abff 27.59%,#4babff 29.31%,#61aaff 31.03%,#73a9ff 32.76%,#83a9ff 34.48%,#91a8ff 36.21%,#9fa7ff 37.93%,#aba6ff 39.66%,#b7a5ff 41.38%,#c3a5ff 43.1%,#cea4ff 44.83%,#d9a3ff 46.55%,#e4a2ff 48.28%,#eea1ff 50%,#f99fff 51.72%,#ff9cfb 53.45%,#ff94f1 55.17%,#ff8de8 56.9%,#ff87df 58.62%,#ff81d8 60.34%,#ff7cd1 62.07%,#ff76ca 63.79%,#ff71c4 65.52%,#ff6dbe 67.24%,#ff68b8 68.97%,#ff63b3 70.69%,#ff5fad 72.41%,#ff5aa8 74.14%,#ff56a3 75.86%,#ff519e 77.59%,#ff4d9a 79.31%,#ff4995 81.03%,#ff4491 82.76%,#ff408d 84.48%,#ff3b88 86.21%,#ff3684 87.93%,#ff3180 89.66%,#ff2c7c 91.38%,#ff2578 93.1%,#ff1e74 94.83%,#ff1471 96.55%,#ff006d 98.28%,#ff0069 100%)"></i><i style="left:95px;top:446px;width:225px;height:2px;background:linear-gradient(90deg,#00b0ff 0%,#00b0ff 1.786%,#00afff 3.571%,#00afff 5.357%,#00aeff 7.143%,#00aeff 8.929%,#00aeff 10.71%,#00adff 12.5%,#00adff 14.29%,#00acff 16.07%,#00acff 17.86%,#00abff 19.64%,#00abff 21.43%,#00aaff 23.21%,#00aaff 25%,#00a9ff 26.79%,#3ba8ff 28.57%,#56a8ff 30.36%,#6aa7ff 32.14%,#7ba6ff 33.93%,#8aa5ff 35.71%,#98a4ff 37.5%,#a5a4ff 39.29%,#b1a3ff 41.07%,#bca2ff 42.86%,#c8a1ff 44.64%,#d3a0ff 46.43%,#de9fff 48.21%,#e89dff 50%,#f39cff 51.79%,#fe9bff 53.57%,#ff94f6 55.36%,#ff8ded 57.14%,#ff87e4 58.93%,#ff80dc 60.71%,#ff7bd4 62.5%,#ff75ce 64.29%,#ff70c7 66.07%,#ff6bc1 67.86%,#ff66bb 69.64%,#ff62b6 71.43%,#ff5db0 73.21%,#ff58ab 75%,#ff54a6 76.79%,#ff4fa1 78.57%,#ff4b9c 80.36%,#ff4698 82.14%,#ff4293 83.93%,#ff3d8f 85.71%,#ff388b 87.5%,#ff3387 89.29%,#ff2d83 91.07%,#ff277f 92.86%,#ff207b 94.64%,#ff1677 96.43%,#ff0073 98.21%,#ff006f 100%)"></i><i style="left:95px;top:448px;width:221px;height:2px;background:linear-gradient(90deg,#00aeff 0%,#00aeff 1.818%,#00adff 3.636%,#00adff 5.455%,#00acff 7.273%,#00acff 9.091%,#00abff 10.91%,#00abff 12.73%,#00aaff 14.55%,#00aaff 16.36%,#00a9ff 18.18%,#00a9ff 20%,#00a8ff 21.82%,#00a7ff 23.64%,#00a7ff 25.45%,#00a6ff 27.27%,#3ea6ff 29.09%,#58a5ff 30.91%,#6ba4ff 32.73%,#7ca3ff 34.55%,#8aa2ff 36.36%,#98a1ff 38.18%,#a5a0ff 40%,#b19fff 41.82%,#bc9eff 43.64%,#c89dff 45.45%,#d39cff 47.27%,#dd9bff 49.09%,#e89aff 50.91%,#f298ff 52.73%,#fd97ff 54.55%,#ff91f7 56.36%,#ff8aee 58.18%,#ff83e5 60%,#ff7ddd 61.82%,#ff77d5 63.64%,#ff72cf 65.45%,#ff6dc8 67.27%,#ff68c2 69.09%,#ff63bc 70.91%,#ff5eb7 72.73%,#ff59b1 74.55%,#ff55ac 76.36%,#ff50a7 78.18%,#ff4ca2 80%,#ff479d 81.82%,#ff4299 83.64%,#ff3d94 85.45%,#ff3890 87.27%,#ff338c 89.09%,#ff2d88 90.91%,#ff2784 92.73%,#ff1f80 94.55%,#ff157c 96.36%,#ff0078 98.18%,#ff0074 100%)"></i><i style="left:96px;top:450px;width:216px;height:2px;background:linear-gradient(90deg,#00acff 0%,#00abff 1.852%,#00abff 3.704%,#00aaff 5.556%,#00aaff 7.407%,#00a9ff 9.259%,#00a9ff 11.11%,#00a8ff 12.96%,#00a8ff 14.81%,#00a7ff 16.67%,#00a7ff 18.52%,#00a6ff 20.37%,#00a5ff 22.22%,#00a5ff 24.07%,#00a4ff 25.93%,#1ba3ff 27.78%,#45a3ff 29.63%,#5da2ff 31.48%,#6fa1ff 33.33%,#7fa0ff 35.19%,#8d9fff 37.04%,#9a9eff 38.89%,#a79dff 40.74%,#b39cff 42.59%,#be9bff 44.44%,#c99aff 46.3%,#d499ff 48.15%,#de97ff 50%,#e996ff 51.85%,#f394ff 53.7%,#fd93ff 55.56%,#ff8df7 57.41%,#ff86ed 59.26%,#ff7fe5 61.11%,#ff79dd 62.96%,#ff73d6 64.81%,#ff6ecf 66.67%,#ff69c9 68.52%,#ff64c2 70.37%,#ff5fbd 72.22%,#ff5ab7 74.07%,#ff55b2 75.93%,#ff51ad 77.78%,#ff4ca8 79.63%,#ff47a3 81.48%,#ff429e 83.33%,#ff3d9a 85.19%,#ff3895 87.04%,#ff3391 88.89%,#ff2d8d 90.74%,#ff2689 92.59%,#ff1f85 94.44%,#ff1481 96.3%,#ff007d 98.15%,#ff0079 100%)"></i><i style="left:96px;top:452px;width:212px;height:2px;background:linear-gradient(90deg,#00aaff 0%,#00a9ff 1.887%,#00a9ff 3.774%,#00a8ff 5.66%,#00a8ff 7.547%,#00a7ff 9.434%,#00a7ff 11.32%,#00a6ff 13.21%,#00a5ff 15.09%,#00a5ff 16.98%,#00a4ff 18.87%,#00a4ff 20.75%,#00a3ff 22.64%,#00a2ff 24.53%,#00a1ff 26.42%,#21a1ff 28.3%,#47a0ff 30.19%,#5e9fff 32.08%,#709eff 33.96%,#809dff 35.85%,#8e9cff 37.74%,#9b9bff 39.62%,#a79aff 41.51%,#b399ff 43.4%,#be98ff 45.28%,#c996ff 47.17%,#d395ff 49.06%,#de94ff 50.94%,#e892ff 52.83%,#f291ff 54.72%,#fd8fff 56.6%,#ff89f7 58.49%,#ff82ee 60.38%,#ff7ce6 62.26%,#ff76de 64.15%,#ff70d6 66.04%,#ff6bd0 67.92%,#ff65c9 69.81%,#ff60c3 71.7%,#ff5bbe 73.58%,#ff56b8 75.47%,#ff52b3 77.36%,#ff4dae 79.25%,#ff48a9 81.13%,#ff43a4 83.02%,#ff3e9f 84.91%,#ff399b 86.79%,#ff3396 88.68%,#ff2d92 90.57%,#ff268e 92.45%,#ff1e8a 94.34%,#ff1386 96.23%,#ff0082 98.11%,#ff007e 100%)"></i><i style="left:97px;top:454px;width:206px;height:2px;background:linear-gradient(90deg,#00a7ff 0%,#00a7ff 1.923%,#00a6ff 3.846%,#00a6ff 5.769%,#00a5ff 7.692%,#00a5ff 9.615%,#00a4ff 11.54%,#00a4ff 13.46%,#00a3ff 15.38%,#00a2ff 17.31%,#00a2ff 19.23%,#00a1ff 21.15%,#00a0ff 23.08%,#009fff 25%,#009fff 26.92%,#2b9eff 28.85%,#4b9dff 30.77%,#619cff 32.69%,#729bff 34.62%,#819aff 36.54%,#8f99ff 38.46%,#9c98ff 40.38%,#a897ff 42.31%,#b396ff 44.23%,#be94ff 46.15%,#c993ff 48.08%,#d391ff 50%,#dd90ff 51.92%,#e88eff 53.85%,#f28dff 55.77%,#fc8bff 57.69%,#ff86f9 59.62%,#ff7ff0 61.54%,#ff79e7 63.46%,#ff72df 65.38%,#ff6dd8 67.31%,#ff67d1 69.23%,#ff62cb 71.15%,#ff5dc5 73.08%,#ff58bf 75%,#ff53ba 76.92%,#ff4eb4 78.85%,#ff49af 80.77%,#ff44aa 82.69%,#ff3fa6 84.62%,#ff3aa1 86.54%,#ff349d 88.46%,#ff2e98 90.38%,#ff2794 92.31%,#ff2090 94.23%,#ff158c 96.15%,#ff0088 98.08%,#ff0084 100%)"></i><i style="left:98px;top:456px;width:201px;height:2px;background:linear-gradient(90deg,#00a5ff 0%,#00a5ff 2%,#00a4ff 4%,#00a3ff 6%,#00a3ff 8%,#00a2ff 10%,#00a2ff 12%,#00a1ff 14%,#00a0ff 16%,#00a0ff 18%,#009fff 20%,#009eff 22%,#009dff 24%,#009cff 26%,#009cff 28%,#3f9bff 30%,#589aff 32%,#6b99ff 34%,#7b98ff 36%,#8996ff 38%,#9695ff 40%,#a394ff 42%,#ae93ff 44%,#b991ff 46%,#c490ff 48%,#cf8eff 50%,#d98dff 52%,#e48bff 54%,#ee89ff 56%,#f888ff 58%,#ff84fc 60%,#ff7df3 62%,#ff77ea 64%,#ff70e2 66%,#ff6ada 68%,#ff65d4 70%,#ff5fcd 72%,#ff5ac7 74%,#ff55c1 76%,#ff50bc 78%,#ff4bb6 80%,#ff45b1 82%,#ff40ac 84%,#ff3ba7 86%,#ff35a3 88%,#ff2f9e 90%,#ff289a 92%,#ff1f95 94%,#ff1491 96%,#ff008d 98%,#ff0089 100%)"></i><i style="left:98px;top:458px;width:197px;height:2px;background:linear-gradient(90deg,#00a3ff 0%,#00a2ff 2.041%,#00a2ff 4.082%,#00a1ff 6.122%,#00a1ff 8.163%,#00a0ff 10.2%,#009fff 12.24%,#009eff 14.29%,#009eff 16.33%,#009dff 18.37%,#009cff 20.41%,#009bff 22.45%,#009bff 24.49%,#009aff 26.53%,#1299ff 28.57%,#4298ff 30.61%,#5997ff 32.65%,#6c96ff 34.69%,#7c95ff 36.73%,#8a93ff 38.78%,#9792ff 40.82%,#a391ff 42.86%,#ae8fff 44.9%,#b98eff 46.94%,#c48cff 48.98%,#cf8bff 51.02%,#d989ff 53.06%,#e387ff 55.1%,#ed85ff 57.14%,#f783ff 59.18%,#ff80fd 61.22%,#ff79f4 63.27%,#ff73eb 65.31%,#ff6ce3 67.35%,#ff66db 69.39%,#ff61d4 71.43%,#ff5bce 73.47%,#ff56c8 75.51%,#ff51c2 77.55%,#ff4bbc 79.59%,#ff46b7 81.63%,#ff41b2 83.67%,#ff3bad 85.71%,#ff35a8 87.76%,#ff2fa3 89.8%,#ff279f 91.84%,#ff1f9b 93.88%,#ff1296 95.92%,#ff0092 97.96%,#ff008e 100%)"></i><i style="left:99px;top:460px;width:191px;height:2px;background:linear-gradient(90deg,#00a1ff 0%,#00a0ff 2.083%,#009fff 4.167%,#009fff 6.25%,#009eff 8.333%,#009dff 10.42%,#009dff 12.5%,#009cff 14.58%,#009bff 16.67%,#009aff 18.75%,#009aff 20.83%,#0099ff 22.92%,#0098ff 25%,#0097ff 27.08%,#2296ff 29.17%,#4695ff 31.25%,#5c94ff 33.33%,#6e93ff 35.42%,#7d91ff 37.5%,#8b90ff 39.58%,#978fff 41.67%,#a38dff 43.75%,#af8cff 45.83%,#ba8bff 47.92%,#c489ff 50%,#ce87ff 52.08%,#d985ff 54.17%,#e384ff 56.25%,#ec82ff 58.33%,#f67fff 60.42%,#ff7dfe 62.5%,#ff76f5 64.58%,#ff6fec 66.67%,#ff69e4 68.75%,#ff63dd 70.83%,#ff5dd6 72.92%,#ff58d0 75%,#ff52c9 77.08%,#ff4dc4 79.17%,#ff48be 81.25%,#ff42b9 83.33%,#ff3cb4 85.42%,#ff36af 87.5%,#ff30aa 89.58%,#ff29a5 91.67%,#ff20a1 93.75%,#ff159c 95.83%,#ff0098 97.92%,#ff0094 100%)"></i><i style="left:100px;top:462px;width:186px;height:2px;background:linear-gradient(90deg,#009eff 0%,#009eff 2.174%,#009dff 4.348%,#009cff 6.522%,#009cff 8.696%,#009bff 10.87%,#009aff 13.04%,#0099ff 15.22%,#0098ff 17.39%,#0098ff 19.57%,#0097ff 21.74%,#0096ff 23.91%,#0095ff 26.09%,#0094ff 28.26%,#3993ff 30.43%,#5391ff 32.61%,#6790ff 34.78%,#778fff 36.96%,#858eff 39.13%,#928cff 41.3%,#9f8bff 43.48%,#aa89ff 45.65%,#b588ff 47.83%,#c086ff 50%,#cb84ff 52.17%,#d582ff 54.35%,#df80ff 56.52%,#e97eff 58.7%,#f37cff 60.87%,#fc79ff 63.04%,#ff74f8 65.22%,#ff6def 67.39%,#ff66e7 69.57%,#ff60df 71.74%,#ff5ad8 73.91%,#ff54d2 76.09%,#ff4fcb 78.26%,#ff49c5 80.43%,#ff43c0 82.61%,#ff3dba 84.78%,#ff37b5 86.96%,#ff30b0 89.13%,#ff29ab 91.3%,#ff20a6 93.48%,#ff14a2 95.65%,#ff009e 97.83%,#ff0099 100%)"></i><i style="left:100px;top:464px;width:182px;height:2px;background:linear-gradient(90deg,#009cff 0%,#009bff 2.174%,#009bff 4.348%,#009aff 6.522%,#0099ff 8.696%,#0099ff 10.87%,#0098ff 13.04%,#0097ff 15.22%,#0096ff 17.39%,#0095ff 19.57%,#0094ff 21.74%,#0093ff 23.91%,#0092ff 26.09%,#0091ff 28.26%,#3290ff 30.43%,#4e8fff 32.61%,#628eff 34.78%,#728cff 36.96%,#808bff 39.13%,#8e8aff 41.3%,#9a88ff 43.48%,#a587ff 45.65%,#b085ff 47.83%,#bb83ff 50%,#c581ff 52.17%,#cf80ff 54.35%,#d97eff 56.52%,#e37bff 58.7%,#ec79ff 60.87%,#f677ff 63.04%,#ff74ff 65.22%,#ff6df6 67.39%,#ff66ed 69.57%,#ff60e5 71.74%,#ff5ade 73.91%,#ff54d7 76.09%,#ff4ed1 78.26%,#ff49cb 80.43%,#ff43c5 82.61%,#ff3dc0 84.78%,#ff37ba 86.96%,#ff30b5 89.13%,#ff28b0 91.3%,#ff1fac 93.48%,#ff11a7 95.65%,#ff00a3 97.83%,#ff009e 100%)"></i><i style="left:101px;top:466px;width:176px;height:2px;background:linear-gradient(90deg,#009aff 0%,#0099ff 2.273%,#0098ff 4.545%,#0098ff 6.818%,#0097ff 9.091%,#0096ff 11.36%,#0095ff 13.64%,#0094ff 15.91%,#0093ff 18.18%,#0092ff 20.45%,#0091ff 22.73%,#0090ff 25%,#008fff 27.27%,#148eff 29.55%,#418dff 31.82%,#588cff 34.09%,#6a8aff 36.36%,#7989ff 38.64%,#8787ff 40.91%,#9486ff 43.18%,#9f84ff 45.45%,#ab82ff 47.73%,#b581ff 50%,#c07fff 52.27%,#ca7dff 54.55%,#d47bff 56.82%,#de78ff 59.09%,#e776ff 61.36%,#f173ff 63.64%,#fb71ff 65.91%,#ff6cfa 68.18%,#ff65f1 70.45%,#ff5ee9 72.73%,#ff58e1 75%,#ff52da 77.27%,#ff4cd4 79.55%,#ff46ce 81.82%,#ff3fc8 84.09%,#ff39c2 86.36%,#ff32bd 88.64%,#ff2ab8 90.91%,#ff21b3 93.18%,#ff15ae 95.45%,#ff00a9 97.73%,#ff00a5 100%)"></i><i style="left:102px;top:468px;width:171px;height:2px;background:linear-gradient(90deg,#0097ff 0%,#0097ff 2.326%,#0096ff 4.651%,#0095ff 6.977%,#0094ff 9.302%,#0093ff 11.63%,#0092ff 13.95%,#0091ff 16.28%,#0090ff 18.6%,#008fff 20.93%,#008eff 23.26%,#008dff 25.58%,#008cff 27.91%,#268bff 30.23%,#478aff 32.56%,#5c88ff 34.88%,#6d87ff 37.21%,#7c85ff 39.53%,#8984ff 41.86%,#9682ff 44.19%,#a181ff 46.51%,#ac7fff 48.84%,#b77dff 51.16%,#c17bff 53.49%,#cb79ff 55.81%,#d576ff 58.14%,#de74ff 60.47%,#e871ff 62.79%,#f16fff 65.12%,#fb6cff 67.44%,#ff66fa 69.77%,#ff60f1 72.09%,#ff59e9 74.42%,#ff52e2 76.74%,#ff4cdb 79.07%,#ff46d4 81.4%,#ff40ce 83.72%,#ff39c9 86.05%,#ff32c3 88.37%,#ff2abe 90.7%,#ff20b9 93.02%,#ff13b4 95.35%,#ff00af 97.67%,#ff00aa 100%)"></i><i style="left:102px;top:470px;width:167px;height:2px;background:linear-gradient(90deg,#0095ff 0%,#0094ff 2.381%,#0093ff 4.762%,#0093ff 7.143%,#0092ff 9.524%,#0091ff 11.9%,#0090ff 14.29%,#008fff 16.67%,#008eff 19.05%,#008dff 21.43%,#008cff 23.81%,#008bff 26.19%,#0089ff 28.57%,#2a88ff 30.95%,#4987ff 33.33%,#5d85ff 35.71%,#6e84ff 38.1%,#7d82ff 40.48%,#8a81ff 42.86%,#967fff 45.24%,#a17dff 47.62%,#ac7bff 50%,#b779ff 52.38%,#c177ff 54.76%,#cb75ff 57.14%,#d472ff 59.52%,#de70ff 61.9%,#e76dff 64.29%,#f16aff 66.67%,#fa67ff 69.05%,#ff62fb 71.43%,#ff5bf2 73.81%,#ff54ea 76.19%,#ff4de2 78.57%,#ff47dc 80.95%,#ff40d5 83.33%,#ff39cf 85.71%,#ff32c9 88.1%,#ff2ac4 90.48%,#ff20bf 92.86%,#ff11b9 95.24%,#ff00b5 97.62%,#ff00b0 100%)"></i><i style="left:103px;top:472px;width:161px;height:2px;background:linear-gradient(90deg,#0093ff 0%,#0092ff 2.5%,#0091ff 5%,#0090ff 7.5%,#008fff 10%,#008eff 12.5%,#008dff 15%,#008cff 17.5%,#008bff 20%,#008aff 22.5%,#0089ff 25%,#0087ff 27.5%,#0086ff 30%,#3b85ff 32.5%,#5483ff 35%,#6682ff 37.5%,#7680ff 40%,#837eff 42.5%,#907cff 45%,#9c7bff 47.5%,#a779ff 50%,#b276ff 52.5%,#bc74ff 55%,#c672ff 57.5%,#d06fff 60%,#d96dff 62.5%,#e36aff 65%,#ec67ff 67.5%,#f663ff 70%,#ff5fff 72.5%,#ff58f6 75%,#ff51ee 77.5%,#ff4ae6 80%,#ff43df 82.5%,#ff3cd8 85%,#ff34d2 87.5%,#ff2ccc 90%,#ff22c6 92.5%,#ff15c1 95%,#ff00bc 97.5%,#ff00b7 100%)"></i><i style="left:104px;top:474px;width:156px;height:2px;background:linear-gradient(90deg,#0090ff 0%,#008fff 2.564%,#008eff 5.128%,#008dff 7.692%,#008cff 10.26%,#008bff 12.82%,#008aff 15.38%,#0089ff 17.95%,#0088ff 20.51%,#0087ff 23.08%,#0086ff 25.64%,#0084ff 28.21%,#1c83ff 30.77%,#4281ff 33.33%,#5880ff 35.9%,#6a7eff 38.46%,#787cff 41.03%,#867bff 43.59%,#9279ff 46.15%,#9d77ff 48.72%,#a875ff 51.28%,#b372ff 53.85%,#bd70ff 56.41%,#c76dff 58.97%,#d16bff 61.54%,#da68ff 64.1%,#e365ff 66.67%,#ed61ff 69.23%,#f65eff 71.79%,#ff5aff 74.36%,#ff52f6 76.92%,#ff4bee 79.49%,#ff44e6 82.05%,#ff3cdf 84.62%,#ff34d9 87.18%,#ff2cd3 89.74%,#ff22cd 92.31%,#ff12c7 94.87%,#ff00c2 97.44%,#ff00bc 100%)"></i><i style="left:105px;top:476px;width:151px;height:2px;background:linear-gradient(90deg,#008eff 0%,#008dff 2.632%,#008cff 5.263%,#008bff 7.895%,#008aff 10.53%,#0089ff 13.16%,#0087ff 15.79%,#0086ff 18.42%,#0085ff 21.05%,#0084ff 23.68%,#0082ff 26.32%,#0081ff 28.95%,#2a80ff 31.58%,#487eff 34.21%,#5c7cff 36.84%,#6d7bff 39.47%,#7b79ff 42.11%,#8877ff 44.74%,#9475ff 47.37%,#9f73ff 50%,#aa71ff 52.63%,#b46eff 55.26%,#be6cff 57.89%,#c869ff 60.53%,#d166ff 63.16%,#db63ff 65.79%,#e460ff 68.42%,#ed5cff 71.05%,#f658ff 73.68%,#ff54ff 76.32%,#ff4cf6 78.95%,#ff44ee 81.58%,#ff3ce7 84.21%,#ff34e0 86.84%,#ff2bd9 89.47%,#ff21d3 92.11%,#ff10cd 94.74%,#ff00c8 97.37%,#ff00c2 100%)"></i><i style="left:105px;top:478px;width:147px;height:2px;background:linear-gradient(90deg,#008bff 0%,#008aff 2.703%,#0089ff 5.405%,#0088ff 8.108%,#0087ff 10.81%,#0086ff 13.51%,#0085ff 16.22%,#0084ff 18.92%,#0082ff 21.62%,#0081ff 24.32%,#0080ff 27.03%,#007eff 29.73%,#2d7dff 32.43%,#4a7bff 35.14%,#5d79ff 37.84%,#6e77ff 40.54%,#7c76ff 43.24%,#8874ff 45.95%,#9471ff 48.65%,#9f6fff 51.35%,#aa6dff 54.05%,#b46aff 56.76%,#be68ff 59.46%,#c865ff 62.16%,#d162ff 64.86%,#da5eff 67.57%,#e35bff 70.27%,#ec57ff 72.97%,#f552ff 75.68%,#fe4dff 78.38%,#ff46f7 81.08%,#ff3def 83.78%,#ff35e7 86.49%,#ff2be0 89.19%,#ff20da 91.89%,#ff0dd4 94.59%,#ff00ce 97.3%,#ff00c9 100%)"></i><i style="left:106px;top:480px;width:141px;height:2px;background:linear-gradient(90deg,#0089ff 0%,#0088ff 2.857%,#0087ff 5.714%,#0085ff 8.571%,#0084ff 11.43%,#0083ff 14.29%,#0082ff 17.14%,#0080ff 20%,#007fff 22.86%,#007eff 25.71%,#007cff 28.57%,#097bff 31.43%,#3d79ff 34.29%,#5477ff 37.14%,#6675ff 40%,#7573ff 42.86%,#8271ff 45.71%,#8f6fff 48.57%,#9a6dff 51.43%,#a56aff 54.29%,#af67ff 57.14%,#b965ff 60%,#c362ff 62.86%,#cd5eff 65.71%,#d65bff 68.57%,#df57ff 71.43%,#e853ff 74.29%,#f14eff 77.14%,#fa49ff 80%,#ff41fb 82.86%,#ff38f2 85.71%,#ff2fea 88.57%,#ff23e3 91.43%,#ff12dd 94.29%,#ff00d6 97.14%,#ff00d0 100%)"></i><i style="left:107px;top:482px;width:136px;height:2px;background:linear-gradient(90deg,#0086ff 0%,#0085ff 2.941%,#0084ff 5.882%,#0083ff 8.824%,#0081ff 11.76%,#0080ff 14.71%,#007fff 17.65%,#007dff 20.59%,#007cff 23.53%,#007aff 26.47%,#0079ff 29.41%,#2177ff 32.35%,#4375ff 35.29%,#5874ff 38.24%,#6972ff 41.18%,#7870ff 44.12%,#856dff 47.06%,#906bff 50%,#9c68ff 52.94%,#a666ff 55.88%,#b163ff 58.82%,#ba60ff 61.76%,#c45dff 64.71%,#cd59ff 67.65%,#d755ff 70.59%,#e051ff 73.53%,#e94cff 76.47%,#f147ff 79.41%,#fa41ff 82.35%,#ff39fb 85.29%,#ff2ff3 88.24%,#ff23eb 91.18%,#ff0fe4 94.12%,#ff00dd 97.06%,#ff00d7 100%)"></i><i style="left:108px;top:484px;width:131px;height:2px;background:linear-gradient(90deg,#0083ff 0%,#0082ff 3.03%,#0081ff 6.061%,#0080ff 9.091%,#007eff 12.12%,#007dff 15.15%,#007cff 18.18%,#007aff 21.21%,#0079ff 24.24%,#0077ff 27.27%,#0076ff 30.3%,#2d74ff 33.33%,#4972ff 36.36%,#5c70ff 39.39%,#6c6eff 42.42%,#7a6cff 45.45%,#8769ff 48.48%,#9267ff 51.52%,#9d64ff 54.55%,#a861ff 57.58%,#b25eff 60.61%,#bb5bff 63.64%,#c558ff 66.67%,#ce54ff 69.7%,#d74fff 72.73%,#e04bff 75.76%,#e946ff 78.79%,#f140ff 81.82%,#fa38ff 84.85%,#ff2ffb 87.88%,#ff22f3 90.91%,#ff0cec 93.94%,#ff00e4 96.97%,#ff00de 100%)"></i><i style="left:109px;top:486px;width:125px;height:2px;background:linear-gradient(90deg,#0081ff 0%,#007fff 3.226%,#007eff 6.452%,#007dff 9.677%,#007bff 12.9%,#007aff 16.13%,#0078ff 19.35%,#0077ff 22.58%,#0075ff 25.81%,#0074ff 29.03%,#0b72ff 32.26%,#3d70ff 35.48%,#536eff 38.71%,#656cff 41.94%,#7469ff 45.16%,#8167ff 48.39%,#8d64ff 51.61%,#9861ff 54.84%,#a35eff 58.06%,#ad5bff 61.29%,#b758ff 64.52%,#c154ff 67.74%,#ca50ff 70.97%,#d34bff 74.19%,#dc46ff 77.42%,#e541ff 80.65%,#ee3aff 83.87%,#f732ff 87.1%,#ff27ff 90.32%,#ff14f6 93.55%,#ff00ee 96.77%,#ff00e7 100%)"></i><i style="left:110px;top:488px;width:120px;height:2px;background:linear-gradient(90deg,#007eff 0%,#007dff 3.333%,#007bff 6.667%,#007aff 10%,#0078ff 13.33%,#0077ff 16.67%,#0075ff 20%,#0074ff 23.33%,#0072ff 26.67%,#0070ff 30%,#216eff 33.33%,#436cff 36.67%,#586aff 40%,#6868ff 43.33%,#7665ff 46.67%,#8363ff 50%,#8f60ff 53.33%,#9a5dff 56.67%,#a45aff 60%,#ae56ff 63.33%,#b853ff 66.67%,#c14eff 70%,#ca4aff 73.33%,#d345ff 76.67%,#dc3fff 80%,#e538ff 83.33%,#ee30ff 86.67%,#f625ff 90%,#ff13ff 93.33%,#ff00f7 96.67%,#ff00ef 100%)"></i><i style="left:110px;top:490px;width:116px;height:2px;background:linear-gradient(90deg,#007bff 0%,#007aff 3.448%,#0079ff 6.897%,#0077ff 10.34%,#0076ff 13.79%,#0074ff 17.24%,#0072ff 20.69%,#0071ff 24.14%,#006fff 27.59%,#006dff 31.03%,#226bff 34.48%,#4369ff 37.93%,#5867ff 41.38%,#6864ff 44.83%,#7662ff 48.28%,#835fff 51.72%,#8f5cff 55.17%,#9a59ff 58.62%,#a455ff 62.07%,#ae52ff 65.52%,#b84dff 68.97%,#c149ff 72.41%,#ca44ff 75.86%,#d33eff 79.31%,#dc38ff 82.76%,#e52fff 86.21%,#ed25ff 89.66%,#f612ff 93.1%,#fe00ff 96.55%,#ff00f7 100%)"></i><i style="left:111px;top:492px;width:110px;height:2px;background:linear-gradient(90deg,#0079ff 0%,#0077ff 3.571%,#0076ff 7.143%,#0074ff 10.71%,#0073ff 14.29%,#0071ff 17.86%,#006fff 21.43%,#006eff 25%,#006cff 28.57%,#006aff 32.14%,#2568ff 35.71%,#4466ff 39.29%,#5863ff 42.86%,#6861ff 46.43%,#765eff 50%,#825bff 53.57%,#8e58ff 57.14%,#9955ff 60.71%,#a351ff 64.29%,#ad4dff 67.86%,#b649ff 71.43%,#bf44ff 75%,#c83eff 78.57%,#d138ff 82.14%,#da30ff 85.71%,#e226ff 89.29%,#eb17ff 92.86%,#f300ff 96.43%,#fc00ff 100%)"></i><i style="left:112px;top:494px;width:105px;height:2px;background:linear-gradient(90deg,#0076ff 0%,#0074ff 3.846%,#0073ff 7.692%,#0071ff 11.54%,#006fff 15.38%,#006eff 19.23%,#006cff 23.08%,#006aff 26.92%,#0068ff 30.77%,#0066ff 34.62%,#3863ff 38.46%,#5061ff 42.31%,#615eff 46.15%,#705bff 50%,#7e58ff 53.85%,#8a55ff 57.69%,#9551ff 61.54%,#a04dff 65.38%,#aa49ff 69.23%,#b444ff 73.08%,#bd3fff 76.92%,#c638ff 80.77%,#cf30ff 84.62%,#d827ff 88.46%,#e117ff 92.31%,#ea00ff 96.15%,#f200ff 100%)"></i><i style="left:113px;top:496px;width:100px;height:2px;background:linear-gradient(90deg,#0073ff 0%,#0071ff 4%,#0070ff 8%,#006eff 12%,#006cff 16%,#006aff 20%,#0068ff 24%,#0066ff 28%,#0064ff 32%,#0c62ff 36%,#3c60ff 40%,#525dff 44%,#635aff 48%,#7257ff 52%,#7f54ff 56%,#8b50ff 60%,#964cff 64%,#a048ff 68%,#aa43ff 72%,#b43dff 76%,#bd37ff 80%,#c630ff 84%,#cf26ff 88%,#d816ff 92%,#e100ff 96%,#e900ff 100%)"></i><i style="left:114px;top:498px;width:95px;height:2px;background:linear-gradient(90deg,#0070ff 0%,#006eff 4.167%,#006dff 8.333%,#006bff 12.5%,#0069ff 16.67%,#0067ff 20.83%,#0065ff 25%,#0063ff 29.17%,#0061ff 33.33%,#1b5eff 37.5%,#3f5cff 41.67%,#5459ff 45.83%,#6556ff 50%,#7352ff 54.17%,#804fff 58.33%,#8b4bff 62.5%,#9647ff 66.67%,#a042ff 70.83%,#aa3dff 75%,#b436ff 79.17%,#bd2fff 83.33%,#c625ff 87.5%,#cf15ff 91.67%,#d700ff 95.83%,#e000ff 100%)"></i><i style="left:115px;top:500px;width:89px;height:2px;background:linear-gradient(90deg,#006dff 0%,#006bff 4.545%,#0069ff 9.091%,#0067ff 13.64%,#0065ff 18.18%,#0063ff 22.73%,#0061ff 27.27%,#005fff 31.82%,#005cff 36.36%,#2f5aff 40.91%,#4a57ff 45.45%,#5d53ff 50%,#6c50ff 54.55%,#7a4cff 59.09%,#8648ff 63.64%,#9143ff 68.18%,#9c3eff 72.73%,#a638ff 77.27%,#b031ff 81.82%,#ba28ff 86.36%,#c31bff 90.91%,#cc00ff 95.45%,#d500ff 100%)"></i><i style="left:116px;top:502px;width:84px;height:2px;background:linear-gradient(90deg,#006aff 0%,#0068ff 4.762%,#0066ff 9.524%,#0064ff 14.29%,#0062ff 19.05%,#0060ff 23.81%,#005dff 28.57%,#005bff 33.33%,#0058ff 38.1%,#3456ff 42.86%,#4c52ff 47.62%,#5e4fff 52.38%,#6d4bff 57.14%,#7b47ff 61.9%,#8742ff 66.67%,#923dff 71.43%,#9c37ff 76.19%,#a630ff 80.95%,#b027ff 85.71%,#b91bff 90.48%,#c300ff 95.24%,#cb00ff 100%)"></i><i style="left:117px;top:504px;width:79px;height:2px;background:linear-gradient(90deg,#0067ff 0%,#0065ff 5%,#0063ff 10%,#0061ff 15%,#005eff 20%,#005cff 25%,#005aff 30%,#0057ff 35%,#0054ff 40%,#3851ff 45%,#4f4eff 50%,#604aff 55%,#6e46ff 60%,#7b41ff 65%,#873cff 70%,#9237ff 75%,#9c30ff 80%,#a627ff 85%,#b01aff 90%,#b900ff 95%,#c200ff 100%)"></i><i style="left:118px;top:506px;width:73px;height:2px;background:linear-gradient(90deg,#0063ff 0%,#0061ff 5.556%,#005fff 11.11%,#005dff 16.67%,#005aff 22.22%,#0058ff 27.78%,#0055ff 33.33%,#0052ff 38.89%,#244fff 44.44%,#444bff 50%,#5847ff 55.56%,#6843ff 61.11%,#763eff 66.67%,#8239ff 72.22%,#8e32ff 77.78%,#992aff 83.33%,#a31fff 88.89%,#ad03ff 94.44%,#b600ff 100%)"></i><i style="left:119px;top:508px;width:68px;height:2px;background:linear-gradient(90deg,#0060ff 0%,#005eff 5.882%,#005bff 11.76%,#0059ff 17.65%,#0057ff 23.53%,#0054ff 29.41%,#0051ff 35.29%,#004eff 41.18%,#2a4bff 47.06%,#4647ff 52.94%,#5942ff 58.82%,#693dff 64.71%,#7738ff 70.59%,#8331ff 76.47%,#8e29ff 82.35%,#991fff 88.24%,#a306ff 94.12%,#ac00ff 100%)"></i><i style="left:121px;top:510px;width:62px;height:2px;background:linear-gradient(90deg,#005cff 0%,#005aff 6.25%,#0057ff 12.5%,#0055ff 18.75%,#0052ff 25%,#004fff 31.25%,#004cff 37.5%,#0049ff 43.75%,#3245ff 50%,#4b41ff 56.25%,#5c3cff 62.5%,#6b37ff 68.75%,#7830ff 75%,#8429ff 81.25%,#8e1eff 87.5%,#9906ff 93.75%,#a200ff 100%)"></i><i style="left:122px;top:512px;width:56px;height:2px;background:linear-gradient(90deg,#0058ff 0%,#0056ff 7.143%,#0053ff 14.29%,#0050ff 21.43%,#004dff 28.57%,#004aff 35.71%,#0047ff 42.86%,#1d43ff 50%,#403eff 57.14%,#5539ff 64.29%,#6533ff 71.43%,#732cff 78.57%,#7f22ff 85.71%,#8b13ff 92.86%,#9500ff 100%)"></i><i style="left:124px;top:514px;width:50px;height:2px;background:linear-gradient(90deg,#0054ff 0%,#0051ff 8.333%,#004eff 16.67%,#004bff 25%,#0047ff 33.33%,#0043ff 41.67%,#003fff 50%,#3a3aff 58.33%,#5134ff 66.67%,#632dff 75%,#7123ff 83.33%,#7e15ff 91.67%,#8a00ff 100%)"></i><i style="left:125px;top:516px;width:45px;height:2px;background:linear-gradient(90deg,#004fff 0%,#004cff 9.091%,#0049ff 18.18%,#0046ff 27.27%,#0042ff 36.36%,#003eff 45.45%,#1439ff 54.55%,#3d33ff 63.64%,#532cff 72.73%,#6423ff 81.82%,#7215ff 90.91%,#7f00ff 100%)"></i><i style="left:127px;top:518px;width:38px;height:2px;background:linear-gradient(90deg,#004aff 0%,#0047ff 10%,#0044ff 20%,#0040ff 30%,#003cff 40%,#0038ff 50%,#1a33ff 60%,#3d2dff 70%,#5125ff 80%,#6119ff 90%,#6f00ff 100%)"></i><i style="left:129px;top:520px;width:32px;height:2px;background:linear-gradient(90deg,#0045ff 0%,#0041ff 12.5%,#003dff 25%,#0038ff 37.5%,#0033ff 50%,#002eff 62.5%,#3a26ff 75%,#501aff 87.5%,#6000ff 100%)"></i><i style="left:131px;top:522px;width:26px;height:2px;background:linear-gradient(90deg,#003eff 0%,#003aff 16.67%,#0035ff 33.33%,#002eff 50%,#0027ff 66.67%,#381cff 83.33%,#5000ff 100%)"></i><i style="left:133px;top:524px;width:20px;height:2px;background:linear-gradient(90deg,#0037ff 0%,#0032ff 20%,#002cff 40%,#0025ff 60%,#0a1bff 80%,#3a00ff 100%)"></i><i style="left:136px;top:526px;width:12px;height:2px;background:linear-gradient(90deg,#002dff 0%,#0026ff 33.33%,#001eff 66.67%,#000eff 100%)"></i><i style="left:138px;top:528px;width:6px;height:2px;background:linear-gradient(90deg,#0022ff 0%,#001aff 50%,#000dff 100%)"></i></div></div>
<svg class="ov" viewBox="0 0 900 721">
<defs>
<linearGradient id="deg" x1="0" y1="0" x2="0" y2="1">
<stop offset="0" stop-color="#e64c1b"/><stop offset=".1" stop-color="#ea6a1a"/><stop offset=".2" stop-color="#ee8e18"/>
<stop offset=".3" stop-color="#efc01a"/><stop offset=".4" stop-color="#ebe81c"/><stop offset=".5" stop-color="#d9e41c"/>
<stop offset=".6" stop-color="#b4cf18"/><stop offset=".7" stop-color="#8db717"/><stop offset=".8" stop-color="#5f9f17"/>
<stop offset=".9" stop-color="#468f17"/><stop offset="1" stop-color="#388616"/>
</linearGradient>
<radialGradient id="egg" cx=".38" cy=".3" r=".75"><stop offset="0" stop-color="#6a6aa6"/><stop offset=".45" stop-color="#3b3b74"/><stop offset="1" stop-color="#1c1c38"/></radialGradient>
</defs>
<!-- icon -->
<path d="M19.1 6.7 C24 6.7 27.4 14.8 27.4 20.8 C27.4 26.4 23.7 29.8 19.1 29.8 C14.5 29.8 10.8 26.4 10.8 20.8 C10.8 14.8 14.2 6.7 19.1 6.7Z" fill="url(#egg)"/>
<!-- close X -->
<path d="M867.4 11.5 L881.8 25.7 M881.8 11.5 L867.4 25.7" stroke="#161616" stroke-width="1.4" fill="none"/>
<!-- CIE grid -->
<g stroke="#000" stroke-opacity=".12" stroke-width="1.35" fill="none">
<path d="M110.7 162V530M151.7 162V530M192.7 162V530M233.7 162V530M274.7 162V530M315.7 162V530M356.7 162V530M397.7 162V530"/>
<path d="M71 202.8H432M71 243.8H432M71 284.8H432M71 325.8H432M71 366.8H432M71 407.8H432M71 448.8H432M71 489.8H432"/>
</g>
<path d="M70 162H432" stroke="#c6c6c6" stroke-width="1.2"/>
<path d="M70.6 161.5V530.5" stroke="#787878" stroke-width="1.1"/>
<path d="M70 529.9H432" stroke="#727272" stroke-width="1.15"/>
<!-- triangles -->
<g fill="none" stroke="#ffa624" stroke-linecap="round">
<path d="M197.5 285.2 L326.1 392.2" stroke-opacity=".9" stroke-width="1.45"/>
<path d="M326.1 392.2 L135.6 495.6" stroke-opacity=".95" stroke-width="1.7"/>
<path d="M135.6 495.6 L197.5 285.2" stroke-opacity=".7" stroke-width="1.15"/>
</g>
<path d="M132.8 196.7 L308.9 369.8 L122.8 502.2Z" fill="none" stroke="#0a0a0a" stroke-width="1.3"/>
<!-- bar chart -->
<rect x="466" y="162.3" width="368" height="367.7" fill="url(#deg)"/>
<g stroke="#000" stroke-opacity=".1" stroke-width="1.2"><path d="M467 235.5H833M467 309H833M467 382.5H833M467 456H833"/></g>
<clipPath id="bc"><rect x="466" y="162" width="368" height="368"/></clipPath>
<g clip-path="url(#bc)"><rect x="531.35" y="325.45" width="12.50" height="206.30" fill="#323232" stroke="#0a0a0a" stroke-width="1.5"/><rect x="548.65" y="382.25" width="12.50" height="149.50" fill="#4a4a4a" stroke="#0a0a0a" stroke-width="1.5"/><rect x="565.95" y="477.35" width="12.50" height="54.40" fill="#888888" stroke="#0a0a0a" stroke-width="1.5"/><rect x="583.25" y="491.95" width="12.50" height="39.80" fill="#c4c4c4" stroke="#0a0a0a" stroke-width="1.5"/><rect x="617.85" y="356.25" width="12.50" height="175.50" fill="#ff0000" stroke="#0a0a0a" stroke-width="1.5"/><rect x="635.15" y="204.35" width="12.50" height="327.40" fill="#00ff00" stroke="#0a0a0a" stroke-width="1.5"/><rect x="652.45" y="411.15" width="12.50" height="120.60" fill="#0000ff" stroke="#0a0a0a" stroke-width="1.5"/><rect x="669.75" y="491.95" width="12.50" height="39.80" fill="#00ffff" stroke="#0a0a0a" stroke-width="1.5"/><rect x="687.05" y="418.05" width="12.50" height="113.70" fill="#ff00ff" stroke="#0a0a0a" stroke-width="1.5"/><rect x="704.35" y="292.45" width="12.50" height="239.30" fill="#ffff00" stroke="#0a0a0a" stroke-width="1.5"/><rect x="721.65" y="425.45" width="12.50" height="106.30" fill="#b05a5a" stroke="#0a0a0a" stroke-width="1.5"/><rect x="738.95" y="237.25" width="12.50" height="294.50" fill="#58aa58" stroke="#0a0a0a" stroke-width="1.5"/><rect x="756.25" y="356.25" width="12.50" height="175.50" fill="#5a5aae" stroke="#0a0a0a" stroke-width="1.5"/><rect x="773.55" y="411.15" width="12.50" height="120.60" fill="#5aaeae" stroke="#0a0a0a" stroke-width="1.5"/><rect x="790.85" y="406.75" width="12.50" height="125.00" fill="#ae5aae" stroke="#0a0a0a" stroke-width="1.5"/><rect x="808.15" y="247.55" width="12.50" height="284.20" fill="#aeae5a" stroke="#0a0a0a" stroke-width="1.5"/></g>
<rect x="466" y="162.3" width="368" height="367.7" fill="none" stroke="#1a0d05" stroke-width="1.5"/>
<text x="37.20" y="25.00" font-size="17.5" fill="#1b1b1b" letter-spacing="-0.008" stroke="#1b1b1b" stroke-width=".3">blue eye pro</text>
<text x="13.80" y="56.70" font-size="17" fill="#1a1a1a" letter-spacing="-0.197" stroke="#1a1a1a" stroke-width=".42">Tools</text>
<text x="73.00" y="56.70" font-size="17" fill="#1a1a1a" letter-spacing="-0.322" stroke="#1a1a1a" stroke-width=".42">Device</text>
<text x="143.40" y="56.70" font-size="17" fill="#1a1a1a" letter-spacing="0.164" stroke="#1a1a1a" stroke-width=".42">Help</text>
<text x="572.20" y="130.80" font-size="35" fill="#0c0c0c" letter-spacing="-0.185" font-weight="700">Calibration Report</text>
<text x="140.00" y="150.90" font-size="14.5" fill="#1a1a1a" letter-spacing="-0.900" stroke="#1a1a1a" stroke-width=".3">sRGB</text>
<text x="218.10" y="150.90" font-size="14.5" fill="#1a1a1a" letter-spacing="-0.051" stroke="#1a1a1a" stroke-width=".3">Adobe RGB</text>
<text x="337.40" y="150.90" font-size="14.5" fill="#1a1a1a" letter-spacing="0.644" stroke="#1a1a1a" stroke-width=".3">ISOcoated</text>
<text x="160.00" y="562.60" font-size="17.8" fill="#1c1c1c" letter-spacing="-0.236" stroke="#1c1c1c" stroke-width=".3">Target</text>
<text x="252.30" y="562.60" font-size="17.8" fill="#1c1c1c" letter-spacing="-0.075" stroke="#1c1c1c" stroke-width=".3">Current</text>
<text x="343.60" y="562.60" font-size="17.8" fill="#1c1c1c" letter-spacing="-0.042" stroke="#1c1c1c" stroke-width=".3">Deviation</text>
<text x="67.60" y="584.20" font-size="17.8" fill="#1c1c1c" letter-spacing="0.039" stroke="#1c1c1c" stroke-width=".3">Gamma</text>
<text x="66.60" y="605.90" font-size="17.8" fill="#1c1c1c" letter-spacing="-0.048" stroke="#1c1c1c" stroke-width=".3">Kelvin</text>
<text x="67.80" y="627.40" font-size="17.8" fill="#1c1c1c" letter-spacing="-0.008" stroke="#1c1c1c" stroke-width=".3">cd/m2</text>
<text x="159.80" y="584.20" font-size="17.8" fill="#1c1c1c" letter-spacing="-0.165" stroke="#1c1c1c" stroke-width=".3">2.2</text>
<text x="160.00" y="605.90" font-size="17.8" fill="#1c1c1c" letter-spacing="-0.256" stroke="#1c1c1c" stroke-width=".3">6500</text>
<text x="160.10" y="627.40" font-size="17.8" fill="#1c1c1c" letter-spacing="-0.389" stroke="#1c1c1c" stroke-width=".3">120</text>
<text x="251.70" y="584.20" font-size="17.8" fill="#4c9834" letter-spacing="-0.315" stroke="#4c9834" stroke-width=".3">2.3</text>
<text x="251.70" y="605.90" font-size="17.8" fill="#f3854a" letter-spacing="0.078" stroke="#f3854a" stroke-width=".3">8499</text>
<text x="252.70" y="627.40" font-size="17.8" fill="#4c9834" letter-spacing="-0.629" stroke="#4c9834" stroke-width=".3">116</text>
<text x="344.30" y="584.20" font-size="17.8" fill="#4c9834" letter-spacing="-1.189" stroke="#4c9834" stroke-width=".3">4%</text>
<text x="344.60" y="605.90" font-size="17.8" fill="#f3854a" letter-spacing="-0.839" stroke="#f3854a" stroke-width=".3">31%</text>
<text x="344.60" y="627.40" font-size="17.8" fill="#4c9834" letter-spacing="-1.489" stroke="#4c9834" stroke-width=".3">3%</text>
<text x="465.40" y="562.60" font-size="17.8" fill="#1c1c1c" letter-spacing="-0.455" stroke="#1c1c1c" stroke-width=".3">Delta E Average</text>
<text x="465.40" y="584.20" font-size="17.8" fill="#1c1c1c" letter-spacing="-0.150" stroke="#1c1c1c" stroke-width=".3">Delta E Maximum</text>
<text x="628.50" y="562.60" font-size="17.8" fill="#f3854a" letter-spacing="-0.465" stroke="#f3854a" stroke-width=".3">3.9</text>
<text x="628.70" y="584.20" font-size="17.8" fill="#f3854a" letter-spacing="-0.565" stroke="#f3854a" stroke-width=".3">8.9</text>
<text x="42.00" y="691.80" font-size="15" fill="#1a1a1a" letter-spacing="0.105" stroke="#1a1a1a" stroke-width=".3">Main Menu</text>
<text x="165.90" y="691.80" font-size="15" fill="#1a1a1a" letter-spacing="0.174" stroke="#1a1a1a" stroke-width=".3">Calibration</text>
<text x="679.70" y="691.80" font-size="15" fill="#1a1a1a" letter-spacing="0.284" stroke="#1a1a1a" stroke-width=".3">Save</text>
<text x="805.70" y="691.80" font-size="15" fill="#1a1a1a" letter-spacing="0.186" stroke="#1a1a1a" stroke-width=".3">Quit</text>
<text x="311.00" y="249.10" font-size="18.5" fill="#000" letter-spacing="0.448" font-weight="700">Monitor</text>
<text x="312.00" y="272.00" font-size="18.5" fill="#f6a21e" letter-spacing="0.320" font-weight="700">sRGB</text>
<text x="73.90" y="173.00" font-size="11" fill="#4a4a4a" letter-spacing="0.000" font-weight="700">y</text>
<text x="73.90" y="205.90" font-size="11" fill="#4a4a4a" letter-spacing="0.563" font-weight="700">0.8</text>
<text x="73.90" y="287.90" font-size="11" fill="#4a4a4a" letter-spacing="0.563" font-weight="700">0.6</text>
<text x="73.90" y="369.90" font-size="11" fill="#4a4a4a" letter-spacing="0.063" font-weight="700">0.4</text>
<text x="73.90" y="451.90" font-size="11" fill="#4a4a4a" letter-spacing="0.563" font-weight="700">0.2</text>
<text x="74.00" y="526.40" font-size="11" fill="#4a4a4a" letter-spacing="0.000" font-weight="700">0</text>
<text x="144.30" y="526.40" font-size="11" fill="#4a4a4a" letter-spacing="0.463" font-weight="700">0.2</text>
<text x="226.30" y="526.40" font-size="11" fill="#4a4a4a" letter-spacing="-0.037" font-weight="700">0.4</text>
<text x="308.30" y="526.40" font-size="11" fill="#4a4a4a" letter-spacing="0.463" font-weight="700">0.6</text>
<text x="390.30" y="526.40" font-size="11" fill="#4a4a4a" letter-spacing="0.463" font-weight="700">0.8</text>
<text x="428.60" y="526.40" font-size="11" fill="#4a4a4a" letter-spacing="0.000" font-weight="700">x</text>
<text x="469.40" y="172.60" font-size="10.4" fill="rgba(25,12,0,.7)" letter-spacing="0.874" stroke="rgba(25,12,0,.7)" stroke-width=".55" word-spacing="-1.3">10 d E 94</text>
<text x="467.60" y="239.10" font-size="10.4" fill="rgba(25,12,0,.7)" letter-spacing="1.196" stroke="rgba(25,12,0,.7)" stroke-width=".55" word-spacing="-1.3">8 d E 94</text>
<text x="467.60" y="312.60" font-size="10.4" fill="rgba(25,12,0,.7)" letter-spacing="1.196" stroke="rgba(25,12,0,.7)" stroke-width=".55" word-spacing="-1.3">6 d E 94</text>
<text x="467.60" y="386.10" font-size="10.4" fill="rgba(25,12,0,.7)" letter-spacing="1.196" stroke="rgba(25,12,0,.7)" stroke-width=".55" word-spacing="-1.3">4 d E 94</text>
<text x="467.60" y="459.60" font-size="10.4" fill="rgba(25,12,0,.7)" letter-spacing="1.196" stroke="rgba(25,12,0,.7)" stroke-width=".55" word-spacing="-1.3">2 d E 94</text>
<rect x="432" y="510" width="8" height="20" fill="#f0f0f0"/>
</svg>
</body>
</html>
